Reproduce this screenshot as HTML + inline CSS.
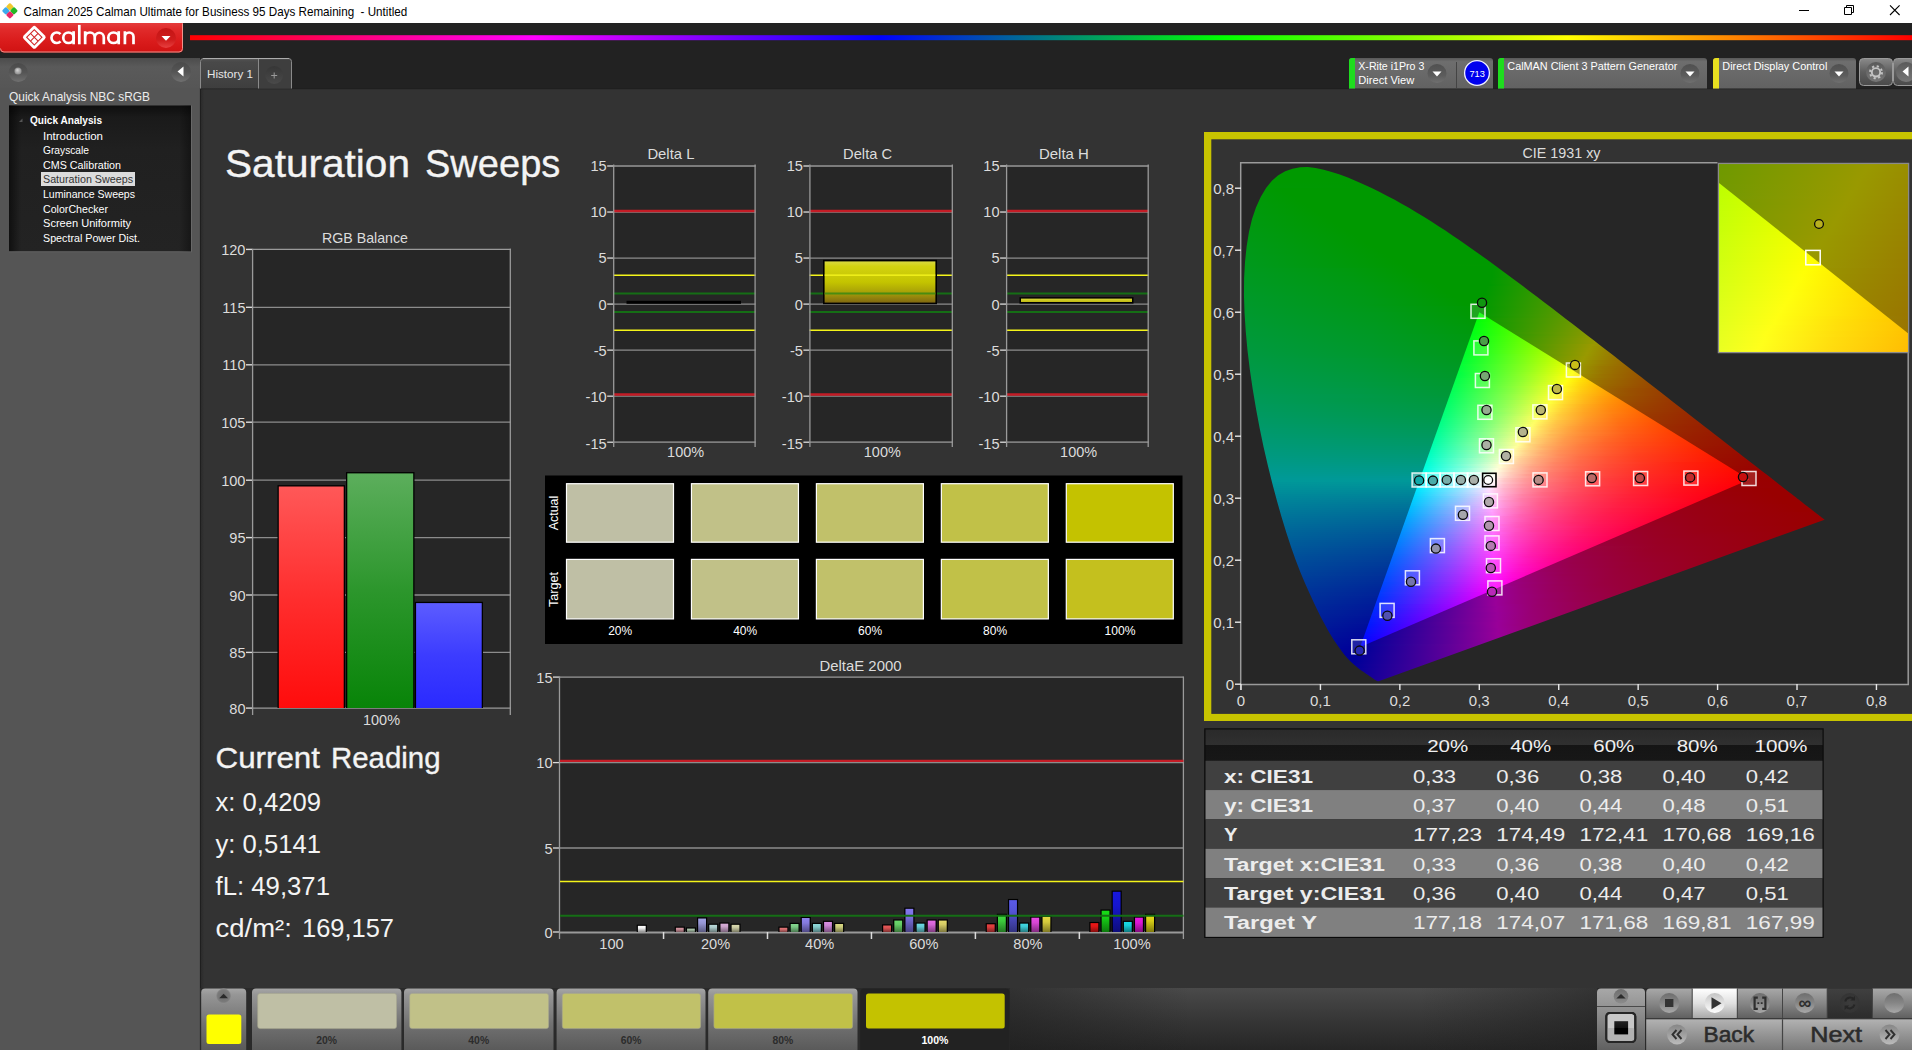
<!DOCTYPE html>
<html><head><meta charset="utf-8"><title>Calman</title>
<style>
html,body{margin:0;padding:0;background:#333;overflow:hidden}
svg{display:block;font-family:"Liberation Sans",sans-serif}
text{white-space:pre}
</style></head><body>
<svg width="1912" height="1050" viewBox="0 0 1912 1050">
<defs>
<linearGradient id="l1" x1="0" y1="0" x2="0" y2="1"><stop offset="0" stop-color="#e43c3c"/><stop offset="0.2" stop-color="#e12b2b"/><stop offset="0.6" stop-color="#da1c1c"/><stop offset="1" stop-color="#d01212"/></linearGradient>
<linearGradient id="l2" x1="0" y1="0" x2="0" y2="1"><stop offset="0" stop-color="#c41414"/><stop offset="0.6" stop-color="#d01c1c"/><stop offset="1" stop-color="#e84040"/></linearGradient>
<linearGradient id="l3" x1="0" y1="0" x2="1" y2="0"><stop offset="0" stop-color="#ff0000"/><stop offset="0.2" stop-color="#ff00ff"/><stop offset="0.4" stop-color="#0000ff"/><stop offset="0.6" stop-color="#00ff00"/><stop offset="0.8" stop-color="#ffff00"/><stop offset="1" stop-color="#ff0000"/></linearGradient>
<linearGradient id="l4" x1="0" y1="0" x2="0" y2="1"><stop offset="0" stop-color="#4a4a4a"/><stop offset="0.03" stop-color="#585858"/><stop offset="1" stop-color="#555555"/></linearGradient>
<linearGradient id="l5" x1="0" y1="0" x2="0" y2="1"><stop offset="0" stop-color="#4c4c4c"/><stop offset="0.3" stop-color="#5a5a5a"/><stop offset="1" stop-color="#565656"/></linearGradient>
<linearGradient id="l6" x1="0" y1="0" x2="1" y2="0"><stop offset="0" stop-color="#2b2b2b"/><stop offset="1" stop-color="#333333"/></linearGradient>
<linearGradient id="l7" x1="0" y1="0" x2="0" y2="1"><stop offset="0" stop-color="#4a4a4a"/><stop offset="0.5" stop-color="#555"/><stop offset="1" stop-color="#707070"/></linearGradient>
<radialGradient id="r8" cx="0.5" cy="0.5" r="0.5" fx="0.4" fy="0.35"><stop offset="0" stop-color="#d8d8d8"/><stop offset="1" stop-color="#8a8a8a"/></radialGradient>
<linearGradient id="l9" x1="0" y1="0" x2="0" y2="1"><stop offset="0" stop-color="#4a4a4a"/><stop offset="0.5" stop-color="#555"/><stop offset="1" stop-color="#707070"/></linearGradient>
<linearGradient id="l10" x1="0" y1="0" x2="0" y2="1"><stop offset="0" stop-color="#0e0e0e"/><stop offset="0.08" stop-color="#1a1a1a"/><stop offset="0.3" stop-color="#202020"/><stop offset="1" stop-color="#232323"/></linearGradient>
<linearGradient id="l11" x1="0" y1="0" x2="1" y2="0"><stop offset="0" stop-color="#0c0c0c"/><stop offset="1" stop-color="#0c0c0c"/></linearGradient>
<linearGradient id="l12" x1="0" y1="0" x2="1" y2="0"><stop offset="0" stop-color="rgba(0,0,0,0.55)"/><stop offset="1" stop-color="rgba(0,0,0,0)"/></linearGradient>
<linearGradient id="l13" x1="0" y1="0" x2="1" y2="0"><stop offset="0" stop-color="rgba(0,0,0,0)"/><stop offset="1" stop-color="rgba(0,0,0,0.35)"/></linearGradient>
<linearGradient id="l14" x1="0" y1="0" x2="0" y2="1"><stop offset="0" stop-color="#525252"/><stop offset="0.12" stop-color="#494949"/><stop offset="1" stop-color="#3e3e3e"/></linearGradient>
<linearGradient id="l15" x1="0" y1="0" x2="0" y2="1"><stop offset="0" stop-color="#363636"/><stop offset="1" stop-color="#4a4a4a"/></linearGradient>
<linearGradient id="l16" x1="0" y1="0" x2="0" y2="1"><stop offset="0" stop-color="#585858"/><stop offset="0.12" stop-color="#6e6e6e"/><stop offset="1" stop-color="#626262"/></linearGradient>
<linearGradient id="l17" x1="0" y1="0" x2="0" y2="1"><stop offset="0" stop-color="#505050"/><stop offset="0.6" stop-color="#5c5c5c"/><stop offset="1" stop-color="#707070"/></linearGradient>
<linearGradient id="l18" x1="0" y1="0" x2="0" y2="1"><stop offset="0" stop-color="#585858"/><stop offset="0.12" stop-color="#6e6e6e"/><stop offset="1" stop-color="#626262"/></linearGradient>
<linearGradient id="l19" x1="0" y1="0" x2="0" y2="1"><stop offset="0" stop-color="#505050"/><stop offset="0.6" stop-color="#5c5c5c"/><stop offset="1" stop-color="#707070"/></linearGradient>
<linearGradient id="l20" x1="0" y1="0" x2="0" y2="1"><stop offset="0" stop-color="#585858"/><stop offset="0.12" stop-color="#6e6e6e"/><stop offset="1" stop-color="#626262"/></linearGradient>
<linearGradient id="l21" x1="0" y1="0" x2="0" y2="1"><stop offset="0" stop-color="#505050"/><stop offset="0.6" stop-color="#5c5c5c"/><stop offset="1" stop-color="#707070"/></linearGradient>
<linearGradient id="l22" x1="0" y1="0" x2="0" y2="1"><stop offset="0" stop-color="#8a8a8a"/><stop offset="0.5" stop-color="#5e5e5e"/><stop offset="1" stop-color="#4a4a4a"/></linearGradient>
<linearGradient id="l23" x1="0" y1="0" x2="0" y2="1"><stop offset="0" stop-color="#5a5a5a"/><stop offset="1" stop-color="#777"/></linearGradient>
<linearGradient id="l24" x1="0" y1="0" x2="0" y2="1"><stop offset="0" stop-color="#5a5a5a"/><stop offset="1" stop-color="#777"/></linearGradient>
<linearGradient id="l25" x1="0" y1="0" x2="0" y2="1"><stop offset="0" stop-color="#ff5858"/><stop offset="0.5" stop-color="#ff2e2e"/><stop offset="1" stop-color="#ff0c0c"/></linearGradient>
<linearGradient id="l26" x1="0" y1="0" x2="0" y2="1"><stop offset="0" stop-color="#5cae5c"/><stop offset="0.5" stop-color="#2c962c"/><stop offset="1" stop-color="#088408"/></linearGradient>
<linearGradient id="l27" x1="0" y1="0" x2="0" y2="1"><stop offset="0" stop-color="#5c5cff"/><stop offset="0.5" stop-color="#3c3cff"/><stop offset="1" stop-color="#2a2aff"/></linearGradient>
<linearGradient id="l28" x1="0" y1="0" x2="0" y2="1"><stop offset="0" stop-color="#d8d840"/><stop offset="0.12" stop-color="#d2d210"/><stop offset="0.5" stop-color="#c4c400"/><stop offset="0.75" stop-color="#a8a008"/><stop offset="1" stop-color="#806810"/></linearGradient>
<linearGradient id="l29" x1="0" y1="0" x2="0" y2="1"><stop offset="0" stop-color="#d8d83a"/><stop offset="1" stop-color="#c0b810"/></linearGradient>
<linearGradient id="l30" x1="0" y1="0" x2="0" y2="1"><stop offset="0" stop-color="#ffffff"/><stop offset="0.35" stop-color="#f0f0f0"/><stop offset="1" stop-color="#909090"/></linearGradient>
<linearGradient id="l31" x1="0" y1="0" x2="0" y2="1"><stop offset="0" stop-color="#d897a2"/><stop offset="0.35" stop-color="#c88c96"/><stop offset="1" stop-color="#78545a"/></linearGradient>
<linearGradient id="l32" x1="0" y1="0" x2="0" y2="1"><stop offset="0" stop-color="#b2cdb2"/><stop offset="0.35" stop-color="#a5bea5"/><stop offset="1" stop-color="#637263"/></linearGradient>
<linearGradient id="l33" x1="0" y1="0" x2="0" y2="1"><stop offset="0" stop-color="#a2a2e4"/><stop offset="0.35" stop-color="#9696d4"/><stop offset="1" stop-color="#5a5a7f"/></linearGradient>
<linearGradient id="l34" x1="0" y1="0" x2="0" y2="1"><stop offset="0" stop-color="#b9dada"/><stop offset="0.35" stop-color="#accaca"/><stop offset="1" stop-color="#677979"/></linearGradient>
<linearGradient id="l35" x1="0" y1="0" x2="0" y2="1"><stop offset="0" stop-color="#daaeda"/><stop offset="0.35" stop-color="#caa2ca"/><stop offset="1" stop-color="#796179"/></linearGradient>
<linearGradient id="l36" x1="0" y1="0" x2="0" y2="1"><stop offset="0" stop-color="#dadaae"/><stop offset="0.35" stop-color="#cacaa2"/><stop offset="1" stop-color="#797961"/></linearGradient>
<linearGradient id="l37" x1="0" y1="0" x2="0" y2="1"><stop offset="0" stop-color="#e47678"/><stop offset="0.35" stop-color="#d46e70"/><stop offset="1" stop-color="#7f4243"/></linearGradient>
<linearGradient id="l38" x1="0" y1="0" x2="0" y2="1"><stop offset="0" stop-color="#83d88e"/><stop offset="0.35" stop-color="#7ac884"/><stop offset="1" stop-color="#49784f"/></linearGradient>
<linearGradient id="l39" x1="0" y1="0" x2="0" y2="1"><stop offset="0" stop-color="#8e83ef"/><stop offset="0.35" stop-color="#847ade"/><stop offset="1" stop-color="#4f4985"/></linearGradient>
<linearGradient id="l40" x1="0" y1="0" x2="0" y2="1"><stop offset="0" stop-color="#8edada"/><stop offset="0.35" stop-color="#84caca"/><stop offset="1" stop-color="#4f7979"/></linearGradient>
<linearGradient id="l41" x1="0" y1="0" x2="0" y2="1"><stop offset="0" stop-color="#da8ee4"/><stop offset="0.35" stop-color="#ca84d4"/><stop offset="1" stop-color="#794f7f"/></linearGradient>
<linearGradient id="l42" x1="0" y1="0" x2="0" y2="1"><stop offset="0" stop-color="#dada83"/><stop offset="0.35" stop-color="#caca7a"/><stop offset="1" stop-color="#797949"/></linearGradient>
<linearGradient id="l43" x1="0" y1="0" x2="0" y2="1"><stop offset="0" stop-color="#e95858"/><stop offset="0.35" stop-color="#d85252"/><stop offset="1" stop-color="#813131"/></linearGradient>
<linearGradient id="l44" x1="0" y1="0" x2="0" y2="1"><stop offset="0" stop-color="#6cda6c"/><stop offset="0.35" stop-color="#64ca64"/><stop offset="1" stop-color="#3c793c"/></linearGradient>
<linearGradient id="l45" x1="0" y1="0" x2="0" y2="1"><stop offset="0" stop-color="#8378ef"/><stop offset="0.35" stop-color="#7a70de"/><stop offset="1" stop-color="#494385"/></linearGradient>
<linearGradient id="l46" x1="0" y1="0" x2="0" y2="1"><stop offset="0" stop-color="#6cdae4"/><stop offset="0.35" stop-color="#64cad4"/><stop offset="1" stop-color="#3c797f"/></linearGradient>
<linearGradient id="l47" x1="0" y1="0" x2="0" y2="1"><stop offset="0" stop-color="#e46ce4"/><stop offset="0.35" stop-color="#d464d4"/><stop offset="1" stop-color="#7f3c7f"/></linearGradient>
<linearGradient id="l48" x1="0" y1="0" x2="0" y2="1"><stop offset="0" stop-color="#e4da6c"/><stop offset="0.35" stop-color="#d4ca64"/><stop offset="1" stop-color="#7f793c"/></linearGradient>
<linearGradient id="l49" x1="0" y1="0" x2="0" y2="1"><stop offset="0" stop-color="#e94040"/><stop offset="0.35" stop-color="#d83c3c"/><stop offset="1" stop-color="#812424"/></linearGradient>
<linearGradient id="l50" x1="0" y1="0" x2="0" y2="1"><stop offset="0" stop-color="#40da40"/><stop offset="0.35" stop-color="#3cca3c"/><stop offset="1" stop-color="#247924"/></linearGradient>
<linearGradient id="l51" x1="0" y1="0" x2="0" y2="1"><stop offset="0" stop-color="#5a5ae7"/><stop offset="0.35" stop-color="#5454d6"/><stop offset="1" stop-color="#323280"/></linearGradient>
<linearGradient id="l52" x1="0" y1="0" x2="0" y2="1"><stop offset="0" stop-color="#40dae4"/><stop offset="0.35" stop-color="#3ccad4"/><stop offset="1" stop-color="#24797f"/></linearGradient>
<linearGradient id="l53" x1="0" y1="0" x2="0" y2="1"><stop offset="0" stop-color="#e94be4"/><stop offset="0.35" stop-color="#d846d4"/><stop offset="1" stop-color="#812a7f"/></linearGradient>
<linearGradient id="l54" x1="0" y1="0" x2="0" y2="1"><stop offset="0" stop-color="#e4da40"/><stop offset="0.35" stop-color="#d4ca3c"/><stop offset="1" stop-color="#7f7924"/></linearGradient>
<linearGradient id="l55" x1="0" y1="0" x2="0" y2="1"><stop offset="0" stop-color="#f11717"/><stop offset="0.35" stop-color="#e01616"/><stop offset="1" stop-color="#860d0d"/></linearGradient>
<linearGradient id="l56" x1="0" y1="0" x2="0" y2="1"><stop offset="0" stop-color="#17dc17"/><stop offset="0.35" stop-color="#16cc16"/><stop offset="1" stop-color="#0d7a0d"/></linearGradient>
<linearGradient id="l57" x1="0" y1="0" x2="0" y2="1"><stop offset="0" stop-color="#1717de"/><stop offset="0.35" stop-color="#1616ce"/><stop offset="1" stop-color="#0d0d7b"/></linearGradient>
<linearGradient id="l58" x1="0" y1="0" x2="0" y2="1"><stop offset="0" stop-color="#17dce7"/><stop offset="0.35" stop-color="#16ccd6"/><stop offset="1" stop-color="#0d7a80"/></linearGradient>
<linearGradient id="l59" x1="0" y1="0" x2="0" y2="1"><stop offset="0" stop-color="#eb17e4"/><stop offset="0.35" stop-color="#da16d4"/><stop offset="1" stop-color="#820d7f"/></linearGradient>
<linearGradient id="l60" x1="0" y1="0" x2="0" y2="1"><stop offset="0" stop-color="#e7dc17"/><stop offset="0.35" stop-color="#d6cc16"/><stop offset="1" stop-color="#807a0d"/></linearGradient>
<linearGradient id="l61" x1="0" y1="0" x2="0" y2="1"><stop offset="0" stop-color="#2a2a2a"/><stop offset="0.5" stop-color="#303030"/><stop offset="0.51" stop-color="#151515"/><stop offset="1" stop-color="#171717"/></linearGradient>
<clipPath id="cpl"><path d="M1379.29 681.1 L1379.28 681.1 L1379.26 681.1 L1379.24 681.1 L1379.21 681.1 L1379.17 681.11 L1379.13 681.13 L1379.09 681.15 L1379.05 681.16 L1379.01 681.16 L1378.97 681.16 L1378.94 681.16 L1378.89 681.16 L1378.84 681.17 L1378.78 681.19 L1378.71 681.21 L1378.65 681.22 L1378.59 681.23 L1378.54 681.23 L1378.48 681.23 L1378.41 681.22 L1378.34 681.22 L1378.26 681.22 L1378.18 681.22 L1378.1 681.22 L1378.01 681.23 L1377.91 681.24 L1377.81 681.24 L1377.7 681.22 L1377.58 681.2 L1377.45 681.16 L1377.31 681.11 L1377.14 681.04 L1376.95 680.95 L1376.74 680.85 L1376.51 680.74 L1376.27 680.6 L1376.02 680.46 L1375.76 680.3 L1375.47 680.12 L1375.16 679.92 L1374.8 679.69 L1374.42 679.44 L1374 679.17 L1373.57 678.87 L1373.12 678.55 L1372.64 678.2 L1372.13 677.83 L1371.58 677.44 L1370.99 677.03 L1370.37 676.61 L1369.7 676.15 L1368.96 675.64 L1368.16 675.1 L1367.29 674.52 L1366.36 673.89 L1365.39 673.23 L1364.36 672.53 L1363.29 671.8 L1362.15 671 L1360.94 670.13 L1359.66 669.17 L1358.3 668.16 L1356.88 667.04 L1355.38 665.79 L1353.83 664.46 L1352.22 663.05 L1350.51 661.43 L1348.63 659.46 L1346.58 657.18 L1344.4 654.64 L1342.06 651.73 L1339.57 648.36 L1336.94 644.6 L1334.16 640.46 L1331.2 635.78 L1328.06 630.38 L1324.71 624.33 L1321.19 617.67 L1317.46 610.25 L1313.52 601.93 L1309.28 592.73 L1304.79 582.72 L1300.18 571.77 L1295.57 559.77 L1290.95 546.64 L1286.28 532.46 L1281.62 517.32 L1277.06 501.3 L1272.51 484.19 L1267.97 466.03 L1263.62 447.26 L1259.67 428.33 L1256.05 409.06 L1252.72 389.31 L1249.81 369.59 L1247.51 350.39 L1245.78 331.64 L1244.55 313.13 L1243.95 295.22 L1244.1 278.22 L1245.01 262.03 L1246.61 246.53 L1248.95 232.09 L1252.04 219.08 L1255.97 207.45 L1260.71 197.07 L1266.07 188.11 L1271.9 180.76 L1278.26 175.21 L1285.22 171.31 L1292.54 168.76 L1300.02 167.24 L1307.68 166.96 L1315.61 167.97 L1323.67 169.8 L1331.71 171.96 L1339.76 174.49 L1347.88 177.6 L1355.95 181.04 L1363.88 184.54 L1371.62 188.09 L1379.24 191.8 L1386.76 195.65 L1394.22 199.61 L1401.6 203.67 L1408.9 207.85 L1416.14 212.14 L1423.37 216.53 L1430.6 221.04 L1437.79 225.65 L1444.97 230.36 L1452.12 235.13 L1459.26 239.99 L1466.37 244.92 L1473.46 249.92 L1480.56 254.97 L1487.65 260.08 L1494.74 265.24 L1501.82 270.44 L1508.92 275.68 L1516.02 280.96 L1523.14 286.29 L1530.25 291.64 L1537.35 297.01 L1544.44 302.4 L1551.51 307.81 L1558.58 313.23 L1565.63 318.65 L1572.68 324.06 L1579.73 329.48 L1586.76 334.89 L1593.75 340.29 L1600.7 345.66 L1607.61 351.03 L1614.49 356.37 L1621.31 361.68 L1628.08 366.94 L1634.81 372.18 L1641.48 377.37 L1648.08 382.51 L1654.61 387.59 L1661.07 392.62 L1667.45 397.59 L1673.73 402.47 L1679.93 407.28 L1686.04 412.01 L1692.03 416.65 L1697.88 421.2 L1703.6 425.65 L1709.2 430.02 L1714.63 434.27 L1719.88 438.37 L1724.92 442.29 L1729.78 446.07 L1734.47 449.71 L1739.03 453.25 L1743.46 456.7 L1747.77 460.05 L1751.91 463.26 L1755.87 466.33 L1759.62 469.24 L1763.2 471.99 L1766.6 474.61 L1769.84 477.12 L1772.92 479.51 L1775.83 481.79 L1778.59 483.94 L1781.2 485.99 L1783.67 487.91 L1785.99 489.73 L1788.18 491.43 L1790.26 493.05 L1792.23 494.58 L1794.08 496 L1795.82 497.35 L1797.49 498.63 L1799.06 499.86 L1800.53 501.01 L1801.94 502.11 L1803.28 503.16 L1804.58 504.17 L1805.82 505.14 L1807 506.06 L1808.13 506.94 L1809.2 507.78 L1810.22 508.58 L1811.19 509.33 L1812.1 510.04 L1812.97 510.71 L1813.79 511.33 L1814.56 511.91 L1815.28 512.46 L1815.94 512.97 L1816.55 513.45 L1817.12 513.9 L1817.66 514.32 L1818.17 514.72 L1818.64 515.08 L1819.08 515.43 L1819.49 515.75 L1819.87 516.04 L1820.22 516.32 L1820.55 516.57 L1820.84 516.8 L1821.09 517 L1821.32 517.17 L1821.52 517.33 L1821.71 517.48 L1821.91 517.63 L1822.09 517.78 L1822.26 517.91 L1822.43 518.04 L1822.58 518.16 L1822.72 518.26 L1822.85 518.37 L1822.98 518.47 L1823.12 518.58 L1823.27 518.69 L1823.41 518.8 L1823.54 518.91 L1823.67 519.01 L1823.79 519.11 L1823.91 519.2 L1824.02 519.28 L1824.11 519.35 L1824.19 519.42 L1824.27 519.48 L1824.33 519.53 L1824.39 519.57 L1824.43 519.6 L1824.46 519.63 L1824.49 519.65 L1824.52 519.67 L1824.54 519.69 L1824.56 519.7 L1824.57 519.71Z"/></clipPath>
<clipPath id="cpt"><path d="M1749.35 479.6 L1479.29 312.2 L1360.14 647Z"/></clipPath>
<linearGradient id="c62" gradientUnits="userSpaceOnUse" x1="1295" x2="1317" y1="0" y2="0"><stop offset="0" stop-color="#009900"/><stop offset="1" stop-color="#009900"/></linearGradient>
<linearGradient id="c63" gradientUnits="userSpaceOnUse" x1="1287" x2="1326" y1="0" y2="0"><stop offset="0" stop-color="#009900"/><stop offset="1" stop-color="#009900"/></linearGradient>
<linearGradient id="c64" gradientUnits="userSpaceOnUse" x1="1282" x2="1333" y1="0" y2="0"><stop offset="0" stop-color="#009900"/><stop offset="1" stop-color="#009900"/></linearGradient>
<linearGradient id="c65" gradientUnits="userSpaceOnUse" x1="1279" x2="1340" y1="0" y2="0"><stop offset="0" stop-color="#009900"/><stop offset="1" stop-color="#009900"/></linearGradient>
<linearGradient id="c66" gradientUnits="userSpaceOnUse" x1="1276" x2="1345" y1="0" y2="0"><stop offset="0" stop-color="#009900"/><stop offset="1" stop-color="#009900"/></linearGradient>
<linearGradient id="c67" gradientUnits="userSpaceOnUse" x1="1274" x2="1350" y1="0" y2="0"><stop offset="0" stop-color="#009900"/><stop offset="1" stop-color="#009900"/></linearGradient>
<linearGradient id="c68" gradientUnits="userSpaceOnUse" x1="1271" x2="1355" y1="0" y2="0"><stop offset="0" stop-color="#009900"/><stop offset="1" stop-color="#009900"/></linearGradient>
<linearGradient id="c69" gradientUnits="userSpaceOnUse" x1="1269" x2="1360" y1="0" y2="0"><stop offset="0" stop-color="#009900"/><stop offset="1" stop-color="#009900"/></linearGradient>
<linearGradient id="c70" gradientUnits="userSpaceOnUse" x1="1268" x2="1364" y1="0" y2="0"><stop offset="0" stop-color="#009901"/><stop offset="1" stop-color="#009900"/></linearGradient>
<linearGradient id="c71" gradientUnits="userSpaceOnUse" x1="1266" x2="1369" y1="0" y2="0"><stop offset="0" stop-color="#009902"/><stop offset="1" stop-color="#009900"/></linearGradient>
<linearGradient id="c72" gradientUnits="userSpaceOnUse" x1="1265" x2="1373" y1="0" y2="0"><stop offset="0" stop-color="#009903"/><stop offset="1" stop-color="#009900"/></linearGradient>
<linearGradient id="c73" gradientUnits="userSpaceOnUse" x1="1263" x2="1377" y1="0" y2="0"><stop offset="0" stop-color="#009904"/><stop offset="0.16" stop-color="#009900"/><stop offset="1" stop-color="#009900"/></linearGradient>
<linearGradient id="c74" gradientUnits="userSpaceOnUse" x1="1262" x2="1381" y1="0" y2="0"><stop offset="0" stop-color="#009904"/><stop offset="0.18" stop-color="#009900"/><stop offset="1" stop-color="#009900"/></linearGradient>
<linearGradient id="c75" gradientUnits="userSpaceOnUse" x1="1261" x2="1385" y1="0" y2="0"><stop offset="0" stop-color="#009905"/><stop offset="0.21" stop-color="#009900"/><stop offset="1" stop-color="#009900"/></linearGradient>
<linearGradient id="c76" gradientUnits="userSpaceOnUse" x1="1260" x2="1389" y1="0" y2="0"><stop offset="0" stop-color="#009906"/><stop offset="0.24" stop-color="#009900"/><stop offset="1" stop-color="#009900"/></linearGradient>
<linearGradient id="c77" gradientUnits="userSpaceOnUse" x1="1259" x2="1393" y1="0" y2="0"><stop offset="0" stop-color="#009907"/><stop offset="0.26" stop-color="#009900"/><stop offset="1" stop-color="#009900"/></linearGradient>
<linearGradient id="c78" gradientUnits="userSpaceOnUse" x1="1258" x2="1396" y1="0" y2="0"><stop offset="0" stop-color="#009907"/><stop offset="0.28" stop-color="#009900"/><stop offset="1" stop-color="#009900"/></linearGradient>
<linearGradient id="c79" gradientUnits="userSpaceOnUse" x1="1257" x2="1400" y1="0" y2="0"><stop offset="0" stop-color="#009908"/><stop offset="0.3" stop-color="#009900"/><stop offset="1" stop-color="#009900"/></linearGradient>
<linearGradient id="c80" gradientUnits="userSpaceOnUse" x1="1256" x2="1404" y1="0" y2="0"><stop offset="0" stop-color="#009909"/><stop offset="0.32" stop-color="#009900"/><stop offset="1" stop-color="#009900"/></linearGradient>
<linearGradient id="c81" gradientUnits="userSpaceOnUse" x1="1255" x2="1407" y1="0" y2="0"><stop offset="0" stop-color="#00990a"/><stop offset="0.34" stop-color="#009900"/><stop offset="1" stop-color="#009900"/></linearGradient>
<linearGradient id="c82" gradientUnits="userSpaceOnUse" x1="1254" x2="1411" y1="0" y2="0"><stop offset="0" stop-color="#00990a"/><stop offset="0.36" stop-color="#009900"/><stop offset="1" stop-color="#009900"/></linearGradient>
<linearGradient id="c83" gradientUnits="userSpaceOnUse" x1="1254" x2="1414" y1="0" y2="0"><stop offset="0" stop-color="#00990b"/><stop offset="0.37" stop-color="#009900"/><stop offset="1" stop-color="#009900"/></linearGradient>
<linearGradient id="c84" gradientUnits="userSpaceOnUse" x1="1253" x2="1417" y1="0" y2="0"><stop offset="0" stop-color="#00990c"/><stop offset="0.38" stop-color="#009900"/><stop offset="1" stop-color="#009900"/></linearGradient>
<linearGradient id="c85" gradientUnits="userSpaceOnUse" x1="1252" x2="1421" y1="0" y2="0"><stop offset="0" stop-color="#00990c"/><stop offset="0.4" stop-color="#009900"/><stop offset="1" stop-color="#009900"/></linearGradient>
<linearGradient id="c86" gradientUnits="userSpaceOnUse" x1="1252" x2="1424" y1="0" y2="0"><stop offset="0" stop-color="#00990d"/><stop offset="0.41" stop-color="#009900"/><stop offset="1" stop-color="#009900"/></linearGradient>
<linearGradient id="c87" gradientUnits="userSpaceOnUse" x1="1251" x2="1427" y1="0" y2="0"><stop offset="0" stop-color="#00990e"/><stop offset="0.43" stop-color="#009900"/><stop offset="1" stop-color="#009900"/></linearGradient>
<linearGradient id="c88" gradientUnits="userSpaceOnUse" x1="1250" x2="1430" y1="0" y2="0"><stop offset="0" stop-color="#00990e"/><stop offset="0.44" stop-color="#009900"/><stop offset="1" stop-color="#009900"/></linearGradient>
<linearGradient id="c89" gradientUnits="userSpaceOnUse" x1="1250" x2="1434" y1="0" y2="0"><stop offset="0" stop-color="#00990f"/><stop offset="0.45" stop-color="#009900"/><stop offset="1" stop-color="#009900"/></linearGradient>
<linearGradient id="c90" gradientUnits="userSpaceOnUse" x1="1249" x2="1437" y1="0" y2="0"><stop offset="0" stop-color="#009910"/><stop offset="0.46" stop-color="#009900"/><stop offset="1" stop-color="#009900"/></linearGradient>
<linearGradient id="c91" gradientUnits="userSpaceOnUse" x1="1249" x2="1440" y1="0" y2="0"><stop offset="0" stop-color="#009910"/><stop offset="0.47" stop-color="#009900"/><stop offset="1" stop-color="#009900"/></linearGradient>
<linearGradient id="c92" gradientUnits="userSpaceOnUse" x1="1248" x2="1443" y1="0" y2="0"><stop offset="0" stop-color="#009911"/><stop offset="0.48" stop-color="#009900"/><stop offset="1" stop-color="#009900"/></linearGradient>
<linearGradient id="c93" gradientUnits="userSpaceOnUse" x1="1248" x2="1446" y1="0" y2="0"><stop offset="0" stop-color="#009912"/><stop offset="0.49" stop-color="#009900"/><stop offset="1" stop-color="#009900"/></linearGradient>
<linearGradient id="c94" gradientUnits="userSpaceOnUse" x1="1247" x2="1449" y1="0" y2="0"><stop offset="0" stop-color="#009912"/><stop offset="0.5" stop-color="#009900"/><stop offset="1" stop-color="#009900"/></linearGradient>
<linearGradient id="c95" gradientUnits="userSpaceOnUse" x1="1247" x2="1452" y1="0" y2="0"><stop offset="0" stop-color="#009913"/><stop offset="0.51" stop-color="#009900"/><stop offset="1" stop-color="#009900"/></linearGradient>
<linearGradient id="c96" gradientUnits="userSpaceOnUse" x1="1247" x2="1455" y1="0" y2="0"><stop offset="0" stop-color="#009914"/><stop offset="0.52" stop-color="#009900"/><stop offset="1" stop-color="#009900"/></linearGradient>
<linearGradient id="c97" gradientUnits="userSpaceOnUse" x1="1246" x2="1458" y1="0" y2="0"><stop offset="0" stop-color="#009914"/><stop offset="0.53" stop-color="#009900"/><stop offset="1" stop-color="#009900"/></linearGradient>
<linearGradient id="c98" gradientUnits="userSpaceOnUse" x1="1246" x2="1461" y1="0" y2="0"><stop offset="0" stop-color="#009915"/><stop offset="0.53" stop-color="#009900"/><stop offset="1" stop-color="#009900"/></linearGradient>
<linearGradient id="c99" gradientUnits="userSpaceOnUse" x1="1246" x2="1464" y1="0" y2="0"><stop offset="0" stop-color="#009915"/><stop offset="0.55" stop-color="#009900"/><stop offset="1" stop-color="#009900"/></linearGradient>
<linearGradient id="c100" gradientUnits="userSpaceOnUse" x1="1246" x2="1467" y1="0" y2="0"><stop offset="0" stop-color="#009916"/><stop offset="0.55" stop-color="#009900"/><stop offset="1" stop-color="#009900"/></linearGradient>
<linearGradient id="c101" gradientUnits="userSpaceOnUse" x1="1245" x2="1469" y1="0" y2="0"><stop offset="0" stop-color="#009917"/><stop offset="0.56" stop-color="#009900"/><stop offset="1" stop-color="#009900"/></linearGradient>
<linearGradient id="c102" gradientUnits="userSpaceOnUse" x1="1245" x2="1472" y1="0" y2="0"><stop offset="0" stop-color="#009917"/><stop offset="0.57" stop-color="#009900"/><stop offset="1" stop-color="#009900"/></linearGradient>
<linearGradient id="c103" gradientUnits="userSpaceOnUse" x1="1245" x2="1475" y1="0" y2="0"><stop offset="0" stop-color="#009918"/><stop offset="0.58" stop-color="#009900"/><stop offset="1" stop-color="#009900"/></linearGradient>
<linearGradient id="c104" gradientUnits="userSpaceOnUse" x1="1245" x2="1478" y1="0" y2="0"><stop offset="0" stop-color="#009919"/><stop offset="0.58" stop-color="#009900"/><stop offset="1" stop-color="#009900"/></linearGradient>
<linearGradient id="c105" gradientUnits="userSpaceOnUse" x1="1244" x2="1481" y1="0" y2="0"><stop offset="0" stop-color="#009919"/><stop offset="0.59" stop-color="#009900"/><stop offset="1" stop-color="#009900"/></linearGradient>
<linearGradient id="c106" gradientUnits="userSpaceOnUse" x1="1244" x2="1483" y1="0" y2="0"><stop offset="0" stop-color="#00991a"/><stop offset="0.6" stop-color="#009900"/><stop offset="1" stop-color="#009900"/></linearGradient>
<linearGradient id="c107" gradientUnits="userSpaceOnUse" x1="1244" x2="1486" y1="0" y2="0"><stop offset="0" stop-color="#00991b"/><stop offset="0.6" stop-color="#009900"/><stop offset="1" stop-color="#009900"/></linearGradient>
<linearGradient id="c108" gradientUnits="userSpaceOnUse" x1="1244" x2="1489" y1="0" y2="0"><stop offset="0" stop-color="#00991b"/><stop offset="0.61" stop-color="#009900"/><stop offset="1" stop-color="#009900"/></linearGradient>
<linearGradient id="c109" gradientUnits="userSpaceOnUse" x1="1244" x2="1492" y1="0" y2="0"><stop offset="0" stop-color="#00991c"/><stop offset="0.62" stop-color="#009900"/><stop offset="1" stop-color="#009900"/></linearGradient>
<linearGradient id="c110" gradientUnits="userSpaceOnUse" x1="1243" x2="1495" y1="0" y2="0"><stop offset="0" stop-color="#00991d"/><stop offset="0.62" stop-color="#009900"/><stop offset="1" stop-color="#009900"/></linearGradient>
<linearGradient id="c111" gradientUnits="userSpaceOnUse" x1="1243" x2="1497" y1="0" y2="0"><stop offset="0" stop-color="#00991d"/><stop offset="0.63" stop-color="#009900"/><stop offset="1" stop-color="#019900"/></linearGradient>
<linearGradient id="c112" gradientUnits="userSpaceOnUse" x1="1243" x2="1500" y1="0" y2="0"><stop offset="0" stop-color="#00991e"/><stop offset="0.64" stop-color="#009900"/><stop offset="0.98" stop-color="#009900"/><stop offset="1" stop-color="#059900"/></linearGradient>
<linearGradient id="c113" gradientUnits="userSpaceOnUse" x1="1243" x2="1503" y1="0" y2="0"><stop offset="0" stop-color="#00991f"/><stop offset="0.38" stop-color="#00990f"/><stop offset="0.64" stop-color="#009900"/><stop offset="0.97" stop-color="#009900"/><stop offset="1" stop-color="#099900"/></linearGradient>
<linearGradient id="c114" gradientUnits="userSpaceOnUse" x1="1243" x2="1505" y1="0" y2="0"><stop offset="0" stop-color="#00991f"/><stop offset="0.39" stop-color="#00990f"/><stop offset="0.65" stop-color="#009900"/><stop offset="0.95" stop-color="#009900"/><stop offset="1" stop-color="#0c9900"/></linearGradient>
<linearGradient id="c115" gradientUnits="userSpaceOnUse" x1="1243" x2="1508" y1="0" y2="0"><stop offset="0" stop-color="#009920"/><stop offset="0.39" stop-color="#009910"/><stop offset="0.65" stop-color="#009900"/><stop offset="0.94" stop-color="#009900"/><stop offset="1" stop-color="#0f9900"/></linearGradient>
<linearGradient id="c116" gradientUnits="userSpaceOnUse" x1="1243" x2="1511" y1="0" y2="0"><stop offset="0" stop-color="#009921"/><stop offset="0.39" stop-color="#009910"/><stop offset="0.66" stop-color="#009900"/><stop offset="0.93" stop-color="#009900"/><stop offset="1" stop-color="#139900"/></linearGradient>
<linearGradient id="c117" gradientUnits="userSpaceOnUse" x1="1243" x2="1514" y1="0" y2="0"><stop offset="0" stop-color="#009921"/><stop offset="0.39" stop-color="#009911"/><stop offset="0.66" stop-color="#009900"/><stop offset="0.92" stop-color="#009900"/><stop offset="1" stop-color="#169900"/></linearGradient>
<linearGradient id="c118" gradientUnits="userSpaceOnUse" x1="1243" x2="1516" y1="0" y2="0"><stop offset="0" stop-color="#009922"/><stop offset="0.4" stop-color="#009911"/><stop offset="0.67" stop-color="#009900"/><stop offset="0.91" stop-color="#009900"/><stop offset="1" stop-color="#199900"/></linearGradient>
<linearGradient id="c119" gradientUnits="userSpaceOnUse" x1="1243" x2="1519" y1="0" y2="0"><stop offset="0" stop-color="#009923"/><stop offset="0.4" stop-color="#009911"/><stop offset="0.67" stop-color="#009900"/><stop offset="0.89" stop-color="#009900"/><stop offset="1" stop-color="#1d9900"/></linearGradient>
<linearGradient id="c120" gradientUnits="userSpaceOnUse" x1="1243" x2="1522" y1="0" y2="0"><stop offset="0" stop-color="#009923"/><stop offset="0.4" stop-color="#009912"/><stop offset="0.68" stop-color="#009900"/><stop offset="0.88" stop-color="#009900"/><stop offset="1" stop-color="#209900"/></linearGradient>
<linearGradient id="c121" gradientUnits="userSpaceOnUse" x1="1243" x2="1524" y1="0" y2="0"><stop offset="0" stop-color="#009924"/><stop offset="0.41" stop-color="#009912"/><stop offset="0.69" stop-color="#009900"/><stop offset="0.88" stop-color="#009900"/><stop offset="1" stop-color="#239900"/></linearGradient>
<linearGradient id="c122" gradientUnits="userSpaceOnUse" x1="1243" x2="1527" y1="0" y2="0"><stop offset="0" stop-color="#009925"/><stop offset="0.41" stop-color="#009913"/><stop offset="0.69" stop-color="#009900"/><stop offset="0.86" stop-color="#009900"/><stop offset="1" stop-color="#279900"/></linearGradient>
<linearGradient id="c123" gradientUnits="userSpaceOnUse" x1="1242" x2="1530" y1="0" y2="0"><stop offset="0" stop-color="#009926"/><stop offset="0.41" stop-color="#009913"/><stop offset="0.69" stop-color="#009900"/><stop offset="0.85" stop-color="#009900"/><stop offset="1" stop-color="#2a9900"/></linearGradient>
<linearGradient id="c124" gradientUnits="userSpaceOnUse" x1="1242" x2="1532" y1="0" y2="0"><stop offset="0" stop-color="#009926"/><stop offset="0.41" stop-color="#009914"/><stop offset="0.7" stop-color="#009900"/><stop offset="0.84" stop-color="#009900"/><stop offset="1" stop-color="#2d9900"/></linearGradient>
<linearGradient id="c125" gradientUnits="userSpaceOnUse" x1="1242" x2="1535" y1="0" y2="0"><stop offset="0" stop-color="#009927"/><stop offset="0.42" stop-color="#009914"/><stop offset="0.7" stop-color="#009900"/><stop offset="0.83" stop-color="#009900"/><stop offset="1" stop-color="#319900"/></linearGradient>
<linearGradient id="c126" gradientUnits="userSpaceOnUse" x1="1242" x2="1538" y1="0" y2="0"><stop offset="0" stop-color="#009928"/><stop offset="0.42" stop-color="#009914"/><stop offset="0.71" stop-color="#009900"/><stop offset="0.82" stop-color="#009900"/><stop offset="1" stop-color="#359900"/></linearGradient>
<linearGradient id="c127" gradientUnits="userSpaceOnUse" x1="1242" x2="1540" y1="0" y2="0"><stop offset="0" stop-color="#009929"/><stop offset="0.42" stop-color="#009915"/><stop offset="0.71" stop-color="#009900"/><stop offset="0.81" stop-color="#009900"/><stop offset="1" stop-color="#389900"/></linearGradient>
<linearGradient id="c128" gradientUnits="userSpaceOnUse" x1="1243" x2="1543" y1="0" y2="0"><stop offset="0" stop-color="#009929"/><stop offset="0.43" stop-color="#009915"/><stop offset="0.72" stop-color="#009900"/><stop offset="0.8" stop-color="#009900"/><stop offset="1" stop-color="#3c9900"/></linearGradient>
<linearGradient id="c129" gradientUnits="userSpaceOnUse" x1="1243" x2="1545" y1="0" y2="0"><stop offset="0" stop-color="#00992a"/><stop offset="0.43" stop-color="#009916"/><stop offset="0.72" stop-color="#009900"/><stop offset="0.79" stop-color="#009900"/><stop offset="1" stop-color="#3f9900"/></linearGradient>
<linearGradient id="c130" gradientUnits="userSpaceOnUse" x1="1243" x2="1548" y1="0" y2="0"><stop offset="0" stop-color="#00992b"/><stop offset="0.43" stop-color="#009916"/><stop offset="0.73" stop-color="#009900"/><stop offset="0.78" stop-color="#009900"/><stop offset="1" stop-color="#439900"/></linearGradient>
<linearGradient id="c131" gradientUnits="userSpaceOnUse" x1="1243" x2="1551" y1="0" y2="0"><stop offset="0" stop-color="#00992b"/><stop offset="0.38" stop-color="#009919"/><stop offset="0.73" stop-color="#009900"/><stop offset="0.77" stop-color="#009900"/><stop offset="1" stop-color="#479900"/></linearGradient>
<linearGradient id="c132" gradientUnits="userSpaceOnUse" x1="1243" x2="1553" y1="0" y2="0"><stop offset="0" stop-color="#00992c"/><stop offset="0.4" stop-color="#009919"/><stop offset="0.77" stop-color="#009900"/><stop offset="1" stop-color="#4a9900"/></linearGradient>
<linearGradient id="c133" gradientUnits="userSpaceOnUse" x1="1243" x2="1556" y1="0" y2="0"><stop offset="0" stop-color="#00992d"/><stop offset="0.42" stop-color="#009919"/><stop offset="0.76" stop-color="#009900"/><stop offset="1" stop-color="#4f9900"/></linearGradient>
<linearGradient id="c134" gradientUnits="userSpaceOnUse" x1="1243" x2="1558" y1="0" y2="0"><stop offset="0" stop-color="#00992e"/><stop offset="0.43" stop-color="#009918"/><stop offset="0.75" stop-color="#009900"/><stop offset="1" stop-color="#529900"/></linearGradient>
<linearGradient id="c135" gradientUnits="userSpaceOnUse" x1="1243" x2="1561" y1="0" y2="0"><stop offset="0" stop-color="#00992e"/><stop offset="0.44" stop-color="#009919"/><stop offset="0.74" stop-color="#009901"/><stop offset="1" stop-color="#569900"/></linearGradient>
<linearGradient id="c136" gradientUnits="userSpaceOnUse" x1="1243" x2="1564" y1="0" y2="0"><stop offset="0" stop-color="#00992f"/><stop offset="0.43" stop-color="#00991a"/><stop offset="0.73" stop-color="#009902"/><stop offset="1" stop-color="#5b9900"/></linearGradient>
<linearGradient id="c137" gradientUnits="userSpaceOnUse" x1="1243" x2="1566" y1="0" y2="0"><stop offset="0" stop-color="#009930"/><stop offset="0.42" stop-color="#00991b"/><stop offset="0.72" stop-color="#009904"/><stop offset="0.76" stop-color="#0b9900"/><stop offset="1" stop-color="#5e9900"/></linearGradient>
<linearGradient id="c138" gradientUnits="userSpaceOnUse" x1="1243" x2="1569" y1="0" y2="0"><stop offset="0" stop-color="#009931"/><stop offset="0.41" stop-color="#00991c"/><stop offset="0.72" stop-color="#009905"/><stop offset="0.76" stop-color="#119900"/><stop offset="1" stop-color="#639900"/></linearGradient>
<linearGradient id="c139" gradientUnits="userSpaceOnUse" x1="1244" x2="1571" y1="0" y2="0"><stop offset="0" stop-color="#009932"/><stop offset="0.4" stop-color="#00991d"/><stop offset="0.71" stop-color="#009906"/><stop offset="0.76" stop-color="#159900"/><stop offset="1" stop-color="#679900"/></linearGradient>
<linearGradient id="c140" gradientUnits="userSpaceOnUse" x1="1244" x2="1574" y1="0" y2="0"><stop offset="0" stop-color="#009932"/><stop offset="0.4" stop-color="#00991e"/><stop offset="0.7" stop-color="#009907"/><stop offset="0.77" stop-color="#199900"/><stop offset="1" stop-color="#6c9900"/></linearGradient>
<linearGradient id="c141" gradientUnits="userSpaceOnUse" x1="1244" x2="1577" y1="0" y2="0"><stop offset="0" stop-color="#009933"/><stop offset="0.39" stop-color="#00991f"/><stop offset="0.69" stop-color="#009909"/><stop offset="0.77" stop-color="#1d9900"/><stop offset="1" stop-color="#719900"/></linearGradient>
<linearGradient id="c142" gradientUnits="userSpaceOnUse" x1="1244" x2="1579" y1="0" y2="0"><stop offset="0" stop-color="#009934"/><stop offset="0.39" stop-color="#009920"/><stop offset="0.69" stop-color="#00990a"/><stop offset="0.78" stop-color="#229900"/><stop offset="1" stop-color="#759900"/></linearGradient>
<linearGradient id="c143" gradientUnits="userSpaceOnUse" x1="1244" x2="1582" y1="0" y2="0"><stop offset="0" stop-color="#009935"/><stop offset="0.38" stop-color="#009921"/><stop offset="0.68" stop-color="#00990b"/><stop offset="0.78" stop-color="#269900"/><stop offset="1" stop-color="#7a9900"/></linearGradient>
<linearGradient id="c144" gradientUnits="userSpaceOnUse" x1="1244" x2="1585" y1="0" y2="0"><stop offset="0" stop-color="#009936"/><stop offset="0.38" stop-color="#009923"/><stop offset="0.67" stop-color="#00990c"/><stop offset="0.78" stop-color="#2a9900"/><stop offset="1" stop-color="#809900"/></linearGradient>
<linearGradient id="c145" gradientUnits="userSpaceOnUse" x1="1244" x2="1587" y1="0" y2="0"><stop offset="0" stop-color="#009937"/><stop offset="0.37" stop-color="#009924"/><stop offset="0.66" stop-color="#00990d"/><stop offset="0.78" stop-color="#2f9900"/><stop offset="1" stop-color="#849900"/></linearGradient>
<linearGradient id="c146" gradientUnits="userSpaceOnUse" x1="1244" x2="1590" y1="0" y2="0"><stop offset="0" stop-color="#009937"/><stop offset="0.37" stop-color="#009925"/><stop offset="0.66" stop-color="#00990f"/><stop offset="0.79" stop-color="#339900"/><stop offset="1" stop-color="#899900"/></linearGradient>
<linearGradient id="c147" gradientUnits="userSpaceOnUse" x1="1245" x2="1592" y1="0" y2="0"><stop offset="0" stop-color="#009938"/><stop offset="0.36" stop-color="#009926"/><stop offset="0.65" stop-color="#009910"/><stop offset="0.79" stop-color="#389900"/><stop offset="1" stop-color="#8e9900"/></linearGradient>
<linearGradient id="c148" gradientUnits="userSpaceOnUse" x1="1245" x2="1595" y1="0" y2="0"><stop offset="0" stop-color="#009939"/><stop offset="0.35" stop-color="#009927"/><stop offset="0.64" stop-color="#009911"/><stop offset="0.79" stop-color="#3d9900"/><stop offset="1" stop-color="#949900"/></linearGradient>
<linearGradient id="c149" gradientUnits="userSpaceOnUse" x1="1245" x2="1597" y1="0" y2="0"><stop offset="0" stop-color="#00993a"/><stop offset="0.35" stop-color="#009928"/><stop offset="0.64" stop-color="#009912"/><stop offset="0.8" stop-color="#419900"/><stop offset="1" stop-color="#999900"/></linearGradient>
<linearGradient id="c150" gradientUnits="userSpaceOnUse" x1="1245" x2="1600" y1="0" y2="0"><stop offset="0" stop-color="#00993b"/><stop offset="0.35" stop-color="#009929"/><stop offset="0.63" stop-color="#009914"/><stop offset="0.8" stop-color="#469900"/><stop offset="0.99" stop-color="#989900"/><stop offset="1" stop-color="#999300"/></linearGradient>
<linearGradient id="c151" gradientUnits="userSpaceOnUse" x1="1245" x2="1603" y1="0" y2="0"><stop offset="0" stop-color="#00993c"/><stop offset="0.34" stop-color="#00992a"/><stop offset="0.62" stop-color="#009915"/><stop offset="0.8" stop-color="#4b9900"/><stop offset="0.97" stop-color="#999900"/><stop offset="1" stop-color="#998e00"/></linearGradient>
<linearGradient id="c152" gradientUnits="userSpaceOnUse" x1="1246" x2="1605" y1="0" y2="0"><stop offset="0" stop-color="#00993c"/><stop offset="0.34" stop-color="#00992b"/><stop offset="0.62" stop-color="#009916"/><stop offset="0.81" stop-color="#519900"/><stop offset="0.96" stop-color="#989900"/><stop offset="1" stop-color="#998900"/></linearGradient>
<linearGradient id="c153" gradientUnits="userSpaceOnUse" x1="1246" x2="1608" y1="0" y2="0"><stop offset="0" stop-color="#00993d"/><stop offset="0.33" stop-color="#00992c"/><stop offset="0.61" stop-color="#009917"/><stop offset="0.81" stop-color="#569900"/><stop offset="0.95" stop-color="#999900"/><stop offset="1" stop-color="#998400"/></linearGradient>
<linearGradient id="c154" gradientUnits="userSpaceOnUse" x1="1246" x2="1610" y1="0" y2="0"><stop offset="0" stop-color="#00993e"/><stop offset="0.33" stop-color="#00992d"/><stop offset="0.6" stop-color="#009919"/><stop offset="0.81" stop-color="#5b9900"/><stop offset="0.94" stop-color="#989900"/><stop offset="1" stop-color="#998000"/></linearGradient>
<linearGradient id="c155" gradientUnits="userSpaceOnUse" x1="1246" x2="1613" y1="0" y2="0"><stop offset="0" stop-color="#00993f"/><stop offset="0.33" stop-color="#00992e"/><stop offset="0.59" stop-color="#00991a"/><stop offset="0.81" stop-color="#609900"/><stop offset="0.93" stop-color="#999900"/><stop offset="1" stop-color="#997b00"/></linearGradient>
<linearGradient id="c156" gradientUnits="userSpaceOnUse" x1="1246" x2="1616" y1="0" y2="0"><stop offset="0" stop-color="#009940"/><stop offset="0.32" stop-color="#00992f"/><stop offset="0.59" stop-color="#00991b"/><stop offset="0.82" stop-color="#679900"/><stop offset="0.92" stop-color="#989900"/><stop offset="1" stop-color="#997700"/></linearGradient>
<linearGradient id="c157" gradientUnits="userSpaceOnUse" x1="1247" x2="1618" y1="0" y2="0"><stop offset="0" stop-color="#009941"/><stop offset="0.32" stop-color="#009930"/><stop offset="0.58" stop-color="#00991d"/><stop offset="0.82" stop-color="#6c9900"/><stop offset="0.91" stop-color="#999900"/><stop offset="1" stop-color="#997300"/></linearGradient>
<linearGradient id="c158" gradientUnits="userSpaceOnUse" x1="1247" x2="1621" y1="0" y2="0"><stop offset="0" stop-color="#009942"/><stop offset="0.32" stop-color="#009932"/><stop offset="0.57" stop-color="#00991e"/><stop offset="0.82" stop-color="#729900"/><stop offset="0.9" stop-color="#999900"/><stop offset="1" stop-color="#996f00"/></linearGradient>
<linearGradient id="c159" gradientUnits="userSpaceOnUse" x1="1247" x2="1623" y1="0" y2="0"><stop offset="0" stop-color="#009943"/><stop offset="0.31" stop-color="#009933"/><stop offset="0.57" stop-color="#00991f"/><stop offset="0.72" stop-color="#46990f"/><stop offset="0.83" stop-color="#789900"/><stop offset="0.89" stop-color="#999900"/><stop offset="0.94" stop-color="#998100"/><stop offset="1" stop-color="#996c00"/></linearGradient>
<linearGradient id="c160" gradientUnits="userSpaceOnUse" x1="1247" x2="1626" y1="0" y2="0"><stop offset="0" stop-color="#009944"/><stop offset="0.31" stop-color="#009934"/><stop offset="0.56" stop-color="#009921"/><stop offset="0.72" stop-color="#499910"/><stop offset="0.83" stop-color="#7e9900"/><stop offset="0.88" stop-color="#999900"/><stop offset="0.94" stop-color="#997e00"/><stop offset="1" stop-color="#996800"/></linearGradient>
<linearGradient id="c161" gradientUnits="userSpaceOnUse" x1="1248" x2="1628" y1="0" y2="0"><stop offset="0" stop-color="#009945"/><stop offset="0.31" stop-color="#009935"/><stop offset="0.56" stop-color="#009922"/><stop offset="0.72" stop-color="#4b9911"/><stop offset="0.83" stop-color="#859900"/><stop offset="0.87" stop-color="#999900"/><stop offset="0.93" stop-color="#997d00"/><stop offset="1" stop-color="#996500"/></linearGradient>
<linearGradient id="c162" gradientUnits="userSpaceOnUse" x1="1248" x2="1631" y1="0" y2="0"><stop offset="0" stop-color="#009946"/><stop offset="0.3" stop-color="#009936"/><stop offset="0.55" stop-color="#009924"/><stop offset="0.74" stop-color="#5c990f"/><stop offset="0.84" stop-color="#8c9900"/><stop offset="0.86" stop-color="#999900"/><stop offset="0.92" stop-color="#997a00"/><stop offset="1" stop-color="#996100"/></linearGradient>
<linearGradient id="c163" gradientUnits="userSpaceOnUse" x1="1248" x2="1634" y1="0" y2="0"><stop offset="0" stop-color="#009947"/><stop offset="0.3" stop-color="#009937"/><stop offset="0.55" stop-color="#009925"/><stop offset="0.74" stop-color="#5f9910"/><stop offset="0.85" stop-color="#989900"/><stop offset="0.92" stop-color="#997700"/><stop offset="1" stop-color="#995d00"/></linearGradient>
<linearGradient id="c164" gradientUnits="userSpaceOnUse" x1="1248" x2="1636" y1="0" y2="0"><stop offset="0" stop-color="#009948"/><stop offset="0.3" stop-color="#009938"/><stop offset="0.54" stop-color="#009926"/><stop offset="0.72" stop-color="#579913"/><stop offset="0.84" stop-color="#999900"/><stop offset="0.91" stop-color="#997700"/><stop offset="1" stop-color="#995b00"/></linearGradient>
<linearGradient id="c165" gradientUnits="userSpaceOnUse" x1="1249" x2="1639" y1="0" y2="0"><stop offset="0" stop-color="#009949"/><stop offset="0.29" stop-color="#00993a"/><stop offset="0.53" stop-color="#009928"/><stop offset="0.72" stop-color="#5c9914"/><stop offset="0.83" stop-color="#989903"/><stop offset="0.91" stop-color="#997400"/><stop offset="1" stop-color="#995700"/></linearGradient>
<linearGradient id="c166" gradientUnits="userSpaceOnUse" x1="1249" x2="1641" y1="0" y2="0"><stop offset="0" stop-color="#00994a"/><stop offset="0.29" stop-color="#00993b"/><stop offset="0.53" stop-color="#009929"/><stop offset="0.72" stop-color="#5f9915"/><stop offset="0.82" stop-color="#999905"/><stop offset="0.85" stop-color="#998b00"/><stop offset="0.9" stop-color="#997300"/><stop offset="1" stop-color="#995500"/></linearGradient>
<linearGradient id="c167" gradientUnits="userSpaceOnUse" x1="1249" x2="1644" y1="0" y2="0"><stop offset="0" stop-color="#00994b"/><stop offset="0.29" stop-color="#00993c"/><stop offset="0.52" stop-color="#00992a"/><stop offset="0.71" stop-color="#5e9917"/><stop offset="0.81" stop-color="#989908"/><stop offset="0.85" stop-color="#998500"/><stop offset="0.9" stop-color="#997100"/><stop offset="1" stop-color="#995200"/></linearGradient>
<linearGradient id="c168" gradientUnits="userSpaceOnUse" x1="1250" x2="1646" y1="0" y2="0"><stop offset="0" stop-color="#00994c"/><stop offset="0.28" stop-color="#00993d"/><stop offset="0.52" stop-color="#00992c"/><stop offset="0.7" stop-color="#5d9919"/><stop offset="0.8" stop-color="#99990a"/><stop offset="0.85" stop-color="#997f00"/><stop offset="0.89" stop-color="#997000"/><stop offset="1" stop-color="#994f00"/></linearGradient>
<linearGradient id="c169" gradientUnits="userSpaceOnUse" x1="1250" x2="1649" y1="0" y2="0"><stop offset="0" stop-color="#00994d"/><stop offset="0.28" stop-color="#00993e"/><stop offset="0.51" stop-color="#00992e"/><stop offset="0.69" stop-color="#5c991b"/><stop offset="0.79" stop-color="#99990c"/><stop offset="0.85" stop-color="#997a00"/><stop offset="0.88" stop-color="#996e00"/><stop offset="1" stop-color="#994c00"/></linearGradient>
<linearGradient id="c170" gradientUnits="userSpaceOnUse" x1="1250" x2="1651" y1="0" y2="0"><stop offset="0" stop-color="#00994e"/><stop offset="0.28" stop-color="#009940"/><stop offset="0.51" stop-color="#00992f"/><stop offset="0.68" stop-color="#5d991d"/><stop offset="0.79" stop-color="#99990e"/><stop offset="0.86" stop-color="#997500"/><stop offset="0.88" stop-color="#996c00"/><stop offset="1" stop-color="#994a00"/></linearGradient>
<linearGradient id="c171" gradientUnits="userSpaceOnUse" x1="1250" x2="1654" y1="0" y2="0"><stop offset="0" stop-color="#00994f"/><stop offset="0.27" stop-color="#009941"/><stop offset="0.5" stop-color="#009930"/><stop offset="0.68" stop-color="#5e991e"/><stop offset="0.77" stop-color="#999910"/><stop offset="0.82" stop-color="#998107"/><stop offset="0.87" stop-color="#996b00"/><stop offset="1" stop-color="#994700"/></linearGradient>
<linearGradient id="c172" gradientUnits="userSpaceOnUse" x1="1251" x2="1657" y1="0" y2="0"><stop offset="0" stop-color="#009950"/><stop offset="0.27" stop-color="#009942"/><stop offset="0.5" stop-color="#009932"/><stop offset="0.66" stop-color="#5b9921"/><stop offset="0.77" stop-color="#999812"/><stop offset="0.81" stop-color="#997f09"/><stop offset="0.86" stop-color="#996900"/><stop offset="0.93" stop-color="#995600"/><stop offset="1" stop-color="#994500"/></linearGradient>
<linearGradient id="c173" gradientUnits="userSpaceOnUse" x1="1251" x2="1659" y1="0" y2="0"><stop offset="0" stop-color="#009951"/><stop offset="0.27" stop-color="#009944"/><stop offset="0.49" stop-color="#009933"/><stop offset="0.66" stop-color="#609922"/><stop offset="0.76" stop-color="#999915"/><stop offset="0.81" stop-color="#997e0a"/><stop offset="0.86" stop-color="#996701"/><stop offset="0.92" stop-color="#995400"/><stop offset="1" stop-color="#994200"/></linearGradient>
<linearGradient id="c174" gradientUnits="userSpaceOnUse" x1="1251" x2="1662" y1="0" y2="0"><stop offset="0" stop-color="#009952"/><stop offset="0.27" stop-color="#009945"/><stop offset="0.49" stop-color="#009935"/><stop offset="0.65" stop-color="#5c9924"/><stop offset="0.75" stop-color="#999817"/><stop offset="0.8" stop-color="#997d0c"/><stop offset="0.85" stop-color="#996602"/><stop offset="0.92" stop-color="#995100"/><stop offset="1" stop-color="#994000"/></linearGradient>
<linearGradient id="c175" gradientUnits="userSpaceOnUse" x1="1252" x2="1664" y1="0" y2="0"><stop offset="0" stop-color="#009953"/><stop offset="0.26" stop-color="#009946"/><stop offset="0.48" stop-color="#009937"/><stop offset="0.65" stop-color="#5e9926"/><stop offset="0.74" stop-color="#999919"/><stop offset="0.79" stop-color="#997c0e"/><stop offset="0.85" stop-color="#996403"/><stop offset="0.92" stop-color="#995000"/><stop offset="1" stop-color="#993e00"/></linearGradient>
<linearGradient id="c176" gradientUnits="userSpaceOnUse" x1="1252" x2="1667" y1="0" y2="0"><stop offset="0" stop-color="#009955"/><stop offset="0.26" stop-color="#009948"/><stop offset="0.47" stop-color="#009938"/><stop offset="0.63" stop-color="#5b9928"/><stop offset="0.73" stop-color="#98991c"/><stop offset="0.78" stop-color="#997b0f"/><stop offset="0.84" stop-color="#996304"/><stop offset="0.87" stop-color="#995a00"/><stop offset="1" stop-color="#993c00"/></linearGradient>
<linearGradient id="c177" gradientUnits="userSpaceOnUse" x1="1252" x2="1669" y1="0" y2="0"><stop offset="0" stop-color="#009956"/><stop offset="0.26" stop-color="#009949"/><stop offset="0.47" stop-color="#00993a"/><stop offset="0.63" stop-color="#5e992a"/><stop offset="0.72" stop-color="#99991e"/><stop offset="0.77" stop-color="#997c11"/><stop offset="0.84" stop-color="#996206"/><stop offset="0.87" stop-color="#995600"/><stop offset="1" stop-color="#993a00"/></linearGradient>
<linearGradient id="c178" gradientUnits="userSpaceOnUse" x1="1253" x2="1672" y1="0" y2="0"><stop offset="0" stop-color="#009957"/><stop offset="0.47" stop-color="#00993c"/><stop offset="0.62" stop-color="#5d992c"/><stop offset="0.71" stop-color="#989920"/><stop offset="0.77" stop-color="#997a12"/><stop offset="0.83" stop-color="#995f07"/><stop offset="0.88" stop-color="#995200"/><stop offset="1" stop-color="#993700"/></linearGradient>
<linearGradient id="c179" gradientUnits="userSpaceOnUse" x1="1253" x2="1675" y1="0" y2="0"><stop offset="0" stop-color="#009958"/><stop offset="0.46" stop-color="#00993d"/><stop offset="0.61" stop-color="#5b992e"/><stop offset="0.71" stop-color="#999922"/><stop offset="0.76" stop-color="#997914"/><stop offset="0.82" stop-color="#995f08"/><stop offset="0.88" stop-color="#994f00"/><stop offset="1" stop-color="#993500"/></linearGradient>
<linearGradient id="c180" gradientUnits="userSpaceOnUse" x1="1253" x2="1677" y1="0" y2="0"><stop offset="0" stop-color="#009959"/><stop offset="0.46" stop-color="#00993f"/><stop offset="0.61" stop-color="#5f992f"/><stop offset="0.7" stop-color="#999925"/><stop offset="0.75" stop-color="#997816"/><stop offset="0.82" stop-color="#995d09"/><stop offset="0.88" stop-color="#994c00"/><stop offset="1" stop-color="#993300"/></linearGradient>
<linearGradient id="c181" gradientUnits="userSpaceOnUse" x1="1254" x2="1680" y1="0" y2="0"><stop offset="0" stop-color="#00995b"/><stop offset="0.45" stop-color="#009941"/><stop offset="0.6" stop-color="#5e9932"/><stop offset="0.69" stop-color="#989927"/><stop offset="0.75" stop-color="#997617"/><stop offset="0.81" stop-color="#995b0a"/><stop offset="0.88" stop-color="#994900"/><stop offset="1" stop-color="#993100"/></linearGradient>
<linearGradient id="c182" gradientUnits="userSpaceOnUse" x1="1254" x2="1682" y1="0" y2="0"><stop offset="0" stop-color="#00995c"/><stop offset="0.45" stop-color="#009942"/><stop offset="0.6" stop-color="#5d9934"/><stop offset="0.68" stop-color="#999929"/><stop offset="0.74" stop-color="#997719"/><stop offset="0.81" stop-color="#995b0c"/><stop offset="0.88" stop-color="#994600"/><stop offset="1" stop-color="#993000"/></linearGradient>
<linearGradient id="c183" gradientUnits="userSpaceOnUse" x1="1254" x2="1685" y1="0" y2="0"><stop offset="0" stop-color="#00995d"/><stop offset="0.44" stop-color="#009944"/><stop offset="0.59" stop-color="#5f9936"/><stop offset="0.67" stop-color="#98992c"/><stop offset="0.73" stop-color="#99751a"/><stop offset="0.81" stop-color="#99580c"/><stop offset="0.89" stop-color="#994200"/><stop offset="1" stop-color="#992e00"/></linearGradient>
<linearGradient id="c184" gradientUnits="userSpaceOnUse" x1="1255" x2="1688" y1="0" y2="0"><stop offset="0" stop-color="#00995e"/><stop offset="0.44" stop-color="#009946"/><stop offset="0.58" stop-color="#5f9938"/><stop offset="0.67" stop-color="#99992e"/><stop offset="0.72" stop-color="#99751d"/><stop offset="0.8" stop-color="#99580e"/><stop offset="0.89" stop-color="#994000"/><stop offset="1" stop-color="#992c00"/></linearGradient>
<linearGradient id="c185" gradientUnits="userSpaceOnUse" x1="1255" x2="1690" y1="0" y2="0"><stop offset="0" stop-color="#009960"/><stop offset="0.43" stop-color="#009948"/><stop offset="0.57" stop-color="#5d993a"/><stop offset="0.66" stop-color="#989930"/><stop offset="0.72" stop-color="#99731e"/><stop offset="0.79" stop-color="#99560f"/><stop offset="0.89" stop-color="#993d00"/><stop offset="1" stop-color="#992a00"/></linearGradient>
<linearGradient id="c186" gradientUnits="userSpaceOnUse" x1="1255" x2="1693" y1="0" y2="0"><stop offset="0" stop-color="#009961"/><stop offset="0.43" stop-color="#009949"/><stop offset="0.57" stop-color="#5c993d"/><stop offset="0.65" stop-color="#999933"/><stop offset="0.71" stop-color="#997420"/><stop offset="0.79" stop-color="#995510"/><stop offset="0.89" stop-color="#993a00"/><stop offset="1" stop-color="#992800"/></linearGradient>
<linearGradient id="c187" gradientUnits="userSpaceOnUse" x1="1256" x2="1695" y1="0" y2="0"><stop offset="0" stop-color="#009962"/><stop offset="0.42" stop-color="#00994b"/><stop offset="0.56" stop-color="#5f993e"/><stop offset="0.64" stop-color="#989935"/><stop offset="0.71" stop-color="#997221"/><stop offset="0.78" stop-color="#995411"/><stop offset="0.89" stop-color="#993800"/><stop offset="1" stop-color="#992700"/></linearGradient>
<linearGradient id="c188" gradientUnits="userSpaceOnUse" x1="1256" x2="1698" y1="0" y2="0"><stop offset="0" stop-color="#009964"/><stop offset="0.42" stop-color="#00994d"/><stop offset="0.56" stop-color="#5e9941"/><stop offset="0.63" stop-color="#979938"/><stop offset="0.7" stop-color="#997122"/><stop offset="0.78" stop-color="#995212"/><stop offset="0.9" stop-color="#993500"/><stop offset="1" stop-color="#992500"/></linearGradient>
<linearGradient id="c189" gradientUnits="userSpaceOnUse" x1="1257" x2="1700" y1="0" y2="0"><stop offset="0" stop-color="#009965"/><stop offset="0.41" stop-color="#00994f"/><stop offset="0.55" stop-color="#5d9943"/><stop offset="0.63" stop-color="#98993a"/><stop offset="0.69" stop-color="#997125"/><stop offset="0.77" stop-color="#995113"/><stop offset="0.9" stop-color="#993300"/><stop offset="1" stop-color="#992300"/></linearGradient>
<linearGradient id="c190" gradientUnits="userSpaceOnUse" x1="1257" x2="1703" y1="0" y2="0"><stop offset="0" stop-color="#009966"/><stop offset="0.41" stop-color="#009951"/><stop offset="0.54" stop-color="#5f9945"/><stop offset="0.62" stop-color="#98993d"/><stop offset="0.69" stop-color="#996f25"/><stop offset="0.76" stop-color="#995014"/><stop offset="0.9" stop-color="#993100"/><stop offset="1" stop-color="#992200"/></linearGradient>
<linearGradient id="c191" gradientUnits="userSpaceOnUse" x1="1257" x2="1706" y1="0" y2="0"><stop offset="0" stop-color="#009968"/><stop offset="0.41" stop-color="#009953"/><stop offset="0.54" stop-color="#5f9947"/><stop offset="0.61" stop-color="#99993f"/><stop offset="0.68" stop-color="#996f28"/><stop offset="0.76" stop-color="#994f15"/><stop offset="0.9" stop-color="#992e00"/><stop offset="1" stop-color="#992000"/></linearGradient>
<linearGradient id="c192" gradientUnits="userSpaceOnUse" x1="1258" x2="1708" y1="0" y2="0"><stop offset="0" stop-color="#009969"/><stop offset="0.4" stop-color="#009955"/><stop offset="0.53" stop-color="#5c994a"/><stop offset="0.6" stop-color="#989942"/><stop offset="0.67" stop-color="#996e29"/><stop offset="0.75" stop-color="#994e16"/><stop offset="0.82" stop-color="#993c0b"/><stop offset="0.9" stop-color="#992c00"/><stop offset="1" stop-color="#991e00"/></linearGradient>
<linearGradient id="c193" gradientUnits="userSpaceOnUse" x1="1258" x2="1711" y1="0" y2="0"><stop offset="0" stop-color="#00996b"/><stop offset="0.4" stop-color="#009957"/><stop offset="0.52" stop-color="#5b994d"/><stop offset="0.6" stop-color="#999945"/><stop offset="0.63" stop-color="#998237"/><stop offset="0.66" stop-color="#996d2b"/><stop offset="0.75" stop-color="#994c17"/><stop offset="0.82" stop-color="#993a0b"/><stop offset="0.91" stop-color="#992a00"/><stop offset="1" stop-color="#991d00"/></linearGradient>
<linearGradient id="c194" gradientUnits="userSpaceOnUse" x1="1259" x2="1713" y1="0" y2="0"><stop offset="0" stop-color="#00996c"/><stop offset="0.39" stop-color="#009959"/><stop offset="0.52" stop-color="#5f994f"/><stop offset="0.59" stop-color="#989947"/><stop offset="0.63" stop-color="#997f38"/><stop offset="0.66" stop-color="#996c2c"/><stop offset="0.74" stop-color="#994b18"/><stop offset="0.82" stop-color="#99380c"/><stop offset="0.91" stop-color="#992800"/><stop offset="1" stop-color="#991c00"/></linearGradient>
<linearGradient id="c195" gradientUnits="userSpaceOnUse" x1="1259" x2="1716" y1="0" y2="0"><stop offset="0" stop-color="#00996d"/><stop offset="0.39" stop-color="#00995b"/><stop offset="0.51" stop-color="#5d9951"/><stop offset="0.58" stop-color="#99994a"/><stop offset="0.61" stop-color="#99813b"/><stop offset="0.65" stop-color="#996d2f"/><stop offset="0.74" stop-color="#994a19"/><stop offset="0.81" stop-color="#99370c"/><stop offset="0.91" stop-color="#992600"/><stop offset="1" stop-color="#991a00"/></linearGradient>
<linearGradient id="c196" gradientUnits="userSpaceOnUse" x1="1259" x2="1718" y1="0" y2="0"><stop offset="0" stop-color="#00996f"/><stop offset="0.38" stop-color="#00995d"/><stop offset="0.51" stop-color="#5c9954"/><stop offset="0.58" stop-color="#98994d"/><stop offset="0.61" stop-color="#99803d"/><stop offset="0.64" stop-color="#996c30"/><stop offset="0.73" stop-color="#99491a"/><stop offset="0.81" stop-color="#99350d"/><stop offset="0.91" stop-color="#992400"/><stop offset="1" stop-color="#991900"/></linearGradient>
<linearGradient id="c197" gradientUnits="userSpaceOnUse" x1="1260" x2="1721" y1="0" y2="0"><stop offset="0" stop-color="#009970"/><stop offset="0.38" stop-color="#00995f"/><stop offset="0.5" stop-color="#5e9956"/><stop offset="0.57" stop-color="#99994f"/><stop offset="0.6" stop-color="#998140"/><stop offset="0.64" stop-color="#996b32"/><stop offset="0.73" stop-color="#99481b"/><stop offset="0.81" stop-color="#99330d"/><stop offset="0.91" stop-color="#992200"/><stop offset="1" stop-color="#991700"/></linearGradient>
<linearGradient id="c198" gradientUnits="userSpaceOnUse" x1="1260" x2="1723" y1="0" y2="0"><stop offset="0" stop-color="#009972"/><stop offset="0.38" stop-color="#009962"/><stop offset="0.5" stop-color="#5f9959"/><stop offset="0.56" stop-color="#989952"/><stop offset="0.6" stop-color="#997e41"/><stop offset="0.63" stop-color="#996a33"/><stop offset="0.72" stop-color="#99471c"/><stop offset="0.81" stop-color="#99320e"/><stop offset="0.92" stop-color="#992000"/><stop offset="1" stop-color="#991600"/></linearGradient>
<linearGradient id="c199" gradientUnits="userSpaceOnUse" x1="1261" x2="1726" y1="0" y2="0"><stop offset="0" stop-color="#009974"/><stop offset="0.37" stop-color="#009964"/><stop offset="0.49" stop-color="#5c995c"/><stop offset="0.55" stop-color="#979955"/><stop offset="0.59" stop-color="#997d43"/><stop offset="0.63" stop-color="#996935"/><stop offset="0.72" stop-color="#99451d"/><stop offset="0.8" stop-color="#99300e"/><stop offset="0.92" stop-color="#991e00"/><stop offset="1" stop-color="#991400"/></linearGradient>
<linearGradient id="c200" gradientUnits="userSpaceOnUse" x1="1261" x2="1729" y1="0" y2="0"><stop offset="0" stop-color="#009975"/><stop offset="0.37" stop-color="#009966"/><stop offset="0.48" stop-color="#5a995e"/><stop offset="0.55" stop-color="#999958"/><stop offset="0.58" stop-color="#997f47"/><stop offset="0.62" stop-color="#996937"/><stop offset="0.66" stop-color="#99552a"/><stop offset="0.71" stop-color="#99451e"/><stop offset="0.8" stop-color="#992f0f"/><stop offset="0.92" stop-color="#991c00"/><stop offset="1" stop-color="#991300"/></linearGradient>
<linearGradient id="c201" gradientUnits="userSpaceOnUse" x1="1261" x2="1731" y1="0" y2="0"><stop offset="0" stop-color="#009977"/><stop offset="0.36" stop-color="#009968"/><stop offset="0.48" stop-color="#5e9961"/><stop offset="0.54" stop-color="#98995b"/><stop offset="0.58" stop-color="#997d47"/><stop offset="0.61" stop-color="#996738"/><stop offset="0.66" stop-color="#99542b"/><stop offset="0.71" stop-color="#99431f"/><stop offset="0.8" stop-color="#992d0f"/><stop offset="0.92" stop-color="#991b00"/><stop offset="1" stop-color="#991200"/></linearGradient>
<linearGradient id="c202" gradientUnits="userSpaceOnUse" x1="1262" x2="1734" y1="0" y2="0"><stop offset="0" stop-color="#009978"/><stop offset="0.36" stop-color="#00996b"/><stop offset="0.47" stop-color="#5d9964"/><stop offset="0.54" stop-color="#99995e"/><stop offset="0.57" stop-color="#997f4b"/><stop offset="0.61" stop-color="#99673b"/><stop offset="0.65" stop-color="#99542d"/><stop offset="0.7" stop-color="#994220"/><stop offset="0.8" stop-color="#992c0f"/><stop offset="0.92" stop-color="#991900"/><stop offset="1" stop-color="#991000"/></linearGradient>
<linearGradient id="c203" gradientUnits="userSpaceOnUse" x1="1262" x2="1736" y1="0" y2="0"><stop offset="0" stop-color="#00997a"/><stop offset="0.35" stop-color="#00996d"/><stop offset="0.46" stop-color="#5b9966"/><stop offset="0.53" stop-color="#989961"/><stop offset="0.57" stop-color="#997c4c"/><stop offset="0.6" stop-color="#99663c"/><stop offset="0.64" stop-color="#99532e"/><stop offset="0.69" stop-color="#994221"/><stop offset="0.8" stop-color="#992a10"/><stop offset="0.92" stop-color="#991700"/><stop offset="1" stop-color="#990f00"/></linearGradient>
<linearGradient id="c204" gradientUnits="userSpaceOnUse" x1="1263" x2="1739" y1="0" y2="0"><stop offset="0" stop-color="#00997c"/><stop offset="0.35" stop-color="#009970"/><stop offset="0.46" stop-color="#609969"/><stop offset="0.52" stop-color="#999964"/><stop offset="0.55" stop-color="#997e50"/><stop offset="0.59" stop-color="#99663f"/><stop offset="0.64" stop-color="#995230"/><stop offset="0.69" stop-color="#994123"/><stop offset="0.79" stop-color="#992910"/><stop offset="0.92" stop-color="#991600"/><stop offset="1" stop-color="#990e00"/></linearGradient>
<linearGradient id="c205" gradientUnits="userSpaceOnUse" x1="1263" x2="1741" y1="0" y2="0"><stop offset="0" stop-color="#00997e"/><stop offset="0.35" stop-color="#009972"/><stop offset="0.45" stop-color="#5a996c"/><stop offset="0.52" stop-color="#999867"/><stop offset="0.55" stop-color="#997d52"/><stop offset="0.59" stop-color="#996540"/><stop offset="0.63" stop-color="#995131"/><stop offset="0.68" stop-color="#993f23"/><stop offset="0.79" stop-color="#992811"/><stop offset="0.93" stop-color="#991400"/><stop offset="1" stop-color="#990d00"/></linearGradient>
<linearGradient id="c206" gradientUnits="userSpaceOnUse" x1="1264" x2="1744" y1="0" y2="0"><stop offset="0" stop-color="#00997f"/><stop offset="0.34" stop-color="#009975"/><stop offset="0.45" stop-color="#5d996f"/><stop offset="0.51" stop-color="#99996b"/><stop offset="0.54" stop-color="#997d55"/><stop offset="0.58" stop-color="#996543"/><stop offset="0.62" stop-color="#995032"/><stop offset="0.68" stop-color="#993e25"/><stop offset="0.76" stop-color="#992b15"/><stop offset="0.86" stop-color="#991a07"/><stop offset="0.93" stop-color="#991200"/><stop offset="1" stop-color="#990b00"/></linearGradient>
<linearGradient id="c207" gradientUnits="userSpaceOnUse" x1="1264" x2="1747" y1="0" y2="0"><stop offset="0" stop-color="#009981"/><stop offset="0.34" stop-color="#009977"/><stop offset="0.44" stop-color="#579972"/><stop offset="0.51" stop-color="#99986d"/><stop offset="0.54" stop-color="#997b56"/><stop offset="0.58" stop-color="#996344"/><stop offset="0.62" stop-color="#994e33"/><stop offset="0.67" stop-color="#993d25"/><stop offset="0.76" stop-color="#992a16"/><stop offset="0.86" stop-color="#991908"/><stop offset="0.93" stop-color="#991100"/><stop offset="1" stop-color="#990a00"/></linearGradient>
<linearGradient id="c208" gradientUnits="userSpaceOnUse" x1="1265" x2="1749" y1="0" y2="0"><stop offset="0" stop-color="#009983"/><stop offset="0.33" stop-color="#00997a"/><stop offset="0.44" stop-color="#5e9975"/><stop offset="0.5" stop-color="#999971"/><stop offset="0.53" stop-color="#997b59"/><stop offset="0.57" stop-color="#996346"/><stop offset="0.61" stop-color="#994e35"/><stop offset="0.67" stop-color="#993c26"/><stop offset="0.75" stop-color="#992917"/><stop offset="0.85" stop-color="#991909"/><stop offset="0.93" stop-color="#990f00"/><stop offset="1" stop-color="#990900"/></linearGradient>
<linearGradient id="c209" gradientUnits="userSpaceOnUse" x1="1265" x2="1752" y1="0" y2="0"><stop offset="0" stop-color="#009985"/><stop offset="0.33" stop-color="#00997c"/><stop offset="0.43" stop-color="#589978"/><stop offset="0.49" stop-color="#999774"/><stop offset="0.53" stop-color="#997a5b"/><stop offset="0.56" stop-color="#996248"/><stop offset="0.61" stop-color="#994d37"/><stop offset="0.66" stop-color="#993b27"/><stop offset="0.74" stop-color="#992818"/><stop offset="0.84" stop-color="#99180a"/><stop offset="0.93" stop-color="#990e00"/><stop offset="1" stop-color="#990700"/></linearGradient>
<linearGradient id="c210" gradientUnits="userSpaceOnUse" x1="1266" x2="1754" y1="0" y2="0"><stop offset="0" stop-color="#009987"/><stop offset="0.33" stop-color="#00997f"/><stop offset="0.42" stop-color="#59997b"/><stop offset="0.49" stop-color="#999878"/><stop offset="0.52" stop-color="#997a5f"/><stop offset="0.56" stop-color="#99624a"/><stop offset="0.6" stop-color="#994d39"/><stop offset="0.66" stop-color="#993a29"/><stop offset="0.74" stop-color="#992819"/><stop offset="0.83" stop-color="#99180b"/><stop offset="0.94" stop-color="#990c00"/><stop offset="1" stop-color="#990600"/></linearGradient>
<linearGradient id="c211" gradientUnits="userSpaceOnUse" x1="1266" x2="1757" y1="0" y2="0"><stop offset="0" stop-color="#009989"/><stop offset="0.32" stop-color="#009982"/><stop offset="0.48" stop-color="#99977a"/><stop offset="0.51" stop-color="#997961"/><stop offset="0.55" stop-color="#99604b"/><stop offset="0.6" stop-color="#994b39"/><stop offset="0.65" stop-color="#99392a"/><stop offset="0.73" stop-color="#99271a"/><stop offset="0.83" stop-color="#99170c"/><stop offset="0.94" stop-color="#990b00"/><stop offset="1" stop-color="#990500"/></linearGradient>
<linearGradient id="c212" gradientUnits="userSpaceOnUse" x1="1266" x2="1760" y1="0" y2="0"><stop offset="0" stop-color="#00998b"/><stop offset="0.32" stop-color="#009985"/><stop offset="0.41" stop-color="#5c9982"/><stop offset="0.47" stop-color="#99987f"/><stop offset="0.51" stop-color="#997a64"/><stop offset="0.54" stop-color="#99604e"/><stop offset="0.59" stop-color="#994a3b"/><stop offset="0.65" stop-color="#99382b"/><stop offset="0.72" stop-color="#99261b"/><stop offset="0.82" stop-color="#99160d"/><stop offset="0.94" stop-color="#990900"/><stop offset="1" stop-color="#990400"/></linearGradient>
<linearGradient id="c213" gradientUnits="userSpaceOnUse" x1="1267" x2="1762" y1="0" y2="0"><stop offset="0" stop-color="#00998d"/><stop offset="0.32" stop-color="#009988"/><stop offset="0.41" stop-color="#5c9985"/><stop offset="0.47" stop-color="#999983"/><stop offset="0.5" stop-color="#997a68"/><stop offset="0.54" stop-color="#996051"/><stop offset="0.58" stop-color="#994a3d"/><stop offset="0.64" stop-color="#99372c"/><stop offset="0.72" stop-color="#99251c"/><stop offset="0.82" stop-color="#99160e"/><stop offset="0.94" stop-color="#990800"/><stop offset="1" stop-color="#990200"/></linearGradient>
<linearGradient id="c214" gradientUnits="userSpaceOnUse" x1="1267" x2="1765" y1="0" y2="0"><stop offset="0" stop-color="#00998f"/><stop offset="0.31" stop-color="#00998a"/><stop offset="0.4" stop-color="#569989"/><stop offset="0.46" stop-color="#999886"/><stop offset="0.49" stop-color="#99796a"/><stop offset="0.53" stop-color="#995f52"/><stop offset="0.58" stop-color="#99493e"/><stop offset="0.63" stop-color="#99362d"/><stop offset="0.71" stop-color="#99241d"/><stop offset="0.81" stop-color="#99150e"/><stop offset="0.94" stop-color="#990700"/><stop offset="1" stop-color="#990100"/></linearGradient>
<linearGradient id="c215" gradientUnits="userSpaceOnUse" x1="1268" x2="1767" y1="0" y2="0"><stop offset="0" stop-color="#009991"/><stop offset="0.31" stop-color="#00998d"/><stop offset="0.4" stop-color="#5f998c"/><stop offset="0.45" stop-color="#99998b"/><stop offset="0.49" stop-color="#99796d"/><stop offset="0.53" stop-color="#995f55"/><stop offset="0.57" stop-color="#994840"/><stop offset="0.63" stop-color="#99362e"/><stop offset="0.71" stop-color="#99241e"/><stop offset="0.8" stop-color="#99140f"/><stop offset="0.94" stop-color="#990500"/><stop offset="1" stop-color="#990000"/></linearGradient>
<linearGradient id="c216" gradientUnits="userSpaceOnUse" x1="1268" x2="1770" y1="0" y2="0"><stop offset="0" stop-color="#009993"/><stop offset="0.3" stop-color="#009990"/><stop offset="0.39" stop-color="#59998f"/><stop offset="0.45" stop-color="#99988d"/><stop offset="0.48" stop-color="#99786f"/><stop offset="0.52" stop-color="#995d56"/><stop offset="0.57" stop-color="#994740"/><stop offset="0.63" stop-color="#99342f"/><stop offset="0.7" stop-color="#99221e"/><stop offset="0.8" stop-color="#991310"/><stop offset="0.94" stop-color="#990400"/><stop offset="1" stop-color="#990000"/></linearGradient>
<linearGradient id="c217" gradientUnits="userSpaceOnUse" x1="1269" x2="1772" y1="0" y2="0"><stop offset="0" stop-color="#009995"/><stop offset="0.3" stop-color="#009994"/><stop offset="0.39" stop-color="#5a9993"/><stop offset="0.44" stop-color="#999992"/><stop offset="0.48" stop-color="#997973"/><stop offset="0.51" stop-color="#995d59"/><stop offset="0.56" stop-color="#994643"/><stop offset="0.62" stop-color="#993330"/><stop offset="0.7" stop-color="#99221f"/><stop offset="0.8" stop-color="#991310"/><stop offset="0.95" stop-color="#990200"/><stop offset="1" stop-color="#990000"/></linearGradient>
<linearGradient id="c218" gradientUnits="userSpaceOnUse" x1="1269" x2="1775" y1="0" y2="0"><stop offset="0" stop-color="#009997"/><stop offset="0.3" stop-color="#009997"/><stop offset="0.38" stop-color="#5a9997"/><stop offset="0.44" stop-color="#999795"/><stop offset="0.47" stop-color="#997674"/><stop offset="0.51" stop-color="#995b59"/><stop offset="0.56" stop-color="#994543"/><stop offset="0.62" stop-color="#993130"/><stop offset="0.7" stop-color="#99201f"/><stop offset="0.79" stop-color="#991111"/><stop offset="0.95" stop-color="#990100"/><stop offset="1" stop-color="#990000"/></linearGradient>
<linearGradient id="c219" gradientUnits="userSpaceOnUse" x1="1270" x2="1778" y1="0" y2="0"><stop offset="0" stop-color="#009999"/><stop offset="0.29" stop-color="#009899"/><stop offset="0.38" stop-color="#5a9899"/><stop offset="0.43" stop-color="#999698"/><stop offset="0.47" stop-color="#997476"/><stop offset="0.51" stop-color="#995a5b"/><stop offset="0.56" stop-color="#994344"/><stop offset="0.61" stop-color="#993031"/><stop offset="0.69" stop-color="#991e1f"/><stop offset="0.8" stop-color="#990f10"/><stop offset="0.94" stop-color="#990001"/><stop offset="1" stop-color="#990000"/></linearGradient>
<linearGradient id="c220" gradientUnits="userSpaceOnUse" x1="1270" x2="1780" y1="0" y2="0"><stop offset="0" stop-color="#009699"/><stop offset="0.29" stop-color="#009599"/><stop offset="0.37" stop-color="#589499"/><stop offset="0.43" stop-color="#999298"/><stop offset="0.46" stop-color="#997276"/><stop offset="0.5" stop-color="#99575c"/><stop offset="0.55" stop-color="#994145"/><stop offset="0.61" stop-color="#992e31"/><stop offset="0.7" stop-color="#991c1f"/><stop offset="0.81" stop-color="#990d0f"/><stop offset="0.93" stop-color="#990003"/><stop offset="1" stop-color="#990000"/></linearGradient>
<linearGradient id="c221" gradientUnits="userSpaceOnUse" x1="1271" x2="1783" y1="0" y2="0"><stop offset="0" stop-color="#009499"/><stop offset="0.29" stop-color="#019299"/><stop offset="0.38" stop-color="#5d9099"/><stop offset="0.43" stop-color="#998f98"/><stop offset="0.46" stop-color="#996f77"/><stop offset="0.5" stop-color="#99555c"/><stop offset="0.55" stop-color="#993f45"/><stop offset="0.61" stop-color="#992d32"/><stop offset="0.7" stop-color="#991a1e"/><stop offset="0.81" stop-color="#990a0e"/><stop offset="0.91" stop-color="#990004"/><stop offset="1" stop-color="#990000"/></linearGradient>
<linearGradient id="c222" gradientUnits="userSpaceOnUse" x1="1271" x2="1785" y1="0" y2="0"><stop offset="0" stop-color="#009299"/><stop offset="0.28" stop-color="#008f99"/><stop offset="0.37" stop-color="#5d8d99"/><stop offset="0.43" stop-color="#998b99"/><stop offset="0.46" stop-color="#996c77"/><stop offset="0.5" stop-color="#99525c"/><stop offset="0.55" stop-color="#993d45"/><stop offset="0.61" stop-color="#992b32"/><stop offset="0.71" stop-color="#99171d"/><stop offset="0.83" stop-color="#99070c"/><stop offset="0.9" stop-color="#990006"/><stop offset="1" stop-color="#990000"/></linearGradient>
<linearGradient id="c223" gradientUnits="userSpaceOnUse" x1="1272" x2="1788" y1="0" y2="0"><stop offset="0" stop-color="#009099"/><stop offset="0.28" stop-color="#008c99"/><stop offset="0.37" stop-color="#5e8999"/><stop offset="0.42" stop-color="#998799"/><stop offset="0.46" stop-color="#996978"/><stop offset="0.5" stop-color="#99505c"/><stop offset="0.55" stop-color="#993b45"/><stop offset="0.61" stop-color="#992932"/><stop offset="0.72" stop-color="#99131a"/><stop offset="0.88" stop-color="#990007"/><stop offset="0.96" stop-color="#990000"/><stop offset="1" stop-color="#990000"/></linearGradient>
<linearGradient id="c224" gradientUnits="userSpaceOnUse" x1="1273" x2="1790" y1="0" y2="0"><stop offset="0" stop-color="#008e99"/><stop offset="0.27" stop-color="#008999"/><stop offset="0.37" stop-color="#5c8699"/><stop offset="0.42" stop-color="#998499"/><stop offset="0.45" stop-color="#996577"/><stop offset="0.5" stop-color="#994d5c"/><stop offset="0.55" stop-color="#993845"/><stop offset="0.61" stop-color="#992732"/><stop offset="0.72" stop-color="#99121b"/><stop offset="0.87" stop-color="#990008"/><stop offset="0.96" stop-color="#990000"/><stop offset="1" stop-color="#990000"/></linearGradient>
<linearGradient id="c225" gradientUnits="userSpaceOnUse" x1="1273" x2="1793" y1="0" y2="0"><stop offset="0" stop-color="#008c99"/><stop offset="0.27" stop-color="#008699"/><stop offset="0.42" stop-color="#997e97"/><stop offset="0.45" stop-color="#996176"/><stop offset="0.49" stop-color="#994a5b"/><stop offset="0.54" stop-color="#993645"/><stop offset="0.61" stop-color="#992532"/><stop offset="0.71" stop-color="#99111c"/><stop offset="0.86" stop-color="#99000a"/><stop offset="0.96" stop-color="#990000"/><stop offset="1" stop-color="#990000"/></linearGradient>
<linearGradient id="c226" gradientUnits="userSpaceOnUse" x1="1274" x2="1796" y1="0" y2="0"><stop offset="0" stop-color="#008999"/><stop offset="0.27" stop-color="#008399"/><stop offset="0.36" stop-color="#597f99"/><stop offset="0.42" stop-color="#997b97"/><stop offset="0.45" stop-color="#995f76"/><stop offset="0.49" stop-color="#99485c"/><stop offset="0.54" stop-color="#993445"/><stop offset="0.6" stop-color="#992432"/><stop offset="0.7" stop-color="#99111d"/><stop offset="0.84" stop-color="#99000b"/><stop offset="0.96" stop-color="#990000"/><stop offset="1" stop-color="#990000"/></linearGradient>
<linearGradient id="c227" gradientUnits="userSpaceOnUse" x1="1274" x2="1798" y1="0" y2="0"><stop offset="0" stop-color="#008799"/><stop offset="0.27" stop-color="#008099"/><stop offset="0.35" stop-color="#597c99"/><stop offset="0.41" stop-color="#997898"/><stop offset="0.45" stop-color="#995c77"/><stop offset="0.49" stop-color="#99465c"/><stop offset="0.54" stop-color="#993245"/><stop offset="0.6" stop-color="#992232"/><stop offset="0.7" stop-color="#99101e"/><stop offset="0.83" stop-color="#99000d"/><stop offset="0.96" stop-color="#990000"/><stop offset="1" stop-color="#990000"/></linearGradient>
<linearGradient id="c228" gradientUnits="userSpaceOnUse" x1="1275" x2="1801" y1="0" y2="0"><stop offset="0" stop-color="#008599"/><stop offset="0.26" stop-color="#017d99"/><stop offset="0.35" stop-color="#5c7999"/><stop offset="0.41" stop-color="#997598"/><stop offset="0.44" stop-color="#995a77"/><stop offset="0.49" stop-color="#99435c"/><stop offset="0.54" stop-color="#993045"/><stop offset="0.6" stop-color="#992032"/><stop offset="0.69" stop-color="#990f1f"/><stop offset="0.82" stop-color="#99000e"/><stop offset="0.96" stop-color="#990000"/><stop offset="1" stop-color="#990000"/></linearGradient>
<linearGradient id="c229" gradientUnits="userSpaceOnUse" x1="1275" x2="1803" y1="0" y2="0"><stop offset="0" stop-color="#008399"/><stop offset="0.26" stop-color="#007b99"/><stop offset="0.35" stop-color="#5c7699"/><stop offset="0.41" stop-color="#997198"/><stop offset="0.44" stop-color="#995778"/><stop offset="0.48" stop-color="#99415d"/><stop offset="0.54" stop-color="#992e46"/><stop offset="0.6" stop-color="#991e32"/><stop offset="0.69" stop-color="#990f20"/><stop offset="0.8" stop-color="#990010"/><stop offset="0.96" stop-color="#990000"/><stop offset="1" stop-color="#990000"/></linearGradient>
<linearGradient id="c230" gradientUnits="userSpaceOnUse" x1="1276" x2="1806" y1="0" y2="0"><stop offset="0" stop-color="#008199"/><stop offset="0.25" stop-color="#007899"/><stop offset="0.35" stop-color="#5c7399"/><stop offset="0.41" stop-color="#996e99"/><stop offset="0.44" stop-color="#995578"/><stop offset="0.48" stop-color="#993f5d"/><stop offset="0.53" stop-color="#992d46"/><stop offset="0.59" stop-color="#991d33"/><stop offset="0.68" stop-color="#990e21"/><stop offset="0.79" stop-color="#990011"/><stop offset="0.96" stop-color="#990000"/><stop offset="1" stop-color="#990000"/></linearGradient>
<linearGradient id="c231" gradientUnits="userSpaceOnUse" x1="1276" x2="1808" y1="0" y2="0"><stop offset="0" stop-color="#007f99"/><stop offset="0.25" stop-color="#007599"/><stop offset="0.35" stop-color="#5b7099"/><stop offset="0.4" stop-color="#996b99"/><stop offset="0.44" stop-color="#995279"/><stop offset="0.48" stop-color="#993c5d"/><stop offset="0.53" stop-color="#992b46"/><stop offset="0.59" stop-color="#991c33"/><stop offset="0.68" stop-color="#990d22"/><stop offset="0.78" stop-color="#990013"/><stop offset="0.97" stop-color="#990000"/><stop offset="1" stop-color="#990000"/></linearGradient>
<linearGradient id="c232" gradientUnits="userSpaceOnUse" x1="1277" x2="1811" y1="0" y2="0"><stop offset="0" stop-color="#007d99"/><stop offset="0.25" stop-color="#007399"/><stop offset="0.35" stop-color="#5f6d99"/><stop offset="0.4" stop-color="#996899"/><stop offset="0.44" stop-color="#994f78"/><stop offset="0.48" stop-color="#993a5d"/><stop offset="0.53" stop-color="#992946"/><stop offset="0.59" stop-color="#991a33"/><stop offset="0.67" stop-color="#990d23"/><stop offset="0.77" stop-color="#990014"/><stop offset="0.97" stop-color="#990000"/><stop offset="1" stop-color="#990000"/></linearGradient>
<linearGradient id="c233" gradientUnits="userSpaceOnUse" x1="1277" x2="1814" y1="0" y2="0"><stop offset="0" stop-color="#007b99"/><stop offset="0.25" stop-color="#007099"/><stop offset="0.34" stop-color="#5d6a99"/><stop offset="0.4" stop-color="#996599"/><stop offset="0.43" stop-color="#994c78"/><stop offset="0.48" stop-color="#99385d"/><stop offset="0.53" stop-color="#992746"/><stop offset="0.59" stop-color="#991833"/><stop offset="0.75" stop-color="#990016"/><stop offset="0.97" stop-color="#990000"/><stop offset="1" stop-color="#990000"/></linearGradient>
<linearGradient id="c234" gradientUnits="userSpaceOnUse" x1="1278" x2="1816" y1="0" y2="0"><stop offset="0" stop-color="#007999"/><stop offset="0.24" stop-color="#006e99"/><stop offset="0.33" stop-color="#586799"/><stop offset="0.4" stop-color="#996197"/><stop offset="0.43" stop-color="#994977"/><stop offset="0.48" stop-color="#99355c"/><stop offset="0.53" stop-color="#992546"/><stop offset="0.59" stop-color="#991633"/><stop offset="0.74" stop-color="#990018"/><stop offset="0.97" stop-color="#990000"/><stop offset="1" stop-color="#990000"/></linearGradient>
<linearGradient id="c235" gradientUnits="userSpaceOnUse" x1="1279" x2="1819" y1="0" y2="0"><stop offset="0" stop-color="#007799"/><stop offset="0.24" stop-color="#006b99"/><stop offset="0.34" stop-color="#5c6499"/><stop offset="0.39" stop-color="#995e98"/><stop offset="0.43" stop-color="#994778"/><stop offset="0.47" stop-color="#99335d"/><stop offset="0.52" stop-color="#992346"/><stop offset="0.59" stop-color="#991533"/><stop offset="0.73" stop-color="#990019"/><stop offset="0.88" stop-color="#990008"/><stop offset="1" stop-color="#990000"/></linearGradient>
<linearGradient id="c236" gradientUnits="userSpaceOnUse" x1="1279" x2="1821" y1="0" y2="0"><stop offset="0" stop-color="#007599"/><stop offset="0.24" stop-color="#006999"/><stop offset="0.33" stop-color="#5d6199"/><stop offset="0.39" stop-color="#995b98"/><stop offset="0.43" stop-color="#994478"/><stop offset="0.47" stop-color="#99325d"/><stop offset="0.52" stop-color="#992247"/><stop offset="0.59" stop-color="#991434"/><stop offset="0.72" stop-color="#99001b"/><stop offset="0.86" stop-color="#99000a"/><stop offset="1" stop-color="#990000"/></linearGradient>
<linearGradient id="c237" gradientUnits="userSpaceOnUse" x1="1280" x2="1824" y1="0" y2="0"><stop offset="0" stop-color="#007399"/><stop offset="0.23" stop-color="#006799"/><stop offset="0.33" stop-color="#5b5f99"/><stop offset="0.39" stop-color="#995898"/><stop offset="0.42" stop-color="#994278"/><stop offset="0.47" stop-color="#992f5d"/><stop offset="0.52" stop-color="#992047"/><stop offset="0.58" stop-color="#991234"/><stop offset="0.7" stop-color="#99001d"/><stop offset="0.85" stop-color="#99000b"/><stop offset="1" stop-color="#990000"/></linearGradient>
<linearGradient id="c238" gradientUnits="userSpaceOnUse" x1="1280" x2="1826" y1="0" y2="0"><stop offset="0" stop-color="#007199"/><stop offset="0.23" stop-color="#006599"/><stop offset="0.33" stop-color="#5a5c99"/><stop offset="0.39" stop-color="#995598"/><stop offset="0.42" stop-color="#994079"/><stop offset="0.47" stop-color="#992d5d"/><stop offset="0.52" stop-color="#991e47"/><stop offset="0.58" stop-color="#991134"/><stop offset="0.69" stop-color="#99001f"/><stop offset="0.84" stop-color="#99000c"/><stop offset="1" stop-color="#990000"/></linearGradient>
<linearGradient id="c239" gradientUnits="userSpaceOnUse" x1="1281" x2="1825" y1="0" y2="0"><stop offset="0" stop-color="#007099"/><stop offset="0.23" stop-color="#006299"/><stop offset="0.33" stop-color="#5f5999"/><stop offset="0.39" stop-color="#995299"/><stop offset="0.42" stop-color="#993e79"/><stop offset="0.47" stop-color="#992c5e"/><stop offset="0.52" stop-color="#991c47"/><stop offset="0.58" stop-color="#991035"/><stop offset="0.68" stop-color="#990020"/><stop offset="0.83" stop-color="#99000e"/><stop offset="1" stop-color="#990000"/></linearGradient>
<linearGradient id="c240" gradientUnits="userSpaceOnUse" x1="1282" x2="1820" y1="0" y2="0"><stop offset="0" stop-color="#006e99"/><stop offset="0.23" stop-color="#006099"/><stop offset="0.33" stop-color="#5e5799"/><stop offset="0.39" stop-color="#995099"/><stop offset="0.43" stop-color="#993c7a"/><stop offset="0.47" stop-color="#992b5f"/><stop offset="0.52" stop-color="#991c49"/><stop offset="0.58" stop-color="#990f36"/><stop offset="0.68" stop-color="#990022"/><stop offset="0.81" stop-color="#990011"/><stop offset="1" stop-color="#990000"/></linearGradient>
<linearGradient id="c241" gradientUnits="userSpaceOnUse" x1="1282" x2="1814" y1="0" y2="0"><stop offset="0" stop-color="#006c99"/><stop offset="0.23" stop-color="#005e99"/><stop offset="0.33" stop-color="#5d5499"/><stop offset="0.39" stop-color="#994d99"/><stop offset="0.43" stop-color="#993979"/><stop offset="0.48" stop-color="#99285f"/><stop offset="0.53" stop-color="#991a49"/><stop offset="0.59" stop-color="#990e37"/><stop offset="0.68" stop-color="#990024"/><stop offset="0.81" stop-color="#990012"/><stop offset="1" stop-color="#990001"/></linearGradient>
<linearGradient id="c242" gradientUnits="userSpaceOnUse" x1="1283" x2="1809" y1="0" y2="0"><stop offset="0" stop-color="#006a99"/><stop offset="0.23" stop-color="#005c99"/><stop offset="0.33" stop-color="#5b5299"/><stop offset="0.4" stop-color="#994997"/><stop offset="0.44" stop-color="#993779"/><stop offset="0.48" stop-color="#99265f"/><stop offset="0.53" stop-color="#991949"/><stop offset="0.6" stop-color="#990c37"/><stop offset="0.68" stop-color="#990026"/><stop offset="0.81" stop-color="#990014"/><stop offset="1" stop-color="#990003"/></linearGradient>
<linearGradient id="c243" gradientUnits="userSpaceOnUse" x1="1283" x2="1803" y1="0" y2="0"><stop offset="0" stop-color="#006899"/><stop offset="0.23" stop-color="#005a99"/><stop offset="0.34" stop-color="#5b4f99"/><stop offset="0.4" stop-color="#994798"/><stop offset="0.44" stop-color="#99347a"/><stop offset="0.48" stop-color="#992560"/><stop offset="0.54" stop-color="#99174b"/><stop offset="0.6" stop-color="#990c39"/><stop offset="0.68" stop-color="#990028"/><stop offset="0.81" stop-color="#990015"/><stop offset="1" stop-color="#990004"/></linearGradient>
<linearGradient id="c244" gradientUnits="userSpaceOnUse" x1="1284" x2="1798" y1="0" y2="0"><stop offset="0" stop-color="#006699"/><stop offset="0.23" stop-color="#005899"/><stop offset="0.34" stop-color="#5a4d99"/><stop offset="0.41" stop-color="#994498"/><stop offset="0.44" stop-color="#99327a"/><stop offset="0.49" stop-color="#992461"/><stop offset="0.54" stop-color="#99164c"/><stop offset="0.6" stop-color="#990b3a"/><stop offset="0.67" stop-color="#99002a"/><stop offset="0.81" stop-color="#990016"/><stop offset="1" stop-color="#990005"/></linearGradient>
<linearGradient id="c245" gradientUnits="userSpaceOnUse" x1="1285" x2="1792" y1="0" y2="0"><stop offset="0" stop-color="#006499"/><stop offset="0.23" stop-color="#015599"/><stop offset="0.34" stop-color="#5c4b99"/><stop offset="0.41" stop-color="#994298"/><stop offset="0.45" stop-color="#99307a"/><stop offset="0.49" stop-color="#992262"/><stop offset="0.54" stop-color="#99154d"/><stop offset="0.61" stop-color="#990a3b"/><stop offset="0.67" stop-color="#99002c"/><stop offset="0.81" stop-color="#990018"/><stop offset="1" stop-color="#990007"/></linearGradient>
<linearGradient id="c246" gradientUnits="userSpaceOnUse" x1="1285" x2="1787" y1="0" y2="0"><stop offset="0" stop-color="#006399"/><stop offset="0.23" stop-color="#005399"/><stop offset="0.35" stop-color="#5e4899"/><stop offset="0.41" stop-color="#993f98"/><stop offset="0.45" stop-color="#992e7b"/><stop offset="0.5" stop-color="#992062"/><stop offset="0.55" stop-color="#99144d"/><stop offset="0.61" stop-color="#99093c"/><stop offset="0.67" stop-color="#99002f"/><stop offset="0.77" stop-color="#99001e"/><stop offset="1" stop-color="#990008"/></linearGradient>
<linearGradient id="c247" gradientUnits="userSpaceOnUse" x1="1286" x2="1781" y1="0" y2="0"><stop offset="0" stop-color="#006199"/><stop offset="0.23" stop-color="#005299"/><stop offset="0.35" stop-color="#5d4699"/><stop offset="0.42" stop-color="#993d99"/><stop offset="0.45" stop-color="#992d7c"/><stop offset="0.5" stop-color="#991f64"/><stop offset="0.55" stop-color="#99134f"/><stop offset="0.61" stop-color="#99083d"/><stop offset="0.67" stop-color="#990031"/><stop offset="0.77" stop-color="#990020"/><stop offset="1" stop-color="#990009"/></linearGradient>
<linearGradient id="c248" gradientUnits="userSpaceOnUse" x1="1287" x2="1776" y1="0" y2="0"><stop offset="0" stop-color="#005f99"/><stop offset="0.23" stop-color="#005099"/><stop offset="0.35" stop-color="#5d4399"/><stop offset="0.42" stop-color="#993a99"/><stop offset="0.46" stop-color="#992b7d"/><stop offset="0.5" stop-color="#991d64"/><stop offset="0.56" stop-color="#99114f"/><stop offset="0.62" stop-color="#99073e"/><stop offset="0.66" stop-color="#990033"/><stop offset="0.78" stop-color="#990021"/><stop offset="1" stop-color="#99000a"/></linearGradient>
<linearGradient id="c249" gradientUnits="userSpaceOnUse" x1="1287" x2="1770" y1="0" y2="0"><stop offset="0" stop-color="#005d99"/><stop offset="0.23" stop-color="#004e99"/><stop offset="0.36" stop-color="#5f4199"/><stop offset="0.43" stop-color="#993899"/><stop offset="0.46" stop-color="#99297d"/><stop offset="0.51" stop-color="#991c65"/><stop offset="0.56" stop-color="#991050"/><stop offset="0.62" stop-color="#99063e"/><stop offset="0.66" stop-color="#990036"/><stop offset="0.78" stop-color="#990022"/><stop offset="1" stop-color="#99000c"/></linearGradient>
<linearGradient id="c250" gradientUnits="userSpaceOnUse" x1="1288" x2="1765" y1="0" y2="0"><stop offset="0" stop-color="#005b99"/><stop offset="0.23" stop-color="#004c99"/><stop offset="0.36" stop-color="#5f3f99"/><stop offset="0.43" stop-color="#993599"/><stop offset="0.47" stop-color="#99267c"/><stop offset="0.51" stop-color="#991a65"/><stop offset="0.57" stop-color="#990f51"/><stop offset="0.63" stop-color="#99053f"/><stop offset="0.66" stop-color="#990038"/><stop offset="0.78" stop-color="#990023"/><stop offset="1" stop-color="#99000d"/></linearGradient>
<linearGradient id="c251" gradientUnits="userSpaceOnUse" x1="1289" x2="1759" y1="0" y2="0"><stop offset="0" stop-color="#005a99"/><stop offset="0.23" stop-color="#004a99"/><stop offset="0.35" stop-color="#593d99"/><stop offset="0.44" stop-color="#993298"/><stop offset="0.47" stop-color="#99247d"/><stop offset="0.52" stop-color="#991865"/><stop offset="0.57" stop-color="#990e52"/><stop offset="0.63" stop-color="#990440"/><stop offset="0.66" stop-color="#99003b"/><stop offset="0.79" stop-color="#990024"/><stop offset="1" stop-color="#99000e"/></linearGradient>
<linearGradient id="c252" gradientUnits="userSpaceOnUse" x1="1289" x2="1754" y1="0" y2="0"><stop offset="0" stop-color="#005899"/><stop offset="0.23" stop-color="#014899"/><stop offset="0.36" stop-color="#5d3b99"/><stop offset="0.44" stop-color="#993098"/><stop offset="0.48" stop-color="#99227d"/><stop offset="0.52" stop-color="#991767"/><stop offset="0.57" stop-color="#990d53"/><stop offset="0.64" stop-color="#990341"/><stop offset="0.79" stop-color="#990026"/><stop offset="1" stop-color="#990010"/></linearGradient>
<linearGradient id="c253" gradientUnits="userSpaceOnUse" x1="1290" x2="1748" y1="0" y2="0"><stop offset="0" stop-color="#005699"/><stop offset="0.23" stop-color="#004699"/><stop offset="0.36" stop-color="#5d3899"/><stop offset="0.45" stop-color="#992d98"/><stop offset="0.48" stop-color="#99207d"/><stop offset="0.53" stop-color="#991567"/><stop offset="0.58" stop-color="#990b54"/><stop offset="0.64" stop-color="#990243"/><stop offset="0.79" stop-color="#990027"/><stop offset="1" stop-color="#990011"/></linearGradient>
<linearGradient id="c254" gradientUnits="userSpaceOnUse" x1="1291" x2="1743" y1="0" y2="0"><stop offset="0" stop-color="#005599"/><stop offset="0.23" stop-color="#004499"/><stop offset="0.37" stop-color="#5d3699"/><stop offset="0.45" stop-color="#992b98"/><stop offset="0.49" stop-color="#991f7f"/><stop offset="0.53" stop-color="#991469"/><stop offset="0.58" stop-color="#990a55"/><stop offset="0.64" stop-color="#990144"/><stop offset="0.79" stop-color="#990028"/><stop offset="1" stop-color="#990012"/></linearGradient>
<linearGradient id="c255" gradientUnits="userSpaceOnUse" x1="1291" x2="1737" y1="0" y2="0"><stop offset="0" stop-color="#005399"/><stop offset="0.23" stop-color="#004399"/><stop offset="0.37" stop-color="#5c3499"/><stop offset="0.46" stop-color="#992999"/><stop offset="0.49" stop-color="#991d7f"/><stop offset="0.54" stop-color="#991369"/><stop offset="0.59" stop-color="#990956"/><stop offset="0.65" stop-color="#990045"/><stop offset="0.8" stop-color="#990029"/><stop offset="1" stop-color="#990014"/></linearGradient>
<linearGradient id="c256" gradientUnits="userSpaceOnUse" x1="1292" x2="1731" y1="0" y2="0"><stop offset="0" stop-color="#005199"/><stop offset="0.23" stop-color="#004199"/><stop offset="0.38" stop-color="#5f3299"/><stop offset="0.46" stop-color="#992799"/><stop offset="0.5" stop-color="#991b80"/><stop offset="0.54" stop-color="#99116a"/><stop offset="0.59" stop-color="#990857"/><stop offset="0.65" stop-color="#990047"/><stop offset="0.8" stop-color="#99002b"/><stop offset="1" stop-color="#990015"/></linearGradient>
<linearGradient id="c257" gradientUnits="userSpaceOnUse" x1="1293" x2="1726" y1="0" y2="0"><stop offset="0" stop-color="#004f99"/><stop offset="0.23" stop-color="#003f99"/><stop offset="0.38" stop-color="#603099"/><stop offset="0.46" stop-color="#992499"/><stop offset="0.5" stop-color="#991980"/><stop offset="0.55" stop-color="#99106b"/><stop offset="0.64" stop-color="#99004d"/><stop offset="0.66" stop-color="#990048"/><stop offset="0.81" stop-color="#99002c"/><stop offset="1" stop-color="#990017"/></linearGradient>
<linearGradient id="c258" gradientUnits="userSpaceOnUse" x1="1293" x2="1720" y1="0" y2="0"><stop offset="0" stop-color="#004e99"/><stop offset="0.23" stop-color="#003e99"/><stop offset="0.38" stop-color="#5d2e99"/><stop offset="0.47" stop-color="#992299"/><stop offset="0.51" stop-color="#991780"/><stop offset="0.55" stop-color="#990e6c"/><stop offset="0.64" stop-color="#990050"/><stop offset="0.66" stop-color="#990049"/><stop offset="0.81" stop-color="#99002e"/><stop offset="1" stop-color="#990018"/></linearGradient>
<linearGradient id="c259" gradientUnits="userSpaceOnUse" x1="1294" x2="1715" y1="0" y2="0"><stop offset="0" stop-color="#004c99"/><stop offset="0.23" stop-color="#013c99"/><stop offset="0.38" stop-color="#5c2c99"/><stop offset="0.48" stop-color="#991f98"/><stop offset="0.52" stop-color="#991581"/><stop offset="0.56" stop-color="#990c6c"/><stop offset="0.63" stop-color="#990054"/><stop offset="0.67" stop-color="#99004a"/><stop offset="0.81" stop-color="#99002f"/><stop offset="1" stop-color="#99001a"/></linearGradient>
<linearGradient id="c260" gradientUnits="userSpaceOnUse" x1="1295" x2="1709" y1="0" y2="0"><stop offset="0" stop-color="#004a99"/><stop offset="0.23" stop-color="#003a99"/><stop offset="0.39" stop-color="#5c2a99"/><stop offset="0.48" stop-color="#991d98"/><stop offset="0.52" stop-color="#991381"/><stop offset="0.57" stop-color="#990b6d"/><stop offset="0.63" stop-color="#990057"/><stop offset="0.67" stop-color="#99004b"/><stop offset="0.82" stop-color="#990031"/><stop offset="1" stop-color="#99001c"/></linearGradient>
<linearGradient id="c261" gradientUnits="userSpaceOnUse" x1="1296" x2="1704" y1="0" y2="0"><stop offset="0" stop-color="#004999"/><stop offset="0.23" stop-color="#003999"/><stop offset="0.39" stop-color="#5c2899"/><stop offset="0.49" stop-color="#991b98"/><stop offset="0.53" stop-color="#991281"/><stop offset="0.57" stop-color="#99096d"/><stop offset="0.62" stop-color="#99005b"/><stop offset="0.68" stop-color="#99004c"/><stop offset="0.82" stop-color="#990032"/><stop offset="1" stop-color="#99001d"/></linearGradient>
<linearGradient id="c262" gradientUnits="userSpaceOnUse" x1="1296" x2="1698" y1="0" y2="0"><stop offset="0" stop-color="#004799"/><stop offset="0.23" stop-color="#003799"/><stop offset="0.39" stop-color="#5b2699"/><stop offset="0.5" stop-color="#991998"/><stop offset="0.53" stop-color="#991083"/><stop offset="0.58" stop-color="#99086f"/><stop offset="0.62" stop-color="#99005f"/><stop offset="0.68" stop-color="#99004e"/><stop offset="0.82" stop-color="#990034"/><stop offset="1" stop-color="#99001f"/></linearGradient>
<linearGradient id="c263" gradientUnits="userSpaceOnUse" x1="1297" x2="1693" y1="0" y2="0"><stop offset="0" stop-color="#004699"/><stop offset="0.23" stop-color="#003599"/><stop offset="0.4" stop-color="#5e2499"/><stop offset="0.5" stop-color="#991799"/><stop offset="0.54" stop-color="#990e83"/><stop offset="0.58" stop-color="#99066f"/><stop offset="0.62" stop-color="#990063"/><stop offset="0.69" stop-color="#99004f"/><stop offset="0.83" stop-color="#990035"/><stop offset="1" stop-color="#990020"/></linearGradient>
<linearGradient id="c264" gradientUnits="userSpaceOnUse" x1="1298" x2="1687" y1="0" y2="0"><stop offset="0" stop-color="#004499"/><stop offset="0.23" stop-color="#003499"/><stop offset="0.41" stop-color="#5e2299"/><stop offset="0.51" stop-color="#991499"/><stop offset="0.56" stop-color="#990a7f"/><stop offset="0.61" stop-color="#990067"/><stop offset="0.69" stop-color="#990051"/><stop offset="0.83" stop-color="#990037"/><stop offset="1" stop-color="#990022"/></linearGradient>
<linearGradient id="c265" gradientUnits="userSpaceOnUse" x1="1299" x2="1682" y1="0" y2="0"><stop offset="0" stop-color="#004299"/><stop offset="0.23" stop-color="#003299"/><stop offset="0.41" stop-color="#5d2099"/><stop offset="0.51" stop-color="#991299"/><stop offset="0.56" stop-color="#990981"/><stop offset="0.61" stop-color="#99006c"/><stop offset="0.7" stop-color="#990052"/><stop offset="0.83" stop-color="#990039"/><stop offset="1" stop-color="#990024"/></linearGradient>
<linearGradient id="c266" gradientUnits="userSpaceOnUse" x1="1300" x2="1676" y1="0" y2="0"><stop offset="0" stop-color="#004199"/><stop offset="0.23" stop-color="#013199"/><stop offset="0.41" stop-color="#5f1e99"/><stop offset="0.52" stop-color="#991099"/><stop offset="0.61" stop-color="#990070"/><stop offset="0.7" stop-color="#990053"/><stop offset="0.84" stop-color="#99003a"/><stop offset="1" stop-color="#990026"/></linearGradient>
<linearGradient id="c267" gradientUnits="userSpaceOnUse" x1="1300" x2="1671" y1="0" y2="0"><stop offset="0" stop-color="#003f99"/><stop offset="0.23" stop-color="#002f99"/><stop offset="0.42" stop-color="#5f1c99"/><stop offset="0.53" stop-color="#990e99"/><stop offset="0.6" stop-color="#990076"/><stop offset="0.71" stop-color="#990055"/><stop offset="0.84" stop-color="#99003c"/><stop offset="1" stop-color="#990028"/></linearGradient>
<linearGradient id="c268" gradientUnits="userSpaceOnUse" x1="1301" x2="1665" y1="0" y2="0"><stop offset="0" stop-color="#003d99"/><stop offset="0.23" stop-color="#002e99"/><stop offset="0.42" stop-color="#5b1b99"/><stop offset="0.54" stop-color="#990b98"/><stop offset="0.6" stop-color="#99007a"/><stop offset="0.72" stop-color="#990056"/><stop offset="0.84" stop-color="#99003e"/><stop offset="1" stop-color="#99002a"/></linearGradient>
<linearGradient id="c269" gradientUnits="userSpaceOnUse" x1="1302" x2="1660" y1="0" y2="0"><stop offset="0" stop-color="#003c99"/><stop offset="0.23" stop-color="#012c99"/><stop offset="0.42" stop-color="#5d1999"/><stop offset="0.54" stop-color="#990998"/><stop offset="0.59" stop-color="#990080"/><stop offset="0.62" stop-color="#990074"/><stop offset="0.72" stop-color="#990057"/><stop offset="0.85" stop-color="#99003f"/><stop offset="1" stop-color="#99002c"/></linearGradient>
<linearGradient id="c270" gradientUnits="userSpaceOnUse" x1="1303" x2="1654" y1="0" y2="0"><stop offset="0" stop-color="#003a99"/><stop offset="0.23" stop-color="#002b99"/><stop offset="0.43" stop-color="#5d1799"/><stop offset="0.55" stop-color="#990798"/><stop offset="0.59" stop-color="#990086"/><stop offset="0.63" stop-color="#990076"/><stop offset="0.73" stop-color="#990059"/><stop offset="0.85" stop-color="#990041"/><stop offset="1" stop-color="#99002e"/></linearGradient>
<linearGradient id="c271" gradientUnits="userSpaceOnUse" x1="1304" x2="1649" y1="0" y2="0"><stop offset="0" stop-color="#003999"/><stop offset="0.23" stop-color="#002999"/><stop offset="0.43" stop-color="#5d1599"/><stop offset="0.56" stop-color="#990599"/><stop offset="0.58" stop-color="#99008c"/><stop offset="0.63" stop-color="#990077"/><stop offset="0.73" stop-color="#99005a"/><stop offset="0.85" stop-color="#990043"/><stop offset="1" stop-color="#990030"/></linearGradient>
<linearGradient id="c272" gradientUnits="userSpaceOnUse" x1="1305" x2="1643" y1="0" y2="0"><stop offset="0" stop-color="#003799"/><stop offset="0.22" stop-color="#002899"/><stop offset="0.42" stop-color="#541699"/><stop offset="0.57" stop-color="#990299"/><stop offset="0.64" stop-color="#990077"/><stop offset="0.74" stop-color="#99005c"/><stop offset="0.86" stop-color="#990045"/><stop offset="1" stop-color="#990032"/></linearGradient>
<linearGradient id="c273" gradientUnits="userSpaceOnUse" x1="1306" x2="1638" y1="0" y2="0"><stop offset="0" stop-color="#003599"/><stop offset="0.23" stop-color="#002699"/><stop offset="0.42" stop-color="#551499"/><stop offset="0.57" stop-color="#990099"/><stop offset="0.65" stop-color="#990079"/><stop offset="0.74" stop-color="#99005e"/><stop offset="0.86" stop-color="#990048"/><stop offset="1" stop-color="#990034"/></linearGradient>
<linearGradient id="c274" gradientUnits="userSpaceOnUse" x1="1307" x2="1632" y1="0" y2="0"><stop offset="0" stop-color="#003499"/><stop offset="0.22" stop-color="#002599"/><stop offset="0.46" stop-color="#600f99"/><stop offset="0.58" stop-color="#990099"/><stop offset="0.66" stop-color="#99007a"/><stop offset="0.75" stop-color="#99005f"/><stop offset="0.86" stop-color="#990049"/><stop offset="1" stop-color="#990037"/></linearGradient>
<linearGradient id="c275" gradientUnits="userSpaceOnUse" x1="1307" x2="1627" y1="0" y2="0"><stop offset="0" stop-color="#003299"/><stop offset="0.23" stop-color="#002399"/><stop offset="0.46" stop-color="#5e0e99"/><stop offset="0.56" stop-color="#8a0099"/><stop offset="0.59" stop-color="#990099"/><stop offset="0.67" stop-color="#99007a"/><stop offset="0.76" stop-color="#990061"/><stop offset="0.87" stop-color="#99004b"/><stop offset="1" stop-color="#990039"/></linearGradient>
<linearGradient id="c276" gradientUnits="userSpaceOnUse" x1="1308" x2="1621" y1="0" y2="0"><stop offset="0" stop-color="#003199"/><stop offset="0.23" stop-color="#012299"/><stop offset="0.42" stop-color="#4d1199"/><stop offset="0.55" stop-color="#830099"/><stop offset="0.6" stop-color="#990099"/><stop offset="0.68" stop-color="#99007c"/><stop offset="0.77" stop-color="#990063"/><stop offset="0.87" stop-color="#99004e"/><stop offset="1" stop-color="#99003c"/></linearGradient>
<linearGradient id="c277" gradientUnits="userSpaceOnUse" x1="1309" x2="1616" y1="0" y2="0"><stop offset="0" stop-color="#002f99"/><stop offset="0.22" stop-color="#002199"/><stop offset="0.41" stop-color="#481099"/><stop offset="0.55" stop-color="#7d0099"/><stop offset="0.61" stop-color="#990098"/><stop offset="0.69" stop-color="#99007c"/><stop offset="0.78" stop-color="#990064"/><stop offset="0.88" stop-color="#99004f"/><stop offset="1" stop-color="#99003e"/></linearGradient>
<linearGradient id="c278" gradientUnits="userSpaceOnUse" x1="1310" x2="1610" y1="0" y2="0"><stop offset="0" stop-color="#002e99"/><stop offset="0.22" stop-color="#001f99"/><stop offset="0.41" stop-color="#450f99"/><stop offset="0.54" stop-color="#770099"/><stop offset="0.62" stop-color="#990098"/><stop offset="0.7" stop-color="#99007d"/><stop offset="0.78" stop-color="#990066"/><stop offset="0.88" stop-color="#990052"/><stop offset="1" stop-color="#990041"/></linearGradient>
<linearGradient id="c279" gradientUnits="userSpaceOnUse" x1="1311" x2="1605" y1="0" y2="0"><stop offset="0" stop-color="#002c99"/><stop offset="0.22" stop-color="#001e99"/><stop offset="0.53" stop-color="#700099"/><stop offset="0.63" stop-color="#990099"/><stop offset="0.7" stop-color="#99007f"/><stop offset="0.79" stop-color="#990068"/><stop offset="0.89" stop-color="#990054"/><stop offset="1" stop-color="#990043"/></linearGradient>
<linearGradient id="c280" gradientUnits="userSpaceOnUse" x1="1312" x2="1599" y1="0" y2="0"><stop offset="0" stop-color="#002b99"/><stop offset="0.22" stop-color="#001d99"/><stop offset="0.53" stop-color="#6b0099"/><stop offset="0.64" stop-color="#990099"/><stop offset="0.71" stop-color="#990080"/><stop offset="0.8" stop-color="#99006a"/><stop offset="1" stop-color="#990046"/></linearGradient>
<linearGradient id="c281" gradientUnits="userSpaceOnUse" x1="1313" x2="1594" y1="0" y2="0"><stop offset="0" stop-color="#002999"/><stop offset="0.22" stop-color="#001b99"/><stop offset="0.52" stop-color="#650099"/><stop offset="0.65" stop-color="#990099"/><stop offset="0.73" stop-color="#990080"/><stop offset="0.8" stop-color="#99006c"/><stop offset="1" stop-color="#990049"/></linearGradient>
<linearGradient id="c282" gradientUnits="userSpaceOnUse" x1="1314" x2="1588" y1="0" y2="0"><stop offset="0" stop-color="#002799"/><stop offset="0.22" stop-color="#001a99"/><stop offset="0.51" stop-color="#5f0099"/><stop offset="0.67" stop-color="#990099"/><stop offset="0.74" stop-color="#990082"/><stop offset="0.81" stop-color="#99006e"/><stop offset="1" stop-color="#99004c"/></linearGradient>
<linearGradient id="c283" gradientUnits="userSpaceOnUse" x1="1315" x2="1582" y1="0" y2="0"><stop offset="0" stop-color="#002699"/><stop offset="0.22" stop-color="#011999"/><stop offset="0.5" stop-color="#5a0099"/><stop offset="0.68" stop-color="#990099"/><stop offset="0.82" stop-color="#990070"/><stop offset="1" stop-color="#990050"/></linearGradient>
<linearGradient id="c284" gradientUnits="userSpaceOnUse" x1="1316" x2="1577" y1="0" y2="0"><stop offset="0" stop-color="#002499"/><stop offset="0.22" stop-color="#001799"/><stop offset="0.49" stop-color="#540099"/><stop offset="0.69" stop-color="#990099"/><stop offset="0.83" stop-color="#990072"/><stop offset="1" stop-color="#990053"/></linearGradient>
<linearGradient id="c285" gradientUnits="userSpaceOnUse" x1="1317" x2="1571" y1="0" y2="0"><stop offset="0" stop-color="#002399"/><stop offset="0.22" stop-color="#001699"/><stop offset="0.48" stop-color="#4f0099"/><stop offset="0.71" stop-color="#980099"/><stop offset="0.84" stop-color="#990074"/><stop offset="1" stop-color="#990057"/></linearGradient>
<linearGradient id="c286" gradientUnits="userSpaceOnUse" x1="1318" x2="1566" y1="0" y2="0"><stop offset="0" stop-color="#002199"/><stop offset="0.22" stop-color="#011599"/><stop offset="0.47" stop-color="#4a0099"/><stop offset="0.72" stop-color="#980099"/><stop offset="0.85" stop-color="#990076"/><stop offset="1" stop-color="#99005a"/></linearGradient>
<linearGradient id="c287" gradientUnits="userSpaceOnUse" x1="1319" x2="1560" y1="0" y2="0"><stop offset="0" stop-color="#002099"/><stop offset="0.22" stop-color="#001399"/><stop offset="0.46" stop-color="#450099"/><stop offset="0.74" stop-color="#980099"/><stop offset="0.86" stop-color="#990078"/><stop offset="1" stop-color="#99005e"/></linearGradient>
<linearGradient id="c288" gradientUnits="userSpaceOnUse" x1="1320" x2="1555" y1="0" y2="0"><stop offset="0" stop-color="#001e99"/><stop offset="0.21" stop-color="#001299"/><stop offset="0.45" stop-color="#410099"/><stop offset="0.75" stop-color="#980099"/><stop offset="0.87" stop-color="#99007a"/><stop offset="1" stop-color="#990062"/></linearGradient>
<linearGradient id="c289" gradientUnits="userSpaceOnUse" x1="1321" x2="1549" y1="0" y2="0"><stop offset="0" stop-color="#001d99"/><stop offset="0.21" stop-color="#001199"/><stop offset="0.44" stop-color="#3b0099"/><stop offset="0.78" stop-color="#990099"/><stop offset="0.88" stop-color="#99007e"/><stop offset="1" stop-color="#990067"/></linearGradient>
<linearGradient id="c290" gradientUnits="userSpaceOnUse" x1="1322" x2="1544" y1="0" y2="0"><stop offset="0" stop-color="#001b99"/><stop offset="0.21" stop-color="#011099"/><stop offset="0.42" stop-color="#360099"/><stop offset="0.79" stop-color="#990099"/><stop offset="0.89" stop-color="#990081"/><stop offset="1" stop-color="#99006b"/></linearGradient>
<linearGradient id="c291" gradientUnits="userSpaceOnUse" x1="1323" x2="1538" y1="0" y2="0"><stop offset="0" stop-color="#001a99"/><stop offset="0.21" stop-color="#000e99"/><stop offset="0.41" stop-color="#320099"/><stop offset="0.63" stop-color="#680099"/><stop offset="0.81" stop-color="#990099"/><stop offset="0.9" stop-color="#990083"/><stop offset="1" stop-color="#990070"/></linearGradient>
<linearGradient id="c292" gradientUnits="userSpaceOnUse" x1="1324" x2="1533" y1="0" y2="0"><stop offset="0" stop-color="#001899"/><stop offset="0.21" stop-color="#000d99"/><stop offset="0.4" stop-color="#2d0099"/><stop offset="0.64" stop-color="#660099"/><stop offset="0.83" stop-color="#990099"/><stop offset="1" stop-color="#990074"/></linearGradient>
<linearGradient id="c293" gradientUnits="userSpaceOnUse" x1="1325" x2="1527" y1="0" y2="0"><stop offset="0" stop-color="#001699"/><stop offset="0.2" stop-color="#000c99"/><stop offset="0.38" stop-color="#280099"/><stop offset="0.64" stop-color="#630099"/><stop offset="0.86" stop-color="#990099"/><stop offset="1" stop-color="#99007a"/></linearGradient>
<linearGradient id="c294" gradientUnits="userSpaceOnUse" x1="1326" x2="1522" y1="0" y2="0"><stop offset="0" stop-color="#001599"/><stop offset="0.2" stop-color="#000b99"/><stop offset="0.37" stop-color="#250099"/><stop offset="0.65" stop-color="#610099"/><stop offset="0.88" stop-color="#980099"/><stop offset="1" stop-color="#99007f"/></linearGradient>
<linearGradient id="c295" gradientUnits="userSpaceOnUse" x1="1327" x2="1516" y1="0" y2="0"><stop offset="0" stop-color="#001399"/><stop offset="0.2" stop-color="#000999"/><stop offset="0.35" stop-color="#200099"/><stop offset="0.66" stop-color="#600099"/><stop offset="0.9" stop-color="#980099"/><stop offset="1" stop-color="#990085"/></linearGradient>
<linearGradient id="c296" gradientUnits="userSpaceOnUse" x1="1329" x2="1511" y1="0" y2="0"><stop offset="0" stop-color="#001299"/><stop offset="0.19" stop-color="#000899"/><stop offset="0.32" stop-color="#1b0099"/><stop offset="0.66" stop-color="#5e0099"/><stop offset="0.93" stop-color="#980099"/><stop offset="1" stop-color="#99008a"/></linearGradient>
<linearGradient id="c297" gradientUnits="userSpaceOnUse" x1="1330" x2="1505" y1="0" y2="0"><stop offset="0" stop-color="#001099"/><stop offset="0.19" stop-color="#010799"/><stop offset="0.31" stop-color="#170099"/><stop offset="0.68" stop-color="#5d0099"/><stop offset="0.96" stop-color="#980099"/><stop offset="1" stop-color="#990091"/></linearGradient>
<linearGradient id="c298" gradientUnits="userSpaceOnUse" x1="1331" x2="1500" y1="0" y2="0"><stop offset="0" stop-color="#000e99"/><stop offset="0.19" stop-color="#000699"/><stop offset="0.28" stop-color="#130099"/><stop offset="0.67" stop-color="#580099"/><stop offset="1" stop-color="#990098"/></linearGradient>
<linearGradient id="c299" gradientUnits="userSpaceOnUse" x1="1332" x2="1494" y1="0" y2="0"><stop offset="0" stop-color="#000d99"/><stop offset="0.19" stop-color="#000499"/><stop offset="0.27" stop-color="#0f0099"/><stop offset="0.7" stop-color="#590099"/><stop offset="1" stop-color="#930099"/></linearGradient>
<linearGradient id="c300" gradientUnits="userSpaceOnUse" x1="1334" x2="1489" y1="0" y2="0"><stop offset="0" stop-color="#000b99"/><stop offset="0.18" stop-color="#010399"/><stop offset="0.23" stop-color="#0a0099"/><stop offset="0.7" stop-color="#560099"/><stop offset="1" stop-color="#8c0099"/></linearGradient>
<linearGradient id="c301" gradientUnits="userSpaceOnUse" x1="1335" x2="1483" y1="0" y2="0"><stop offset="0" stop-color="#000999"/><stop offset="0.18" stop-color="#000299"/><stop offset="1" stop-color="#850099"/></linearGradient>
<linearGradient id="c302" gradientUnits="userSpaceOnUse" x1="1336" x2="1478" y1="0" y2="0"><stop offset="0" stop-color="#000899"/><stop offset="0.17" stop-color="#000099"/><stop offset="1" stop-color="#7f0099"/></linearGradient>
<linearGradient id="c303" gradientUnits="userSpaceOnUse" x1="1338" x2="1472" y1="0" y2="0"><stop offset="0" stop-color="#000699"/><stop offset="0.16" stop-color="#000099"/><stop offset="1" stop-color="#780099"/></linearGradient>
<linearGradient id="c304" gradientUnits="userSpaceOnUse" x1="1339" x2="1467" y1="0" y2="0"><stop offset="0" stop-color="#000499"/><stop offset="0.16" stop-color="#000099"/><stop offset="1" stop-color="#730099"/></linearGradient>
<linearGradient id="c305" gradientUnits="userSpaceOnUse" x1="1341" x2="1461" y1="0" y2="0"><stop offset="0" stop-color="#000299"/><stop offset="0.14" stop-color="#000099"/><stop offset="1" stop-color="#6c0099"/></linearGradient>
<linearGradient id="c306" gradientUnits="userSpaceOnUse" x1="1342" x2="1456" y1="0" y2="0"><stop offset="0" stop-color="#000099"/><stop offset="0.13" stop-color="#000099"/><stop offset="1" stop-color="#670099"/></linearGradient>
<linearGradient id="c307" gradientUnits="userSpaceOnUse" x1="1344" x2="1450" y1="0" y2="0"><stop offset="0" stop-color="#000099"/><stop offset="0.12" stop-color="#010099"/><stop offset="1" stop-color="#600099"/></linearGradient>
<linearGradient id="c308" gradientUnits="userSpaceOnUse" x1="1346" x2="1445" y1="0" y2="0"><stop offset="0" stop-color="#000099"/><stop offset="0.1" stop-color="#000099"/><stop offset="1" stop-color="#5b0099"/></linearGradient>
<linearGradient id="c309" gradientUnits="userSpaceOnUse" x1="1348" x2="1439" y1="0" y2="0"><stop offset="0" stop-color="#000099"/><stop offset="0.08" stop-color="#000099"/><stop offset="1" stop-color="#550099"/></linearGradient>
<linearGradient id="c310" gradientUnits="userSpaceOnUse" x1="1350" x2="1433" y1="0" y2="0"><stop offset="0" stop-color="#000099"/><stop offset="0.06" stop-color="#010099"/><stop offset="1" stop-color="#4f0099"/></linearGradient>
<linearGradient id="c311" gradientUnits="userSpaceOnUse" x1="1352" x2="1428" y1="0" y2="0"><stop offset="0" stop-color="#000099"/><stop offset="1" stop-color="#4b0099"/></linearGradient>
<linearGradient id="c312" gradientUnits="userSpaceOnUse" x1="1354" x2="1422" y1="0" y2="0"><stop offset="0" stop-color="#010099"/><stop offset="1" stop-color="#450099"/></linearGradient>
<linearGradient id="c313" gradientUnits="userSpaceOnUse" x1="1357" x2="1417" y1="0" y2="0"><stop offset="0" stop-color="#060099"/><stop offset="1" stop-color="#400099"/></linearGradient>
<linearGradient id="c314" gradientUnits="userSpaceOnUse" x1="1359" x2="1411" y1="0" y2="0"><stop offset="0" stop-color="#090099"/><stop offset="1" stop-color="#3b0099"/></linearGradient>
<linearGradient id="c315" gradientUnits="userSpaceOnUse" x1="1362" x2="1406" y1="0" y2="0"><stop offset="0" stop-color="#0c0099"/><stop offset="1" stop-color="#360099"/></linearGradient>
<linearGradient id="c316" gradientUnits="userSpaceOnUse" x1="1365" x2="1400" y1="0" y2="0"><stop offset="0" stop-color="#100099"/><stop offset="1" stop-color="#310099"/></linearGradient>
<linearGradient id="c317" gradientUnits="userSpaceOnUse" x1="1368" x2="1395" y1="0" y2="0"><stop offset="0" stop-color="#130099"/><stop offset="1" stop-color="#2d0099"/></linearGradient>
<linearGradient id="c318" gradientUnits="userSpaceOnUse" x1="1371" x2="1389" y1="0" y2="0"><stop offset="0" stop-color="#170099"/><stop offset="1" stop-color="#280099"/></linearGradient>
<linearGradient id="c319" gradientUnits="userSpaceOnUse" x1="1374" x2="1384" y1="0" y2="0"><stop offset="0" stop-color="#1a0099"/><stop offset="1" stop-color="#230099"/></linearGradient>
<linearGradient id="c320" gradientUnits="userSpaceOnUse" x1="1477" x2="1484" y1="0" y2="0"><stop offset="0" stop-color="#00ff02"/><stop offset="0.29" stop-color="#00ff01"/><stop offset="1" stop-color="#0bff00"/></linearGradient>
<linearGradient id="c321" gradientUnits="userSpaceOnUse" x1="1476" x2="1487" y1="0" y2="0"><stop offset="0" stop-color="#00ff05"/><stop offset="0.18" stop-color="#00ff04"/><stop offset="1" stop-color="#12ff00"/></linearGradient>
<linearGradient id="c322" gradientUnits="userSpaceOnUse" x1="1476" x2="1490" y1="0" y2="0"><stop offset="0" stop-color="#00ff07"/><stop offset="1" stop-color="#18ff00"/></linearGradient>
<linearGradient id="c323" gradientUnits="userSpaceOnUse" x1="1475" x2="1493" y1="0" y2="0"><stop offset="0" stop-color="#00ff09"/><stop offset="0.11" stop-color="#00ff08"/><stop offset="1" stop-color="#1fff00"/></linearGradient>
<linearGradient id="c324" gradientUnits="userSpaceOnUse" x1="1474" x2="1497" y1="0" y2="0"><stop offset="0" stop-color="#00ff0b"/><stop offset="0.09" stop-color="#00ff0a"/><stop offset="1" stop-color="#28ff00"/></linearGradient>
<linearGradient id="c325" gradientUnits="userSpaceOnUse" x1="1474" x2="1500" y1="0" y2="0"><stop offset="0" stop-color="#00ff0d"/><stop offset="1" stop-color="#2eff00"/></linearGradient>
<linearGradient id="c326" gradientUnits="userSpaceOnUse" x1="1473" x2="1503" y1="0" y2="0"><stop offset="0" stop-color="#00ff0f"/><stop offset="0.07" stop-color="#01ff0e"/><stop offset="1" stop-color="#35ff00"/></linearGradient>
<linearGradient id="c327" gradientUnits="userSpaceOnUse" x1="1472" x2="1506" y1="0" y2="0"><stop offset="0" stop-color="#00ff11"/><stop offset="0.06" stop-color="#00ff10"/><stop offset="1" stop-color="#3cff00"/></linearGradient>
<linearGradient id="c328" gradientUnits="userSpaceOnUse" x1="1471" x2="1510" y1="0" y2="0"><stop offset="0" stop-color="#00ff13"/><stop offset="0.05" stop-color="#00ff12"/><stop offset="1" stop-color="#45ff00"/></linearGradient>
<linearGradient id="c329" gradientUnits="userSpaceOnUse" x1="1471" x2="1513" y1="0" y2="0"><stop offset="0" stop-color="#00ff15"/><stop offset="1" stop-color="#4cff00"/></linearGradient>
<linearGradient id="c330" gradientUnits="userSpaceOnUse" x1="1470" x2="1516" y1="0" y2="0"><stop offset="0" stop-color="#00ff17"/><stop offset="0.04" stop-color="#00ff16"/><stop offset="1" stop-color="#53ff00"/></linearGradient>
<linearGradient id="c331" gradientUnits="userSpaceOnUse" x1="1469" x2="1519" y1="0" y2="0"><stop offset="0" stop-color="#00ff19"/><stop offset="0.04" stop-color="#00ff19"/><stop offset="1" stop-color="#5aff00"/></linearGradient>
<linearGradient id="c332" gradientUnits="userSpaceOnUse" x1="1469" x2="1522" y1="0" y2="0"><stop offset="0" stop-color="#00ff1b"/><stop offset="1" stop-color="#62ff00"/></linearGradient>
<linearGradient id="c333" gradientUnits="userSpaceOnUse" x1="1468" x2="1526" y1="0" y2="0"><stop offset="0" stop-color="#00ff1d"/><stop offset="0.03" stop-color="#01ff1c"/><stop offset="1" stop-color="#6bff00"/></linearGradient>
<linearGradient id="c334" gradientUnits="userSpaceOnUse" x1="1467" x2="1529" y1="0" y2="0"><stop offset="0" stop-color="#00ff20"/><stop offset="0.03" stop-color="#00ff1f"/><stop offset="1" stop-color="#73ff00"/></linearGradient>
<linearGradient id="c335" gradientUnits="userSpaceOnUse" x1="1466" x2="1532" y1="0" y2="0"><stop offset="0" stop-color="#00ff22"/><stop offset="0.03" stop-color="#00ff21"/><stop offset="1" stop-color="#7bff00"/></linearGradient>
<linearGradient id="c336" gradientUnits="userSpaceOnUse" x1="1466" x2="1535" y1="0" y2="0"><stop offset="0" stop-color="#00ff24"/><stop offset="0.03" stop-color="#01ff23"/><stop offset="1" stop-color="#83ff00"/></linearGradient>
<linearGradient id="c337" gradientUnits="userSpaceOnUse" x1="1465" x2="1539" y1="0" y2="0"><stop offset="0" stop-color="#00ff26"/><stop offset="0.03" stop-color="#00ff25"/><stop offset="1" stop-color="#8dff00"/></linearGradient>
<linearGradient id="c338" gradientUnits="userSpaceOnUse" x1="1464" x2="1542" y1="0" y2="0"><stop offset="0" stop-color="#00ff28"/><stop offset="0.03" stop-color="#00ff27"/><stop offset="1" stop-color="#95ff00"/></linearGradient>
<linearGradient id="c339" gradientUnits="userSpaceOnUse" x1="1464" x2="1545" y1="0" y2="0"><stop offset="0" stop-color="#00ff2a"/><stop offset="1" stop-color="#9eff00"/></linearGradient>
<linearGradient id="c340" gradientUnits="userSpaceOnUse" x1="1463" x2="1548" y1="0" y2="0"><stop offset="0" stop-color="#00ff2c"/><stop offset="0.02" stop-color="#01ff2b"/><stop offset="1" stop-color="#a7ff00"/></linearGradient>
<linearGradient id="c341" gradientUnits="userSpaceOnUse" x1="1462" x2="1551" y1="0" y2="0"><stop offset="0" stop-color="#00ff2e"/><stop offset="0.02" stop-color="#00ff2e"/><stop offset="0.54" stop-color="#5dff18"/><stop offset="1" stop-color="#b0ff00"/></linearGradient>
<linearGradient id="c342" gradientUnits="userSpaceOnUse" x1="1461" x2="1555" y1="0" y2="0"><stop offset="0" stop-color="#00ff31"/><stop offset="0.03" stop-color="#02ff2f"/><stop offset="0.52" stop-color="#5fff1a"/><stop offset="1" stop-color="#bbff00"/></linearGradient>
<linearGradient id="c343" gradientUnits="userSpaceOnUse" x1="1461" x2="1558" y1="0" y2="0"><stop offset="0" stop-color="#00ff33"/><stop offset="0.02" stop-color="#01ff32"/><stop offset="0.53" stop-color="#65ff1b"/><stop offset="1" stop-color="#c5ff00"/></linearGradient>
<linearGradient id="c344" gradientUnits="userSpaceOnUse" x1="1460" x2="1561" y1="0" y2="0"><stop offset="0" stop-color="#00ff35"/><stop offset="0.02" stop-color="#00ff34"/><stop offset="0.61" stop-color="#7bff18"/><stop offset="1" stop-color="#cfff00"/></linearGradient>
<linearGradient id="c345" gradientUnits="userSpaceOnUse" x1="1459" x2="1564" y1="0" y2="0"><stop offset="0" stop-color="#00ff37"/><stop offset="0.02" stop-color="#00ff36"/><stop offset="0.6" stop-color="#7dff1a"/><stop offset="1" stop-color="#d9ff00"/></linearGradient>
<linearGradient id="c346" gradientUnits="userSpaceOnUse" x1="1459" x2="1568" y1="0" y2="0"><stop offset="0" stop-color="#00ff39"/><stop offset="0.61" stop-color="#88ff1a"/><stop offset="1" stop-color="#e5ff00"/></linearGradient>
<linearGradient id="c347" gradientUnits="userSpaceOnUse" x1="1458" x2="1571" y1="0" y2="0"><stop offset="0" stop-color="#00ff3c"/><stop offset="0.02" stop-color="#01ff3b"/><stop offset="0.6" stop-color="#8bff1c"/><stop offset="1" stop-color="#f0ff00"/></linearGradient>
<linearGradient id="c348" gradientUnits="userSpaceOnUse" x1="1457" x2="1574" y1="0" y2="0"><stop offset="0" stop-color="#00ff3e"/><stop offset="0.02" stop-color="#00ff3d"/><stop offset="0.59" stop-color="#8dff1e"/><stop offset="1" stop-color="#fbff00"/></linearGradient>
<linearGradient id="c349" gradientUnits="userSpaceOnUse" x1="1457" x2="1577" y1="0" y2="0"><stop offset="0" stop-color="#00ff40"/><stop offset="0.6" stop-color="#96ff1f"/><stop offset="0.97" stop-color="#ffff00"/><stop offset="1" stop-color="#fff800"/></linearGradient>
<linearGradient id="c350" gradientUnits="userSpaceOnUse" x1="1456" x2="1580" y1="0" y2="0"><stop offset="0" stop-color="#00ff43"/><stop offset="0.02" stop-color="#01ff42"/><stop offset="0.56" stop-color="#92ff23"/><stop offset="0.94" stop-color="#feff05"/><stop offset="1" stop-color="#ffed00"/></linearGradient>
<linearGradient id="c351" gradientUnits="userSpaceOnUse" x1="1455" x2="1584" y1="0" y2="0"><stop offset="0" stop-color="#00ff45"/><stop offset="0.02" stop-color="#00ff44"/><stop offset="0.53" stop-color="#91ff26"/><stop offset="0.9" stop-color="#ffff09"/><stop offset="1" stop-color="#ffe100"/></linearGradient>
<linearGradient id="c352" gradientUnits="userSpaceOnUse" x1="1454" x2="1587" y1="0" y2="0"><stop offset="0" stop-color="#00ff48"/><stop offset="0.02" stop-color="#00ff47"/><stop offset="0.51" stop-color="#8fff2a"/><stop offset="0.86" stop-color="#feff0d"/><stop offset="1" stop-color="#ffd800"/></linearGradient>
<linearGradient id="c353" gradientUnits="userSpaceOnUse" x1="1454" x2="1590" y1="0" y2="0"><stop offset="0" stop-color="#00ff4a"/><stop offset="0.01" stop-color="#02ff49"/><stop offset="0.5" stop-color="#91ff2c"/><stop offset="0.84" stop-color="#ffff10"/><stop offset="1" stop-color="#ffcf00"/></linearGradient>
<linearGradient id="c354" gradientUnits="userSpaceOnUse" x1="1453" x2="1593" y1="0" y2="0"><stop offset="0" stop-color="#00ff4c"/><stop offset="0.01" stop-color="#01ff4c"/><stop offset="0.49" stop-color="#92ff2f"/><stop offset="0.81" stop-color="#feff14"/><stop offset="0.91" stop-color="#ffdf08"/><stop offset="1" stop-color="#ffc600"/></linearGradient>
<linearGradient id="c355" gradientUnits="userSpaceOnUse" x1="1452" x2="1597" y1="0" y2="0"><stop offset="0" stop-color="#00ff4f"/><stop offset="0.01" stop-color="#00ff4e"/><stop offset="0.45" stop-color="#8cff33"/><stop offset="0.78" stop-color="#fffe17"/><stop offset="0.88" stop-color="#ffdc0b"/><stop offset="1" stop-color="#ffbd00"/></linearGradient>
<linearGradient id="c356" gradientUnits="userSpaceOnUse" x1="1452" x2="1600" y1="0" y2="0"><stop offset="0" stop-color="#00ff51"/><stop offset="0.46" stop-color="#95ff34"/><stop offset="0.75" stop-color="#ffff1b"/><stop offset="0.87" stop-color="#ffd60c"/><stop offset="1" stop-color="#ffb500"/></linearGradient>
<linearGradient id="c357" gradientUnits="userSpaceOnUse" x1="1451" x2="1603" y1="0" y2="0"><stop offset="0" stop-color="#00ff54"/><stop offset="0.01" stop-color="#01ff53"/><stop offset="0.43" stop-color="#91ff38"/><stop offset="0.72" stop-color="#fdff1f"/><stop offset="0.86" stop-color="#ffd10d"/><stop offset="1" stop-color="#ffae00"/></linearGradient>
<linearGradient id="c358" gradientUnits="userSpaceOnUse" x1="1450" x2="1606" y1="0" y2="0"><stop offset="0" stop-color="#00ff56"/><stop offset="0.01" stop-color="#00ff56"/><stop offset="0.42" stop-color="#8fff3c"/><stop offset="0.71" stop-color="#ffff23"/><stop offset="0.84" stop-color="#ffd010"/><stop offset="1" stop-color="#ffa700"/></linearGradient>
<linearGradient id="c359" gradientUnits="userSpaceOnUse" x1="1449" x2="1610" y1="0" y2="0"><stop offset="0" stop-color="#00ff59"/><stop offset="0.01" stop-color="#00ff58"/><stop offset="0.4" stop-color="#8dff3f"/><stop offset="0.68" stop-color="#feff27"/><stop offset="0.83" stop-color="#ffc911"/><stop offset="1" stop-color="#ff9f00"/></linearGradient>
<linearGradient id="c360" gradientUnits="userSpaceOnUse" x1="1449" x2="1613" y1="0" y2="0"><stop offset="0" stop-color="#00ff5b"/><stop offset="0.01" stop-color="#02ff5b"/><stop offset="0.4" stop-color="#93ff41"/><stop offset="0.66" stop-color="#ffff2a"/><stop offset="0.73" stop-color="#ffe11e"/><stop offset="0.81" stop-color="#ffc714"/><stop offset="1" stop-color="#ff9800"/></linearGradient>
<linearGradient id="c361" gradientUnits="userSpaceOnUse" x1="1448" x2="1616" y1="0" y2="0"><stop offset="0" stop-color="#00ff5e"/><stop offset="0.01" stop-color="#01ff5e"/><stop offset="0.38" stop-color="#91ff45"/><stop offset="0.64" stop-color="#feff2e"/><stop offset="0.72" stop-color="#ffde20"/><stop offset="0.8" stop-color="#ffc215"/><stop offset="1" stop-color="#ff9200"/></linearGradient>
<linearGradient id="c362" gradientUnits="userSpaceOnUse" x1="1447" x2="1619" y1="0" y2="0"><stop offset="0" stop-color="#00ff61"/><stop offset="0.01" stop-color="#00ff60"/><stop offset="0.36" stop-color="#8cff49"/><stop offset="0.62" stop-color="#ffff31"/><stop offset="0.7" stop-color="#ffdc23"/><stop offset="0.79" stop-color="#ffbf17"/><stop offset="0.89" stop-color="#ffa40b"/><stop offset="1" stop-color="#ff8d00"/></linearGradient>
<linearGradient id="c363" gradientUnits="userSpaceOnUse" x1="1447" x2="1622" y1="0" y2="0"><stop offset="0" stop-color="#00ff64"/><stop offset="0.01" stop-color="#02ff63"/><stop offset="0.37" stop-color="#94ff4b"/><stop offset="0.6" stop-color="#feff35"/><stop offset="0.69" stop-color="#ffdb26"/><stop offset="0.78" stop-color="#ffbc18"/><stop offset="0.88" stop-color="#ffa00c"/><stop offset="1" stop-color="#ff8700"/></linearGradient>
<linearGradient id="c364" gradientUnits="userSpaceOnUse" x1="1446" x2="1626" y1="0" y2="0"><stop offset="0" stop-color="#00ff66"/><stop offset="0.01" stop-color="#01ff66"/><stop offset="0.34" stop-color="#90ff4f"/><stop offset="0.58" stop-color="#fffe39"/><stop offset="0.67" stop-color="#ffd929"/><stop offset="0.77" stop-color="#ffb719"/><stop offset="0.88" stop-color="#ff9a0c"/><stop offset="1" stop-color="#ff8000"/></linearGradient>
<linearGradient id="c365" gradientUnits="userSpaceOnUse" x1="1445" x2="1629" y1="0" y2="0"><stop offset="0" stop-color="#00ff69"/><stop offset="0.01" stop-color="#00ff69"/><stop offset="0.33" stop-color="#8eff52"/><stop offset="0.57" stop-color="#feff3d"/><stop offset="0.66" stop-color="#ffd62b"/><stop offset="0.76" stop-color="#ffb41b"/><stop offset="0.87" stop-color="#ff960d"/><stop offset="1" stop-color="#ff7b00"/></linearGradient>
<linearGradient id="c366" gradientUnits="userSpaceOnUse" x1="1444" x2="1632" y1="0" y2="0"><stop offset="0" stop-color="#00ff6c"/><stop offset="0.01" stop-color="#00ff6c"/><stop offset="0.31" stop-color="#89ff56"/><stop offset="0.55" stop-color="#fffe40"/><stop offset="0.64" stop-color="#ffd42d"/><stop offset="0.74" stop-color="#ffb11d"/><stop offset="0.86" stop-color="#ff920e"/><stop offset="1" stop-color="#ff7600"/></linearGradient>
<linearGradient id="c367" gradientUnits="userSpaceOnUse" x1="1444" x2="1635" y1="0" y2="0"><stop offset="0" stop-color="#00ff6f"/><stop offset="0.01" stop-color="#02ff6e"/><stop offset="0.32" stop-color="#91ff58"/><stop offset="0.53" stop-color="#ffff45"/><stop offset="0.63" stop-color="#ffd330"/><stop offset="0.73" stop-color="#ffae1f"/><stop offset="0.86" stop-color="#ff8d0e"/><stop offset="1" stop-color="#ff7200"/></linearGradient>
<linearGradient id="c368" gradientUnits="userSpaceOnUse" x1="1443" x2="1639" y1="0" y2="0"><stop offset="0" stop-color="#00ff72"/><stop offset="0.01" stop-color="#01ff71"/><stop offset="0.3" stop-color="#8dff5d"/><stop offset="0.52" stop-color="#fffe48"/><stop offset="0.61" stop-color="#ffd133"/><stop offset="0.72" stop-color="#ffaa20"/><stop offset="0.85" stop-color="#ff890f"/><stop offset="1" stop-color="#ff6c00"/></linearGradient>
<linearGradient id="c369" gradientUnits="userSpaceOnUse" x1="1442" x2="1642" y1="0" y2="0"><stop offset="0" stop-color="#00ff75"/><stop offset="0.01" stop-color="#00ff74"/><stop offset="0.29" stop-color="#8dff60"/><stop offset="0.51" stop-color="#ffff4c"/><stop offset="0.6" stop-color="#ffd036"/><stop offset="0.71" stop-color="#ffa822"/><stop offset="0.84" stop-color="#ff8510"/><stop offset="1" stop-color="#ff6800"/></linearGradient>
<linearGradient id="c370" gradientUnits="userSpaceOnUse" x1="1442" x2="1645" y1="0" y2="0"><stop offset="0" stop-color="#00ff78"/><stop offset="0.01" stop-color="#02ff77"/><stop offset="0.29" stop-color="#8eff63"/><stop offset="0.49" stop-color="#fffd50"/><stop offset="0.59" stop-color="#ffcc37"/><stop offset="0.7" stop-color="#ffa423"/><stop offset="0.84" stop-color="#ff8211"/><stop offset="1" stop-color="#ff6300"/></linearGradient>
<linearGradient id="c371" gradientUnits="userSpaceOnUse" x1="1441" x2="1648" y1="0" y2="0"><stop offset="0" stop-color="#00ff7b"/><stop offset="0.01" stop-color="#01ff7a"/><stop offset="0.28" stop-color="#8eff67"/><stop offset="0.48" stop-color="#ffff54"/><stop offset="0.57" stop-color="#ffcd3b"/><stop offset="0.69" stop-color="#ffa325"/><stop offset="0.83" stop-color="#ff7e12"/><stop offset="1" stop-color="#ff5f00"/></linearGradient>
<linearGradient id="c372" gradientUnits="userSpaceOnUse" x1="1440" x2="1651" y1="0" y2="0"><stop offset="0" stop-color="#00ff7e"/><stop offset="0.01" stop-color="#00ff7d"/><stop offset="0.27" stop-color="#8cff6b"/><stop offset="0.46" stop-color="#feff59"/><stop offset="0.57" stop-color="#ffc93d"/><stop offset="0.69" stop-color="#ff9e26"/><stop offset="0.83" stop-color="#ff7a12"/><stop offset="1" stop-color="#ff5b00"/></linearGradient>
<linearGradient id="c373" gradientUnits="userSpaceOnUse" x1="1439" x2="1655" y1="0" y2="0"><stop offset="0" stop-color="#00ff81"/><stop offset="0.01" stop-color="#00ff81"/><stop offset="0.26" stop-color="#8aff6f"/><stop offset="0.45" stop-color="#fffe5c"/><stop offset="0.5" stop-color="#ffe34e"/><stop offset="0.56" stop-color="#ffc83f"/><stop offset="0.68" stop-color="#ff9b28"/><stop offset="0.82" stop-color="#ff7612"/><stop offset="1" stop-color="#ff5600"/></linearGradient>
<linearGradient id="c374" gradientUnits="userSpaceOnUse" x1="1439" x2="1658" y1="0" y2="0"><stop offset="0" stop-color="#00ff84"/><stop offset="0.01" stop-color="#02ff84"/><stop offset="0.26" stop-color="#90ff72"/><stop offset="0.44" stop-color="#feff61"/><stop offset="0.54" stop-color="#ffc642"/><stop offset="0.67" stop-color="#ff9929"/><stop offset="0.82" stop-color="#ff7213"/><stop offset="1" stop-color="#ff5300"/></linearGradient>
<linearGradient id="c375" gradientUnits="userSpaceOnUse" x1="1438" x2="1661" y1="0" y2="0"><stop offset="0" stop-color="#00ff87"/><stop offset="0.01" stop-color="#01ff87"/><stop offset="0.25" stop-color="#8bff76"/><stop offset="0.43" stop-color="#fffe65"/><stop offset="0.48" stop-color="#ffe054"/><stop offset="0.53" stop-color="#ffc545"/><stop offset="0.66" stop-color="#ff962b"/><stop offset="0.81" stop-color="#ff6f14"/><stop offset="1" stop-color="#ff4f00"/></linearGradient>
<linearGradient id="c376" gradientUnits="userSpaceOnUse" x1="1437" x2="1664" y1="0" y2="0"><stop offset="0" stop-color="#00ff8b"/><stop offset="0.01" stop-color="#00ff8a"/><stop offset="0.24" stop-color="#8bff7a"/><stop offset="0.42" stop-color="#feff69"/><stop offset="0.47" stop-color="#ffde57"/><stop offset="0.52" stop-color="#ffc348"/><stop offset="0.65" stop-color="#ff942d"/><stop offset="0.81" stop-color="#ff6c15"/><stop offset="1" stop-color="#ff4b00"/></linearGradient>
<linearGradient id="c377" gradientUnits="userSpaceOnUse" x1="1437" x2="1668" y1="0" y2="0"><stop offset="0" stop-color="#00ff8e"/><stop offset="0.01" stop-color="#02ff8d"/><stop offset="0.24" stop-color="#8fff7d"/><stop offset="0.41" stop-color="#fffe6d"/><stop offset="0.45" stop-color="#ffdf5b"/><stop offset="0.51" stop-color="#ffc24a"/><stop offset="0.57" stop-color="#ffa83b"/><stop offset="0.64" stop-color="#ff902e"/><stop offset="0.8" stop-color="#ff6815"/><stop offset="1" stop-color="#ff4700"/></linearGradient>
<linearGradient id="c378" gradientUnits="userSpaceOnUse" x1="1436" x2="1671" y1="0" y2="0"><stop offset="0" stop-color="#00ff91"/><stop offset="0.01" stop-color="#01ff91"/><stop offset="0.23" stop-color="#8fff81"/><stop offset="0.4" stop-color="#ffff72"/><stop offset="0.45" stop-color="#ffdd5e"/><stop offset="0.5" stop-color="#ffc04d"/><stop offset="0.56" stop-color="#ffa73e"/><stop offset="0.63" stop-color="#ff8f30"/><stop offset="0.8" stop-color="#ff6516"/><stop offset="1" stop-color="#ff4400"/></linearGradient>
<linearGradient id="c379" gradientUnits="userSpaceOnUse" x1="1435" x2="1674" y1="0" y2="0"><stop offset="0" stop-color="#00ff95"/><stop offset="0.01" stop-color="#00ff94"/><stop offset="0.22" stop-color="#88ff86"/><stop offset="0.39" stop-color="#fffe76"/><stop offset="0.44" stop-color="#ffdc61"/><stop offset="0.49" stop-color="#ffbe50"/><stop offset="0.56" stop-color="#ffa33f"/><stop offset="0.62" stop-color="#ff8c31"/><stop offset="0.79" stop-color="#ff6217"/><stop offset="1" stop-color="#ff4100"/></linearGradient>
<linearGradient id="c380" gradientUnits="userSpaceOnUse" x1="1434" x2="1677" y1="0" y2="0"><stop offset="0" stop-color="#00ff98"/><stop offset="0.01" stop-color="#00ff98"/><stop offset="0.21" stop-color="#88ff8a"/><stop offset="0.38" stop-color="#ffff7b"/><stop offset="0.43" stop-color="#ffdd66"/><stop offset="0.49" stop-color="#ffbd53"/><stop offset="0.55" stop-color="#ffa242"/><stop offset="0.62" stop-color="#ff8a33"/><stop offset="0.79" stop-color="#ff6018"/><stop offset="1" stop-color="#ff3d00"/></linearGradient>
<linearGradient id="c381" gradientUnits="userSpaceOnUse" x1="1434" x2="1681" y1="0" y2="0"><stop offset="0" stop-color="#00ff9c"/><stop offset="0.01" stop-color="#02ff9b"/><stop offset="0.21" stop-color="#8bff8d"/><stop offset="0.37" stop-color="#fffd7f"/><stop offset="0.42" stop-color="#ffdb69"/><stop offset="0.47" stop-color="#ffbb55"/><stop offset="0.54" stop-color="#ff9f43"/><stop offset="0.61" stop-color="#ff8734"/><stop offset="0.78" stop-color="#ff5c18"/><stop offset="1" stop-color="#ff3a00"/></linearGradient>
<linearGradient id="c382" gradientUnits="userSpaceOnUse" x1="1433" x2="1684" y1="0" y2="0"><stop offset="0" stop-color="#00ff9f"/><stop offset="0.01" stop-color="#01ff9f"/><stop offset="0.21" stop-color="#8cff91"/><stop offset="0.36" stop-color="#ffff84"/><stop offset="0.41" stop-color="#ffd96c"/><stop offset="0.47" stop-color="#ffba58"/><stop offset="0.53" stop-color="#ff9d46"/><stop offset="0.6" stop-color="#ff8435"/><stop offset="0.69" stop-color="#ff6d26"/><stop offset="0.78" stop-color="#ff5919"/><stop offset="1" stop-color="#ff3700"/></linearGradient>
<linearGradient id="c383" gradientUnits="userSpaceOnUse" x1="1432" x2="1687" y1="0" y2="0"><stop offset="0" stop-color="#00ffa3"/><stop offset="0.01" stop-color="#00ffa3"/><stop offset="0.19" stop-color="#84ff97"/><stop offset="0.35" stop-color="#fffd88"/><stop offset="0.4" stop-color="#ffd76f"/><stop offset="0.46" stop-color="#ffb85b"/><stop offset="0.52" stop-color="#ff9c48"/><stop offset="0.6" stop-color="#ff8237"/><stop offset="0.68" stop-color="#ff6b27"/><stop offset="0.77" stop-color="#ff5719"/><stop offset="1" stop-color="#ff3400"/></linearGradient>
<linearGradient id="c384" gradientUnits="userSpaceOnUse" x1="1432" x2="1690" y1="0" y2="0"><stop offset="0" stop-color="#00ffa7"/><stop offset="0.01" stop-color="#02ffa6"/><stop offset="0.2" stop-color="#90ff9a"/><stop offset="0.34" stop-color="#fffe8e"/><stop offset="0.39" stop-color="#ffd874"/><stop offset="0.45" stop-color="#ffb85f"/><stop offset="0.51" stop-color="#ff9a4b"/><stop offset="0.59" stop-color="#ff8039"/><stop offset="0.67" stop-color="#ff6929"/><stop offset="0.77" stop-color="#ff541a"/><stop offset="1" stop-color="#ff3100"/></linearGradient>
<linearGradient id="c385" gradientUnits="userSpaceOnUse" x1="1431" x2="1693" y1="0" y2="0"><stop offset="0" stop-color="#00ffaa"/><stop offset="0.01" stop-color="#01ffaa"/><stop offset="0.19" stop-color="#8dff9e"/><stop offset="0.33" stop-color="#feff93"/><stop offset="0.39" stop-color="#ffd677"/><stop offset="0.44" stop-color="#ffb762"/><stop offset="0.5" stop-color="#ff994d"/><stop offset="0.58" stop-color="#ff7e3a"/><stop offset="0.66" stop-color="#ff662a"/><stop offset="0.76" stop-color="#ff511b"/><stop offset="1" stop-color="#ff2e00"/></linearGradient>
<linearGradient id="c386" gradientUnits="userSpaceOnUse" x1="1430" x2="1697" y1="0" y2="0"><stop offset="0" stop-color="#00ffae"/><stop offset="0.01" stop-color="#00ffae"/><stop offset="0.18" stop-color="#88ffa3"/><stop offset="0.33" stop-color="#fffe97"/><stop offset="0.37" stop-color="#ffd77c"/><stop offset="0.43" stop-color="#ffb564"/><stop offset="0.5" stop-color="#ff964e"/><stop offset="0.57" stop-color="#ff7b3c"/><stop offset="0.66" stop-color="#ff632b"/><stop offset="0.76" stop-color="#ff4f1b"/><stop offset="1" stop-color="#ff2b00"/></linearGradient>
<linearGradient id="c387" gradientUnits="userSpaceOnUse" x1="1429" x2="1700" y1="0" y2="0"><stop offset="0" stop-color="#00ffb2"/><stop offset="0.01" stop-color="#00ffb2"/><stop offset="0.18" stop-color="#86ffa8"/><stop offset="0.32" stop-color="#ffff9d"/><stop offset="0.37" stop-color="#ffd67f"/><stop offset="0.42" stop-color="#ffb367"/><stop offset="0.49" stop-color="#ff9451"/><stop offset="0.56" stop-color="#ff7a3e"/><stop offset="0.65" stop-color="#ff612c"/><stop offset="0.75" stop-color="#ff4c1c"/><stop offset="1" stop-color="#ff2800"/></linearGradient>
<linearGradient id="c388" gradientUnits="userSpaceOnUse" x1="1429" x2="1703" y1="0" y2="0"><stop offset="0" stop-color="#00ffb6"/><stop offset="0.01" stop-color="#02ffb6"/><stop offset="0.18" stop-color="#89ffac"/><stop offset="0.31" stop-color="#fffea1"/><stop offset="0.36" stop-color="#ffd685"/><stop offset="0.42" stop-color="#ffb26a"/><stop offset="0.48" stop-color="#ff9353"/><stop offset="0.56" stop-color="#ff773f"/><stop offset="0.65" stop-color="#ff5f2d"/><stop offset="0.75" stop-color="#ff491d"/><stop offset="1" stop-color="#ff2500"/></linearGradient>
<linearGradient id="c389" gradientUnits="userSpaceOnUse" x1="1428" x2="1706" y1="0" y2="0"><stop offset="0" stop-color="#00ffba"/><stop offset="0.01" stop-color="#01ffba"/><stop offset="0.17" stop-color="#8affb1"/><stop offset="0.3" stop-color="#ffffa7"/><stop offset="0.35" stop-color="#ffd588"/><stop offset="0.41" stop-color="#ffb06d"/><stop offset="0.47" stop-color="#ff9156"/><stop offset="0.55" stop-color="#ff7641"/><stop offset="0.64" stop-color="#ff5d2e"/><stop offset="0.74" stop-color="#ff481e"/><stop offset="1" stop-color="#ff2300"/></linearGradient>
<linearGradient id="c390" gradientUnits="userSpaceOnUse" x1="1427" x2="1710" y1="0" y2="0"><stop offset="0" stop-color="#00ffbe"/><stop offset="0.01" stop-color="#00ffbe"/><stop offset="0.16" stop-color="#81ffb6"/><stop offset="0.3" stop-color="#fffdab"/><stop offset="0.35" stop-color="#ffd38b"/><stop offset="0.4" stop-color="#ffae70"/><stop offset="0.47" stop-color="#ff8e57"/><stop offset="0.55" stop-color="#ff7241"/><stop offset="0.64" stop-color="#ff5a2f"/><stop offset="0.74" stop-color="#ff441e"/><stop offset="1" stop-color="#ff2000"/></linearGradient>
<linearGradient id="c391" gradientUnits="userSpaceOnUse" x1="1427" x2="1713" y1="0" y2="0"><stop offset="0" stop-color="#00ffc2"/><stop offset="0.01" stop-color="#02ffc2"/><stop offset="0.17" stop-color="#8effba"/><stop offset="0.29" stop-color="#ffffb2"/><stop offset="0.34" stop-color="#ffd390"/><stop offset="0.4" stop-color="#ffad72"/><stop offset="0.46" stop-color="#ff8c59"/><stop offset="0.54" stop-color="#ff7044"/><stop offset="0.63" stop-color="#ff5830"/><stop offset="0.73" stop-color="#ff421f"/><stop offset="1" stop-color="#ff1d00"/></linearGradient>
<linearGradient id="c392" gradientUnits="userSpaceOnUse" x1="1426" x2="1716" y1="0" y2="0"><stop offset="0" stop-color="#00ffc7"/><stop offset="0.01" stop-color="#01ffc6"/><stop offset="0.16" stop-color="#85ffbf"/><stop offset="0.28" stop-color="#fffdb6"/><stop offset="0.33" stop-color="#ffd294"/><stop offset="0.39" stop-color="#ffab75"/><stop offset="0.46" stop-color="#ff8b5c"/><stop offset="0.53" stop-color="#ff6e45"/><stop offset="0.62" stop-color="#ff5531"/><stop offset="0.73" stop-color="#ff3f1f"/><stop offset="1" stop-color="#ff1b00"/></linearGradient>
<linearGradient id="c393" gradientUnits="userSpaceOnUse" x1="1425" x2="1719" y1="0" y2="0"><stop offset="0" stop-color="#00ffcb"/><stop offset="0.01" stop-color="#00ffcb"/><stop offset="0.15" stop-color="#86ffc4"/><stop offset="0.28" stop-color="#fffebd"/><stop offset="0.32" stop-color="#ffd299"/><stop offset="0.38" stop-color="#ffab7a"/><stop offset="0.45" stop-color="#ff895e"/><stop offset="0.53" stop-color="#ff6c47"/><stop offset="0.62" stop-color="#ff5332"/><stop offset="0.73" stop-color="#ff3d20"/><stop offset="1" stop-color="#ff1800"/></linearGradient>
<linearGradient id="c394" gradientUnits="userSpaceOnUse" x1="1424" x2="1722" y1="0" y2="0"><stop offset="0" stop-color="#00ffd0"/><stop offset="0.01" stop-color="#03ffcf"/><stop offset="0.14" stop-color="#7dffca"/><stop offset="0.21" stop-color="#beffc6"/><stop offset="0.27" stop-color="#feffc3"/><stop offset="0.27" stop-color="#fffcc1"/><stop offset="0.32" stop-color="#ffce9a"/><stop offset="0.38" stop-color="#ffa77b"/><stop offset="0.45" stop-color="#ff865f"/><stop offset="0.52" stop-color="#ff6a48"/><stop offset="0.62" stop-color="#ff5033"/><stop offset="0.72" stop-color="#ff3b20"/><stop offset="1" stop-color="#ff1600"/></linearGradient>
<linearGradient id="c395" gradientUnits="userSpaceOnUse" x1="1424" x2="1726" y1="0" y2="0"><stop offset="0" stop-color="#00ffd4"/><stop offset="0.01" stop-color="#02ffd4"/><stop offset="0.15" stop-color="#8affce"/><stop offset="0.26" stop-color="#fffec8"/><stop offset="0.31" stop-color="#ffcfa0"/><stop offset="0.37" stop-color="#ffa87f"/><stop offset="0.43" stop-color="#ff8663"/><stop offset="0.51" stop-color="#ff694a"/><stop offset="0.61" stop-color="#ff4f35"/><stop offset="0.72" stop-color="#ff3922"/><stop offset="0.84" stop-color="#ff2510"/><stop offset="1" stop-color="#ff1300"/></linearGradient>
<linearGradient id="c396" gradientUnits="userSpaceOnUse" x1="1423" x2="1729" y1="0" y2="0"><stop offset="0" stop-color="#00ffd9"/><stop offset="0.01" stop-color="#00ffd8"/><stop offset="0.14" stop-color="#87ffd3"/><stop offset="0.25" stop-color="#feffce"/><stop offset="0.3" stop-color="#ffcfa6"/><stop offset="0.36" stop-color="#ffa884"/><stop offset="0.43" stop-color="#ff8466"/><stop offset="0.51" stop-color="#ff674c"/><stop offset="0.6" stop-color="#ff4d36"/><stop offset="0.71" stop-color="#ff3722"/><stop offset="0.84" stop-color="#ff2311"/><stop offset="1" stop-color="#ff1100"/></linearGradient>
<linearGradient id="c397" gradientUnits="userSpaceOnUse" x1="1422" x2="1732" y1="0" y2="0"><stop offset="0" stop-color="#00ffdd"/><stop offset="0.01" stop-color="#00ffdd"/><stop offset="0.14" stop-color="#81ffd9"/><stop offset="0.25" stop-color="#fffed3"/><stop offset="0.3" stop-color="#ffcda9"/><stop offset="0.35" stop-color="#ffa687"/><stop offset="0.42" stop-color="#ff8368"/><stop offset="0.5" stop-color="#ff654d"/><stop offset="0.6" stop-color="#ff4b37"/><stop offset="0.71" stop-color="#ff3423"/><stop offset="0.84" stop-color="#ff2111"/><stop offset="1" stop-color="#ff0f00"/></linearGradient>
<linearGradient id="c398" gradientUnits="userSpaceOnUse" x1="1422" x2="1735" y1="0" y2="0"><stop offset="0" stop-color="#00ffe2"/><stop offset="0.01" stop-color="#02ffe2"/><stop offset="0.14" stop-color="#8fffde"/><stop offset="0.24" stop-color="#ffffda"/><stop offset="0.29" stop-color="#ffceaf"/><stop offset="0.35" stop-color="#ffa48a"/><stop offset="0.42" stop-color="#ff816a"/><stop offset="0.5" stop-color="#ff634f"/><stop offset="0.59" stop-color="#ff4938"/><stop offset="0.7" stop-color="#ff3324"/><stop offset="0.84" stop-color="#ff1f11"/><stop offset="1" stop-color="#ff0c00"/></linearGradient>
<linearGradient id="c399" gradientUnits="userSpaceOnUse" x1="1421" x2="1739" y1="0" y2="0"><stop offset="0" stop-color="#00ffe7"/><stop offset="0.01" stop-color="#01ffe7"/><stop offset="0.13" stop-color="#86ffe4"/><stop offset="0.24" stop-color="#fffddf"/><stop offset="0.29" stop-color="#ffccb3"/><stop offset="0.34" stop-color="#ffa28d"/><stop offset="0.41" stop-color="#ff806d"/><stop offset="0.49" stop-color="#ff6151"/><stop offset="0.58" stop-color="#ff4739"/><stop offset="0.7" stop-color="#ff3024"/><stop offset="0.83" stop-color="#ff1c12"/><stop offset="1" stop-color="#ff0a00"/></linearGradient>
<linearGradient id="c400" gradientUnits="userSpaceOnUse" x1="1420" x2="1742" y1="0" y2="0"><stop offset="0" stop-color="#00ffec"/><stop offset="0.01" stop-color="#00ffec"/><stop offset="0.13" stop-color="#86ffe9"/><stop offset="0.23" stop-color="#ffffe7"/><stop offset="0.28" stop-color="#ffcdb9"/><stop offset="0.34" stop-color="#ffa391"/><stop offset="0.4" stop-color="#ff7e6f"/><stop offset="0.48" stop-color="#ff5f53"/><stop offset="0.58" stop-color="#ff453a"/><stop offset="0.69" stop-color="#ff2f25"/><stop offset="0.83" stop-color="#ff1b12"/><stop offset="1" stop-color="#ff0700"/></linearGradient>
<linearGradient id="c401" gradientUnits="userSpaceOnUse" x1="1419" x2="1745" y1="0" y2="0"><stop offset="0" stop-color="#00fff1"/><stop offset="0.01" stop-color="#03fff1"/><stop offset="0.12" stop-color="#79ffef"/><stop offset="0.23" stop-color="#fffdeb"/><stop offset="0.28" stop-color="#ffcbbc"/><stop offset="0.33" stop-color="#ff9f92"/><stop offset="0.4" stop-color="#ff7b70"/><stop offset="0.48" stop-color="#ff5d54"/><stop offset="0.58" stop-color="#ff433b"/><stop offset="0.69" stop-color="#ff2c26"/><stop offset="0.83" stop-color="#ff1913"/><stop offset="1" stop-color="#ff0500"/></linearGradient>
<linearGradient id="c402" gradientUnits="userSpaceOnUse" x1="1419" x2="1748" y1="0" y2="0"><stop offset="0" stop-color="#00fff6"/><stop offset="0.01" stop-color="#02fff6"/><stop offset="0.13" stop-color="#8bfff5"/><stop offset="0.22" stop-color="#fffff4"/><stop offset="0.27" stop-color="#ffccc3"/><stop offset="0.33" stop-color="#ff9f97"/><stop offset="0.39" stop-color="#ff7b74"/><stop offset="0.47" stop-color="#ff5b56"/><stop offset="0.57" stop-color="#ff413d"/><stop offset="0.68" stop-color="#ff2b27"/><stop offset="0.82" stop-color="#ff1714"/><stop offset="1" stop-color="#ff0300"/></linearGradient>
<linearGradient id="c403" gradientUnits="userSpaceOnUse" x1="1418" x2="1751" y1="0" y2="0"><stop offset="0" stop-color="#00fffb"/><stop offset="0.01" stop-color="#00fffb"/><stop offset="0.11" stop-color="#7efffb"/><stop offset="0.17" stop-color="#bffffb"/><stop offset="0.22" stop-color="#fefffb"/><stop offset="0.22" stop-color="#fffcf8"/><stop offset="0.26" stop-color="#ffcac6"/><stop offset="0.32" stop-color="#ff9d9a"/><stop offset="0.39" stop-color="#ff7977"/><stop offset="0.47" stop-color="#ff5a58"/><stop offset="0.56" stop-color="#ff3f3e"/><stop offset="0.68" stop-color="#ff2827"/><stop offset="0.82" stop-color="#ff1514"/><stop offset="1" stop-color="#ff0000"/></linearGradient>
<linearGradient id="c404" gradientUnits="userSpaceOnUse" x1="1417" x2="1750" y1="0" y2="0"><stop offset="0" stop-color="#00fdff"/><stop offset="0.01" stop-color="#00fdff"/><stop offset="0.11" stop-color="#7dfdff"/><stop offset="0.22" stop-color="#fffafd"/><stop offset="0.26" stop-color="#ffc8ca"/><stop offset="0.32" stop-color="#ff9b9d"/><stop offset="0.39" stop-color="#ff7779"/><stop offset="0.47" stop-color="#ff585a"/><stop offset="0.56" stop-color="#ff3e40"/><stop offset="0.68" stop-color="#ff2729"/><stop offset="0.83" stop-color="#ff1314"/><stop offset="1" stop-color="#ff0001"/></linearGradient>
<linearGradient id="c405" gradientUnits="userSpaceOnUse" x1="1417" x2="1745" y1="0" y2="0"><stop offset="0" stop-color="#00f8ff"/><stop offset="0.01" stop-color="#02f8ff"/><stop offset="0.12" stop-color="#89f7ff"/><stop offset="0.22" stop-color="#fff4fd"/><stop offset="0.27" stop-color="#ffc3cb"/><stop offset="0.33" stop-color="#ff979e"/><stop offset="0.39" stop-color="#ff747a"/><stop offset="0.47" stop-color="#ff575c"/><stop offset="0.57" stop-color="#ff3d42"/><stop offset="0.68" stop-color="#ff272b"/><stop offset="0.83" stop-color="#ff1317"/><stop offset="1" stop-color="#ff0003"/></linearGradient>
<linearGradient id="c406" gradientUnits="userSpaceOnUse" x1="1416" x2="1741" y1="0" y2="0"><stop offset="0" stop-color="#00f3ff"/><stop offset="0.01" stop-color="#01f3ff"/><stop offset="0.13" stop-color="#86f1ff"/><stop offset="0.23" stop-color="#ffeefe"/><stop offset="0.27" stop-color="#ffbecc"/><stop offset="0.33" stop-color="#ff949f"/><stop offset="0.4" stop-color="#ff717b"/><stop offset="0.48" stop-color="#ff545d"/><stop offset="0.58" stop-color="#ff3b43"/><stop offset="0.69" stop-color="#ff262d"/><stop offset="0.82" stop-color="#ff1319"/><stop offset="1" stop-color="#ff0006"/></linearGradient>
<linearGradient id="c407" gradientUnits="userSpaceOnUse" x1="1415" x2="1736" y1="0" y2="0"><stop offset="0" stop-color="#00eeff"/><stop offset="0.01" stop-color="#00eeff"/><stop offset="0.13" stop-color="#83ebff"/><stop offset="0.23" stop-color="#ffe8fe"/><stop offset="0.28" stop-color="#ffb9cc"/><stop offset="0.34" stop-color="#ff92a2"/><stop offset="0.4" stop-color="#ff6f7e"/><stop offset="0.49" stop-color="#ff535f"/><stop offset="0.58" stop-color="#ff3a45"/><stop offset="0.69" stop-color="#ff252f"/><stop offset="0.83" stop-color="#ff121b"/><stop offset="1" stop-color="#ff0008"/></linearGradient>
<linearGradient id="c408" gradientUnits="userSpaceOnUse" x1="1415" x2="1731" y1="0" y2="0"><stop offset="0" stop-color="#00e9ff"/><stop offset="0.01" stop-color="#03e9ff"/><stop offset="0.14" stop-color="#8ee5ff"/><stop offset="0.24" stop-color="#ffe2ff"/><stop offset="0.28" stop-color="#ffb4cd"/><stop offset="0.34" stop-color="#ff8ea3"/><stop offset="0.41" stop-color="#ff6e80"/><stop offset="0.49" stop-color="#ff5161"/><stop offset="0.59" stop-color="#ff3947"/><stop offset="0.7" stop-color="#ff2431"/><stop offset="0.83" stop-color="#ff121d"/><stop offset="1" stop-color="#ff000b"/></linearGradient>
<linearGradient id="c409" gradientUnits="userSpaceOnUse" x1="1414" x2="1727" y1="0" y2="0"><stop offset="0" stop-color="#00e4ff"/><stop offset="0.01" stop-color="#02e4ff"/><stop offset="0.14" stop-color="#8ce0ff"/><stop offset="0.24" stop-color="#ffdcff"/><stop offset="0.29" stop-color="#ffb0ce"/><stop offset="0.35" stop-color="#ff8aa4"/><stop offset="0.42" stop-color="#ff6b81"/><stop offset="0.5" stop-color="#ff5063"/><stop offset="0.59" stop-color="#ff3849"/><stop offset="0.7" stop-color="#ff2433"/><stop offset="0.84" stop-color="#ff111f"/><stop offset="1" stop-color="#ff000d"/></linearGradient>
<linearGradient id="c410" gradientUnits="userSpaceOnUse" x1="1413" x2="1722" y1="0" y2="0"><stop offset="0" stop-color="#00dfff"/><stop offset="0.01" stop-color="#00dfff"/><stop offset="0.14" stop-color="#89daff"/><stop offset="0.25" stop-color="#fed6ff"/><stop offset="0.3" stop-color="#ffabcf"/><stop offset="0.36" stop-color="#ff86a5"/><stop offset="0.42" stop-color="#ff6882"/><stop offset="0.5" stop-color="#ff4e65"/><stop offset="0.6" stop-color="#ff374c"/><stop offset="0.71" stop-color="#ff2335"/><stop offset="0.84" stop-color="#ff1121"/><stop offset="1" stop-color="#ff000f"/></linearGradient>
<linearGradient id="c411" gradientUnits="userSpaceOnUse" x1="1412" x2="1717" y1="0" y2="0"><stop offset="0" stop-color="#00daff"/><stop offset="0.01" stop-color="#00daff"/><stop offset="0.13" stop-color="#7dd5ff"/><stop offset="0.2" stop-color="#bdd2ff"/><stop offset="0.26" stop-color="#fed0ff"/><stop offset="0.26" stop-color="#ffcdfc"/><stop offset="0.31" stop-color="#ffa4cd"/><stop offset="0.36" stop-color="#ff83a6"/><stop offset="0.43" stop-color="#ff6583"/><stop offset="0.51" stop-color="#ff4c66"/><stop offset="0.6" stop-color="#ff364d"/><stop offset="0.71" stop-color="#ff2237"/><stop offset="0.85" stop-color="#ff1023"/><stop offset="1" stop-color="#ff0012"/></linearGradient>
<linearGradient id="c412" gradientUnits="userSpaceOnUse" x1="1412" x2="1713" y1="0" y2="0"><stop offset="0" stop-color="#00d6ff"/><stop offset="0.01" stop-color="#02d5ff"/><stop offset="0.15" stop-color="#88d0ff"/><stop offset="0.26" stop-color="#ffc8fd"/><stop offset="0.31" stop-color="#ffa0ce"/><stop offset="0.37" stop-color="#ff7fa7"/><stop offset="0.44" stop-color="#ff6386"/><stop offset="0.51" stop-color="#ff4a68"/><stop offset="0.61" stop-color="#ff344f"/><stop offset="0.72" stop-color="#ff2139"/><stop offset="0.85" stop-color="#ff1025"/><stop offset="1" stop-color="#ff0014"/></linearGradient>
<linearGradient id="c413" gradientUnits="userSpaceOnUse" x1="1411" x2="1708" y1="0" y2="0"><stop offset="0" stop-color="#00d1ff"/><stop offset="0.01" stop-color="#01d1ff"/><stop offset="0.15" stop-color="#85caff"/><stop offset="0.27" stop-color="#ffc2fd"/><stop offset="0.32" stop-color="#ff9ed1"/><stop offset="0.37" stop-color="#ff7daa"/><stop offset="0.44" stop-color="#ff6188"/><stop offset="0.52" stop-color="#ff486a"/><stop offset="0.62" stop-color="#ff3351"/><stop offset="0.72" stop-color="#ff203b"/><stop offset="1" stop-color="#ff0016"/></linearGradient>
<linearGradient id="c414" gradientUnits="userSpaceOnUse" x1="1410" x2="1703" y1="0" y2="0"><stop offset="0" stop-color="#00cdff"/><stop offset="0.01" stop-color="#00ccff"/><stop offset="0.15" stop-color="#83c6ff"/><stop offset="0.28" stop-color="#ffbdfe"/><stop offset="0.32" stop-color="#ff99d2"/><stop offset="0.38" stop-color="#ff7aab"/><stop offset="0.45" stop-color="#ff5e89"/><stop offset="0.53" stop-color="#ff476c"/><stop offset="0.62" stop-color="#ff3253"/><stop offset="0.73" stop-color="#ff203e"/><stop offset="1" stop-color="#ff0019"/></linearGradient>
<linearGradient id="c415" gradientUnits="userSpaceOnUse" x1="1410" x2="1699" y1="0" y2="0"><stop offset="0" stop-color="#00c8ff"/><stop offset="0.01" stop-color="#03c8ff"/><stop offset="0.16" stop-color="#8dc0ff"/><stop offset="0.28" stop-color="#ffb8fe"/><stop offset="0.33" stop-color="#ff95d3"/><stop offset="0.39" stop-color="#ff76ac"/><stop offset="0.45" stop-color="#ff5c8b"/><stop offset="0.53" stop-color="#ff456e"/><stop offset="0.62" stop-color="#ff3156"/><stop offset="0.73" stop-color="#ff1f40"/><stop offset="1" stop-color="#ff001b"/></linearGradient>
<linearGradient id="c416" gradientUnits="userSpaceOnUse" x1="1409" x2="1694" y1="0" y2="0"><stop offset="0" stop-color="#00c4ff"/><stop offset="0.01" stop-color="#01c4ff"/><stop offset="0.16" stop-color="#8bbbff"/><stop offset="0.29" stop-color="#ffb3ff"/><stop offset="0.34" stop-color="#ff91d3"/><stop offset="0.4" stop-color="#ff73ad"/><stop offset="0.46" stop-color="#ff5a8c"/><stop offset="0.54" stop-color="#ff4470"/><stop offset="0.63" stop-color="#ff3058"/><stop offset="0.74" stop-color="#ff1e42"/><stop offset="1" stop-color="#ff001e"/></linearGradient>
<linearGradient id="c417" gradientUnits="userSpaceOnUse" x1="1408" x2="1689" y1="0" y2="0"><stop offset="0" stop-color="#00c0ff"/><stop offset="0.01" stop-color="#00bfff"/><stop offset="0.17" stop-color="#8cb6ff"/><stop offset="0.3" stop-color="#ffadff"/><stop offset="0.35" stop-color="#ff8dd4"/><stop offset="0.4" stop-color="#ff71af"/><stop offset="0.47" stop-color="#ff588f"/><stop offset="0.54" stop-color="#ff4374"/><stop offset="0.63" stop-color="#ff305b"/><stop offset="0.74" stop-color="#ff1f46"/><stop offset="1" stop-color="#ff0021"/></linearGradient>
<linearGradient id="c418" gradientUnits="userSpaceOnUse" x1="1407" x2="1685" y1="0" y2="0"><stop offset="0" stop-color="#00bcff"/><stop offset="0.01" stop-color="#00bbff"/><stop offset="0.17" stop-color="#86b2ff"/><stop offset="0.3" stop-color="#ffa8ff"/><stop offset="0.35" stop-color="#ff89d5"/><stop offset="0.41" stop-color="#ff6db0"/><stop offset="0.48" stop-color="#ff5590"/><stop offset="0.55" stop-color="#ff4075"/><stop offset="0.64" stop-color="#ff2e5c"/><stop offset="0.74" stop-color="#ff1d47"/><stop offset="1" stop-color="#ff0023"/></linearGradient>
<linearGradient id="c419" gradientUnits="userSpaceOnUse" x1="1407" x2="1680" y1="0" y2="0"><stop offset="0" stop-color="#00b7ff"/><stop offset="0.01" stop-color="#02b7ff"/><stop offset="0.18" stop-color="#90acff"/><stop offset="0.31" stop-color="#fea3ff"/><stop offset="0.36" stop-color="#ff84d5"/><stop offset="0.42" stop-color="#ff6ab1"/><stop offset="0.48" stop-color="#ff5392"/><stop offset="0.56" stop-color="#ff4078"/><stop offset="0.64" stop-color="#ff2d60"/><stop offset="0.75" stop-color="#ff1d4a"/><stop offset="1" stop-color="#ff0026"/></linearGradient>
<linearGradient id="c420" gradientUnits="userSpaceOnUse" x1="1406" x2="1676" y1="0" y2="0"><stop offset="0" stop-color="#00b4ff"/><stop offset="0.01" stop-color="#01b3ff"/><stop offset="0.17" stop-color="#85a9ff"/><stop offset="0.32" stop-color="#ff9cfd"/><stop offset="0.37" stop-color="#ff80d6"/><stop offset="0.43" stop-color="#ff66b2"/><stop offset="0.49" stop-color="#ff5093"/><stop offset="0.57" stop-color="#ff3d79"/><stop offset="0.65" stop-color="#ff2c61"/><stop offset="0.75" stop-color="#ff1c4c"/><stop offset="1" stop-color="#ff0028"/></linearGradient>
<linearGradient id="c421" gradientUnits="userSpaceOnUse" x1="1405" x2="1671" y1="0" y2="0"><stop offset="0" stop-color="#00b0ff"/><stop offset="0.01" stop-color="#00afff"/><stop offset="0.18" stop-color="#83a5ff"/><stop offset="0.33" stop-color="#ff97fd"/><stop offset="0.38" stop-color="#ff7cd7"/><stop offset="0.43" stop-color="#ff64b5"/><stop offset="0.5" stop-color="#ff4e95"/><stop offset="0.58" stop-color="#ff3b7b"/><stop offset="0.66" stop-color="#ff2a63"/><stop offset="0.76" stop-color="#ff1b4f"/><stop offset="1" stop-color="#ff002b"/></linearGradient>
<linearGradient id="c422" gradientUnits="userSpaceOnUse" x1="1405" x2="1666" y1="0" y2="0"><stop offset="0" stop-color="#00acff"/><stop offset="0.01" stop-color="#02abff"/><stop offset="0.19" stop-color="#8c9fff"/><stop offset="0.33" stop-color="#ff93fe"/><stop offset="0.38" stop-color="#ff78d7"/><stop offset="0.44" stop-color="#ff61b5"/><stop offset="0.51" stop-color="#ff4c98"/><stop offset="0.58" stop-color="#ff3b7e"/><stop offset="0.66" stop-color="#ff2a67"/><stop offset="0.76" stop-color="#ff1b52"/><stop offset="1" stop-color="#ff002e"/></linearGradient>
<linearGradient id="c423" gradientUnits="userSpaceOnUse" x1="1404" x2="1662" y1="0" y2="0"><stop offset="0" stop-color="#00a8ff"/><stop offset="0.01" stop-color="#01a7ff"/><stop offset="0.2" stop-color="#8d9bff"/><stop offset="0.34" stop-color="#ff8efe"/><stop offset="0.39" stop-color="#ff74d8"/><stop offset="0.45" stop-color="#ff5fb8"/><stop offset="0.51" stop-color="#ff4b9a"/><stop offset="0.59" stop-color="#ff3980"/><stop offset="0.67" stop-color="#ff2969"/><stop offset="0.77" stop-color="#ff1a54"/><stop offset="1" stop-color="#ff0031"/></linearGradient>
<linearGradient id="c424" gradientUnits="userSpaceOnUse" x1="1403" x2="1657" y1="0" y2="0"><stop offset="0" stop-color="#00a4ff"/><stop offset="0.01" stop-color="#00a4ff"/><stop offset="0.2" stop-color="#8b97ff"/><stop offset="0.35" stop-color="#ff89ff"/><stop offset="0.4" stop-color="#ff71d9"/><stop offset="0.46" stop-color="#ff5cb9"/><stop offset="0.52" stop-color="#ff499d"/><stop offset="0.59" stop-color="#ff3782"/><stop offset="0.68" stop-color="#ff286b"/><stop offset="0.77" stop-color="#ff1957"/><stop offset="1" stop-color="#ff0034"/></linearGradient>
<linearGradient id="c425" gradientUnits="userSpaceOnUse" x1="1402" x2="1652" y1="0" y2="0"><stop offset="0" stop-color="#00a1ff"/><stop offset="0.01" stop-color="#00a0ff"/><stop offset="0.2" stop-color="#8893ff"/><stop offset="0.36" stop-color="#ff85ff"/><stop offset="0.41" stop-color="#ff6edc"/><stop offset="0.46" stop-color="#ff5abc"/><stop offset="0.53" stop-color="#ff479f"/><stop offset="0.6" stop-color="#ff3686"/><stop offset="0.68" stop-color="#ff276e"/><stop offset="0.78" stop-color="#ff195a"/><stop offset="1" stop-color="#ff0037"/></linearGradient>
<linearGradient id="c426" gradientUnits="userSpaceOnUse" x1="1402" x2="1648" y1="0" y2="0"><stop offset="0" stop-color="#009dff"/><stop offset="0.01" stop-color="#029cff"/><stop offset="0.22" stop-color="#8f8eff"/><stop offset="0.37" stop-color="#ff80ff"/><stop offset="0.41" stop-color="#ff6bdc"/><stop offset="0.47" stop-color="#ff56bd"/><stop offset="0.53" stop-color="#ff45a1"/><stop offset="0.61" stop-color="#ff3488"/><stop offset="0.69" stop-color="#ff2671"/><stop offset="0.78" stop-color="#ff185d"/><stop offset="1" stop-color="#ff003a"/></linearGradient>
<linearGradient id="c427" gradientUnits="userSpaceOnUse" x1="1401" x2="1643" y1="0" y2="0"><stop offset="0" stop-color="#0099ff"/><stop offset="0.01" stop-color="#0199ff"/><stop offset="0.22" stop-color="#8d8aff"/><stop offset="0.38" stop-color="#fe7cff"/><stop offset="0.43" stop-color="#ff65db"/><stop offset="0.48" stop-color="#ff53bd"/><stop offset="0.55" stop-color="#ff42a2"/><stop offset="0.62" stop-color="#ff338a"/><stop offset="0.79" stop-color="#ff1760"/><stop offset="1" stop-color="#ff003e"/></linearGradient>
<linearGradient id="c428" gradientUnits="userSpaceOnUse" x1="1400" x2="1638" y1="0" y2="0"><stop offset="0" stop-color="#0096ff"/><stop offset="0.01" stop-color="#0095ff"/><stop offset="0.22" stop-color="#8b86ff"/><stop offset="0.39" stop-color="#fe77ff"/><stop offset="0.44" stop-color="#ff61db"/><stop offset="0.5" stop-color="#ff50be"/><stop offset="0.56" stop-color="#ff3fa3"/><stop offset="0.63" stop-color="#ff318c"/><stop offset="0.79" stop-color="#ff1763"/><stop offset="1" stop-color="#ff0041"/></linearGradient>
<linearGradient id="c429" gradientUnits="userSpaceOnUse" x1="1400" x2="1634" y1="0" y2="0"><stop offset="0" stop-color="#0092ff"/><stop offset="0.01" stop-color="#0292ff"/><stop offset="0.23" stop-color="#8e82ff"/><stop offset="0.4" stop-color="#ff72fd"/><stop offset="0.44" stop-color="#ff5fde"/><stop offset="0.5" stop-color="#ff4ec1"/><stop offset="0.56" stop-color="#ff3da5"/><stop offset="0.63" stop-color="#ff2f8e"/><stop offset="0.79" stop-color="#ff1666"/><stop offset="1" stop-color="#ff0044"/></linearGradient>
<linearGradient id="c430" gradientUnits="userSpaceOnUse" x1="1399" x2="1629" y1="0" y2="0"><stop offset="0" stop-color="#008fff"/><stop offset="0.01" stop-color="#018eff"/><stop offset="0.23" stop-color="#8c7eff"/><stop offset="0.41" stop-color="#ff6dfe"/><stop offset="0.46" stop-color="#ff5bdf"/><stop offset="0.51" stop-color="#ff4ac1"/><stop offset="0.64" stop-color="#ff2e92"/><stop offset="0.8" stop-color="#ff1569"/><stop offset="1" stop-color="#ff0048"/></linearGradient>
<linearGradient id="c431" gradientUnits="userSpaceOnUse" x1="1398" x2="1624" y1="0" y2="0"><stop offset="0" stop-color="#008cff"/><stop offset="0.01" stop-color="#008bff"/><stop offset="0.24" stop-color="#8a7aff"/><stop offset="0.42" stop-color="#ff69fe"/><stop offset="0.47" stop-color="#ff58df"/><stop offset="0.52" stop-color="#ff48c4"/><stop offset="0.65" stop-color="#ff2c94"/><stop offset="0.81" stop-color="#ff156d"/><stop offset="1" stop-color="#ff004c"/></linearGradient>
<linearGradient id="c432" gradientUnits="userSpaceOnUse" x1="1397" x2="1620" y1="0" y2="0"><stop offset="0" stop-color="#0088ff"/><stop offset="0.01" stop-color="#0088ff"/><stop offset="0.24" stop-color="#8877ff"/><stop offset="0.43" stop-color="#ff65fe"/><stop offset="0.48" stop-color="#ff54e0"/><stop offset="0.53" stop-color="#ff45c5"/><stop offset="0.66" stop-color="#ff2a96"/><stop offset="0.81" stop-color="#ff146f"/><stop offset="1" stop-color="#ff004f"/></linearGradient>
<linearGradient id="c433" gradientUnits="userSpaceOnUse" x1="1397" x2="1615" y1="0" y2="0"><stop offset="0" stop-color="#0085ff"/><stop offset="0.01" stop-color="#0284ff"/><stop offset="0.26" stop-color="#9072ff"/><stop offset="0.44" stop-color="#ff61ff"/><stop offset="0.49" stop-color="#ff52e3"/><stop offset="0.54" stop-color="#ff43c8"/><stop offset="0.67" stop-color="#ff2999"/><stop offset="0.82" stop-color="#ff1373"/><stop offset="1" stop-color="#ff0053"/></linearGradient>
<linearGradient id="c434" gradientUnits="userSpaceOnUse" x1="1396" x2="1610" y1="0" y2="0"><stop offset="0" stop-color="#0082ff"/><stop offset="0.01" stop-color="#0181ff"/><stop offset="0.27" stop-color="#8e6fff"/><stop offset="0.45" stop-color="#ff5dff"/><stop offset="0.55" stop-color="#ff41ca"/><stop offset="0.67" stop-color="#ff289d"/><stop offset="0.82" stop-color="#ff1377"/><stop offset="1" stop-color="#ff0057"/></linearGradient>
<linearGradient id="c435" gradientUnits="userSpaceOnUse" x1="1395" x2="1606" y1="0" y2="0"><stop offset="0" stop-color="#007fff"/><stop offset="0.01" stop-color="#007eff"/><stop offset="0.27" stop-color="#8c6bff"/><stop offset="0.46" stop-color="#fe59ff"/><stop offset="0.56" stop-color="#ff3ecb"/><stop offset="0.68" stop-color="#ff269f"/><stop offset="0.82" stop-color="#ff127b"/><stop offset="1" stop-color="#ff005b"/></linearGradient>
<linearGradient id="c436" gradientUnits="userSpaceOnUse" x1="1395" x2="1601" y1="0" y2="0"><stop offset="0" stop-color="#007cff"/><stop offset="0.01" stop-color="#027bff"/><stop offset="0.29" stop-color="#9267ff"/><stop offset="0.48" stop-color="#fe55ff"/><stop offset="0.58" stop-color="#ff3acb"/><stop offset="0.69" stop-color="#ff24a2"/><stop offset="0.83" stop-color="#ff117e"/><stop offset="1" stop-color="#ff005f"/></linearGradient>
<linearGradient id="c437" gradientUnits="userSpaceOnUse" x1="1394" x2="1596" y1="0" y2="0"><stop offset="0" stop-color="#0079ff"/><stop offset="0.01" stop-color="#0178ff"/><stop offset="0.29" stop-color="#9063ff"/><stop offset="0.49" stop-color="#fe51ff"/><stop offset="0.59" stop-color="#ff38ce"/><stop offset="0.7" stop-color="#ff23a5"/><stop offset="0.84" stop-color="#ff1183"/><stop offset="1" stop-color="#ff0064"/></linearGradient>
<linearGradient id="c438" gradientUnits="userSpaceOnUse" x1="1393" x2="1592" y1="0" y2="0"><stop offset="0" stop-color="#0076ff"/><stop offset="0.01" stop-color="#0075ff"/><stop offset="0.29" stop-color="#8961ff"/><stop offset="0.51" stop-color="#ff4cfe"/><stop offset="0.6" stop-color="#ff35cf"/><stop offset="0.71" stop-color="#ff21a7"/><stop offset="0.84" stop-color="#ff1086"/><stop offset="1" stop-color="#ff0068"/></linearGradient>
<linearGradient id="c439" gradientUnits="userSpaceOnUse" x1="1392" x2="1587" y1="0" y2="0"><stop offset="0" stop-color="#0073ff"/><stop offset="0.01" stop-color="#0072ff"/><stop offset="0.29" stop-color="#875eff"/><stop offset="0.52" stop-color="#ff48fe"/><stop offset="0.62" stop-color="#ff33d1"/><stop offset="0.72" stop-color="#ff20ab"/><stop offset="0.85" stop-color="#ff0f8a"/><stop offset="1" stop-color="#ff006d"/></linearGradient>
<linearGradient id="c440" gradientUnits="userSpaceOnUse" x1="1392" x2="1583" y1="0" y2="0"><stop offset="0" stop-color="#0070ff"/><stop offset="0.01" stop-color="#026fff"/><stop offset="0.31" stop-color="#8f59ff"/><stop offset="0.53" stop-color="#ff44fe"/><stop offset="0.63" stop-color="#ff30d2"/><stop offset="0.73" stop-color="#ff1eae"/><stop offset="0.86" stop-color="#ff0e8d"/><stop offset="1" stop-color="#ff0071"/></linearGradient>
<linearGradient id="c441" gradientUnits="userSpaceOnUse" x1="1391" x2="1578" y1="0" y2="0"><stop offset="0" stop-color="#006dff"/><stop offset="0.01" stop-color="#006cff"/><stop offset="0.32" stop-color="#8d56ff"/><stop offset="0.55" stop-color="#ff40ff"/><stop offset="0.64" stop-color="#ff2dd5"/><stop offset="0.74" stop-color="#ff1db1"/><stop offset="0.86" stop-color="#ff0e92"/><stop offset="1" stop-color="#ff0077"/></linearGradient>
<linearGradient id="c442" gradientUnits="userSpaceOnUse" x1="1390" x2="1573" y1="0" y2="0"><stop offset="0" stop-color="#006aff"/><stop offset="0.01" stop-color="#0069ff"/><stop offset="0.33" stop-color="#8e52ff"/><stop offset="0.57" stop-color="#ff3dff"/><stop offset="0.66" stop-color="#ff2bd7"/><stop offset="0.75" stop-color="#ff1bb5"/><stop offset="0.87" stop-color="#ff0d97"/><stop offset="1" stop-color="#ff007c"/></linearGradient>
<linearGradient id="c443" gradientUnits="userSpaceOnUse" x1="1390" x2="1569" y1="0" y2="0"><stop offset="0" stop-color="#0067ff"/><stop offset="0.01" stop-color="#0266ff"/><stop offset="0.35" stop-color="#934eff"/><stop offset="0.58" stop-color="#ff39ff"/><stop offset="0.67" stop-color="#ff28d8"/><stop offset="0.77" stop-color="#ff19b8"/><stop offset="0.88" stop-color="#ff0b9a"/><stop offset="1" stop-color="#ff0081"/></linearGradient>
<linearGradient id="c444" gradientUnits="userSpaceOnUse" x1="1389" x2="1564" y1="0" y2="0"><stop offset="0" stop-color="#0064ff"/><stop offset="0.01" stop-color="#0163ff"/><stop offset="0.36" stop-color="#914bff"/><stop offset="0.6" stop-color="#fe35ff"/><stop offset="0.69" stop-color="#ff25db"/><stop offset="0.78" stop-color="#ff18bc"/><stop offset="0.88" stop-color="#ff0ba0"/><stop offset="1" stop-color="#ff0087"/></linearGradient>
<linearGradient id="c445" gradientUnits="userSpaceOnUse" x1="1388" x2="1559" y1="0" y2="0"><stop offset="0" stop-color="#0062ff"/><stop offset="0.01" stop-color="#0061ff"/><stop offset="0.36" stop-color="#8d49ff"/><stop offset="0.62" stop-color="#fe31ff"/><stop offset="0.71" stop-color="#ff22db"/><stop offset="0.79" stop-color="#ff17c0"/><stop offset="0.89" stop-color="#ff0aa5"/><stop offset="1" stop-color="#ff008d"/></linearGradient>
<linearGradient id="c446" gradientUnits="userSpaceOnUse" x1="1387" x2="1555" y1="0" y2="0"><stop offset="0" stop-color="#005fff"/><stop offset="0.01" stop-color="#005eff"/><stop offset="0.37" stop-color="#8b46ff"/><stop offset="0.64" stop-color="#fe2eff"/><stop offset="0.73" stop-color="#ff1fdc"/><stop offset="0.8" stop-color="#ff14c2"/><stop offset="1" stop-color="#ff0092"/></linearGradient>
<linearGradient id="c447" gradientUnits="userSpaceOnUse" x1="1387" x2="1550" y1="0" y2="0"><stop offset="0" stop-color="#005cff"/><stop offset="0.01" stop-color="#015bff"/><stop offset="0.39" stop-color="#8e42ff"/><stop offset="0.66" stop-color="#ff29fe"/><stop offset="0.74" stop-color="#ff1ee1"/><stop offset="0.82" stop-color="#ff13c6"/><stop offset="1" stop-color="#ff0099"/></linearGradient>
<linearGradient id="c448" gradientUnits="userSpaceOnUse" x1="1386" x2="1545" y1="0" y2="0"><stop offset="0" stop-color="#0059ff"/><stop offset="0.01" stop-color="#0059ff"/><stop offset="0.4" stop-color="#8f3fff"/><stop offset="0.69" stop-color="#ff26fe"/><stop offset="0.83" stop-color="#ff11cb"/><stop offset="1" stop-color="#ff00a0"/></linearGradient>
<linearGradient id="c449" gradientUnits="userSpaceOnUse" x1="1385" x2="1541" y1="0" y2="0"><stop offset="0" stop-color="#0057ff"/><stop offset="0.01" stop-color="#0056ff"/><stop offset="0.41" stop-color="#8d3cff"/><stop offset="0.71" stop-color="#ff22ff"/><stop offset="0.84" stop-color="#ff10cf"/><stop offset="1" stop-color="#ff00a6"/></linearGradient>
<linearGradient id="c450" gradientUnits="userSpaceOnUse" x1="1385" x2="1536" y1="0" y2="0"><stop offset="0" stop-color="#0054ff"/><stop offset="0.01" stop-color="#0253ff"/><stop offset="0.44" stop-color="#9537ff"/><stop offset="0.73" stop-color="#ff1eff"/><stop offset="0.85" stop-color="#ff0ed3"/><stop offset="1" stop-color="#ff00ae"/></linearGradient>
<linearGradient id="c451" gradientUnits="userSpaceOnUse" x1="1384" x2="1531" y1="0" y2="0"><stop offset="0" stop-color="#0052ff"/><stop offset="0.01" stop-color="#0151ff"/><stop offset="0.45" stop-color="#9035ff"/><stop offset="0.76" stop-color="#ff1bff"/><stop offset="0.87" stop-color="#ff0cd8"/><stop offset="1" stop-color="#ff00b6"/></linearGradient>
<linearGradient id="c452" gradientUnits="userSpaceOnUse" x1="1383" x2="1527" y1="0" y2="0"><stop offset="0" stop-color="#004fff"/><stop offset="0.01" stop-color="#004eff"/><stop offset="0.46" stop-color="#8f32ff"/><stop offset="0.78" stop-color="#fe17ff"/><stop offset="0.89" stop-color="#ff0adb"/><stop offset="1" stop-color="#ff00bd"/></linearGradient>
<linearGradient id="c453" gradientUnits="userSpaceOnUse" x1="1382" x2="1522" y1="0" y2="0"><stop offset="0" stop-color="#004dff"/><stop offset="0.02" stop-color="#024cff"/><stop offset="0.47" stop-color="#8d30ff"/><stop offset="0.81" stop-color="#fe14ff"/><stop offset="0.97" stop-color="#ff00cd"/><stop offset="1" stop-color="#ff00c6"/></linearGradient>
<linearGradient id="c454" gradientUnits="userSpaceOnUse" x1="1382" x2="1517" y1="0" y2="0"><stop offset="0" stop-color="#004aff"/><stop offset="0.01" stop-color="#0149ff"/><stop offset="0.5" stop-color="#922cff"/><stop offset="0.84" stop-color="#fe10ff"/><stop offset="1" stop-color="#ff00d0"/></linearGradient>
<linearGradient id="c455" gradientUnits="userSpaceOnUse" x1="1381" x2="1513" y1="0" y2="0"><stop offset="0" stop-color="#0048ff"/><stop offset="0.02" stop-color="#0047ff"/><stop offset="0.52" stop-color="#9029ff"/><stop offset="0.86" stop-color="#fe0cff"/><stop offset="0.97" stop-color="#ff00e0"/><stop offset="1" stop-color="#ff00d8"/></linearGradient>
<linearGradient id="c456" gradientUnits="userSpaceOnUse" x1="1380" x2="1508" y1="0" y2="0"><stop offset="0" stop-color="#0045ff"/><stop offset="0.02" stop-color="#0045ff"/><stop offset="0.53" stop-color="#8e27ff"/><stop offset="0.9" stop-color="#fd08ff"/><stop offset="1" stop-color="#ff00e3"/></linearGradient>
<linearGradient id="c457" gradientUnits="userSpaceOnUse" x1="1380" x2="1503" y1="0" y2="0"><stop offset="0" stop-color="#0043ff"/><stop offset="0.02" stop-color="#0242ff"/><stop offset="0.57" stop-color="#9322ff"/><stop offset="0.93" stop-color="#fd05ff"/><stop offset="1" stop-color="#ff00ee"/></linearGradient>
<linearGradient id="c458" gradientUnits="userSpaceOnUse" x1="1379" x2="1499" y1="0" y2="0"><stop offset="0" stop-color="#0040ff"/><stop offset="0.02" stop-color="#0140ff"/><stop offset="0.58" stop-color="#9220ff"/><stop offset="0.97" stop-color="#fd00ff"/><stop offset="1" stop-color="#ff00f8"/></linearGradient>
<linearGradient id="c459" gradientUnits="userSpaceOnUse" x1="1378" x2="1494" y1="0" y2="0"><stop offset="0" stop-color="#003eff"/><stop offset="0.02" stop-color="#003dff"/><stop offset="0.59" stop-color="#8e1eff"/><stop offset="1" stop-color="#fa00ff"/></linearGradient>
<linearGradient id="c460" gradientUnits="userSpaceOnUse" x1="1378" x2="1490" y1="0" y2="0"><stop offset="0" stop-color="#003cff"/><stop offset="0.62" stop-color="#8e1bff"/><stop offset="0.96" stop-color="#e600ff"/><stop offset="1" stop-color="#f000ff"/></linearGradient>
<linearGradient id="c461" gradientUnits="userSpaceOnUse" x1="1377" x2="1485" y1="0" y2="0"><stop offset="0" stop-color="#0039ff"/><stop offset="0.02" stop-color="#0139ff"/><stop offset="0.61" stop-color="#861aff"/><stop offset="1" stop-color="#e400ff"/></linearGradient>
<linearGradient id="c462" gradientUnits="userSpaceOnUse" x1="1376" x2="1480" y1="0" y2="0"><stop offset="0" stop-color="#0037ff"/><stop offset="0.02" stop-color="#0036ff"/><stop offset="0.61" stop-color="#7f19ff"/><stop offset="1" stop-color="#d800ff"/></linearGradient>
<linearGradient id="c463" gradientUnits="userSpaceOnUse" x1="1375" x2="1476" y1="0" y2="0"><stop offset="0" stop-color="#0035ff"/><stop offset="0.02" stop-color="#0034ff"/><stop offset="0.51" stop-color="#671dff"/><stop offset="1" stop-color="#cf00ff"/></linearGradient>
<linearGradient id="c464" gradientUnits="userSpaceOnUse" x1="1375" x2="1471" y1="0" y2="0"><stop offset="0" stop-color="#0032ff"/><stop offset="0.5" stop-color="#5f1cff"/><stop offset="1" stop-color="#c400ff"/></linearGradient>
<linearGradient id="c465" gradientUnits="userSpaceOnUse" x1="1374" x2="1466" y1="0" y2="0"><stop offset="0" stop-color="#0030ff"/><stop offset="0.02" stop-color="#0130ff"/><stop offset="0.51" stop-color="#5c1bff"/><stop offset="1" stop-color="#b900ff"/></linearGradient>
<linearGradient id="c466" gradientUnits="userSpaceOnUse" x1="1373" x2="1462" y1="0" y2="0"><stop offset="0" stop-color="#002eff"/><stop offset="0.02" stop-color="#002dff"/><stop offset="1" stop-color="#b100ff"/></linearGradient>
<linearGradient id="c467" gradientUnits="userSpaceOnUse" x1="1373" x2="1457" y1="0" y2="0"><stop offset="0" stop-color="#002cff"/><stop offset="1" stop-color="#a600ff"/></linearGradient>
<linearGradient id="c468" gradientUnits="userSpaceOnUse" x1="1372" x2="1452" y1="0" y2="0"><stop offset="0" stop-color="#002aff"/><stop offset="0.03" stop-color="#0129ff"/><stop offset="1" stop-color="#9c00ff"/></linearGradient>
<linearGradient id="c469" gradientUnits="userSpaceOnUse" x1="1371" x2="1448" y1="0" y2="0"><stop offset="0" stop-color="#0028ff"/><stop offset="0.03" stop-color="#0027ff"/><stop offset="1" stop-color="#9400ff"/></linearGradient>
<linearGradient id="c470" gradientUnits="userSpaceOnUse" x1="1370" x2="1443" y1="0" y2="0"><stop offset="0" stop-color="#0026ff"/><stop offset="0.03" stop-color="#0025ff"/><stop offset="1" stop-color="#8b00ff"/></linearGradient>
<linearGradient id="c471" gradientUnits="userSpaceOnUse" x1="1370" x2="1438" y1="0" y2="0"><stop offset="0" stop-color="#0023ff"/><stop offset="1" stop-color="#8200ff"/></linearGradient>
<linearGradient id="c472" gradientUnits="userSpaceOnUse" x1="1369" x2="1434" y1="0" y2="0"><stop offset="0" stop-color="#0021ff"/><stop offset="0.03" stop-color="#0120ff"/><stop offset="1" stop-color="#7a00ff"/></linearGradient>
<linearGradient id="c473" gradientUnits="userSpaceOnUse" x1="1368" x2="1429" y1="0" y2="0"><stop offset="0" stop-color="#001fff"/><stop offset="0.03" stop-color="#001eff"/><stop offset="1" stop-color="#7100ff"/></linearGradient>
<linearGradient id="c474" gradientUnits="userSpaceOnUse" x1="1368" x2="1424" y1="0" y2="0"><stop offset="0" stop-color="#001dff"/><stop offset="1" stop-color="#6900ff"/></linearGradient>
<linearGradient id="c475" gradientUnits="userSpaceOnUse" x1="1367" x2="1420" y1="0" y2="0"><stop offset="0" stop-color="#001bff"/><stop offset="0.04" stop-color="#011aff"/><stop offset="1" stop-color="#6200ff"/></linearGradient>
<linearGradient id="c476" gradientUnits="userSpaceOnUse" x1="1366" x2="1415" y1="0" y2="0"><stop offset="0" stop-color="#0019ff"/><stop offset="0.04" stop-color="#0018ff"/><stop offset="1" stop-color="#5900ff"/></linearGradient>
<linearGradient id="c477" gradientUnits="userSpaceOnUse" x1="1365" x2="1410" y1="0" y2="0"><stop offset="0" stop-color="#0017ff"/><stop offset="0.04" stop-color="#0016ff"/><stop offset="1" stop-color="#5100ff"/></linearGradient>
<linearGradient id="c478" gradientUnits="userSpaceOnUse" x1="1365" x2="1406" y1="0" y2="0"><stop offset="0" stop-color="#0015ff"/><stop offset="1" stop-color="#4a00ff"/></linearGradient>
<linearGradient id="c479" gradientUnits="userSpaceOnUse" x1="1364" x2="1401" y1="0" y2="0"><stop offset="0" stop-color="#0013ff"/><stop offset="0.05" stop-color="#0112ff"/><stop offset="1" stop-color="#4200ff"/></linearGradient>
<linearGradient id="c480" gradientUnits="userSpaceOnUse" x1="1363" x2="1397" y1="0" y2="0"><stop offset="0" stop-color="#0011ff"/><stop offset="0.06" stop-color="#0010ff"/><stop offset="1" stop-color="#3c00ff"/></linearGradient>
<linearGradient id="c481" gradientUnits="userSpaceOnUse" x1="1363" x2="1392" y1="0" y2="0"><stop offset="0" stop-color="#000eff"/><stop offset="1" stop-color="#3400ff"/></linearGradient>
<linearGradient id="c482" gradientUnits="userSpaceOnUse" x1="1362" x2="1387" y1="0" y2="0"><stop offset="0" stop-color="#000cff"/><stop offset="0.08" stop-color="#010bff"/><stop offset="1" stop-color="#2c00ff"/></linearGradient>
<linearGradient id="c483" gradientUnits="userSpaceOnUse" x1="1361" x2="1383" y1="0" y2="0"><stop offset="0" stop-color="#000aff"/><stop offset="0.09" stop-color="#0009ff"/><stop offset="1" stop-color="#2600ff"/></linearGradient>
<linearGradient id="c484" gradientUnits="userSpaceOnUse" x1="1360" x2="1378" y1="0" y2="0"><stop offset="0" stop-color="#0008ff"/><stop offset="0.11" stop-color="#0007ff"/><stop offset="1" stop-color="#1f00ff"/></linearGradient>
<linearGradient id="c485" gradientUnits="userSpaceOnUse" x1="1360" x2="1373" y1="0" y2="0"><stop offset="0" stop-color="#0006ff"/><stop offset="1" stop-color="#1700ff"/></linearGradient>
<linearGradient id="c486" gradientUnits="userSpaceOnUse" x1="1359" x2="1369" y1="0" y2="0"><stop offset="0" stop-color="#0004ff"/><stop offset="0.2" stop-color="#0003ff"/><stop offset="1" stop-color="#1100ff"/></linearGradient>
<linearGradient id="c487" gradientUnits="userSpaceOnUse" x1="1359" x2="1364" y1="0" y2="0"><stop offset="0" stop-color="#0001ff"/><stop offset="1" stop-color="#0800ff"/></linearGradient>
<clipPath id="cpi"><rect x="1718.4" y="163.4" width="190.19999999999982" height="189.20000000000002"/></clipPath>
<clipPath id="cpj"><path d="M1718.4 182.62 L1908.6 333.66 L1908.6 352.6 L1718.4 352.6Z"/></clipPath>
<linearGradient id="c488" gradientUnits="userSpaceOnUse" x1="1717" x2="1910" y1="0" y2="0"><stop offset="0" stop-color="#6e9900"/><stop offset="0.79" stop-color="#999900"/><stop offset="1" stop-color="#998e00"/></linearGradient>
<linearGradient id="c489" gradientUnits="userSpaceOnUse" x1="1717" x2="1910" y1="0" y2="0"><stop offset="0" stop-color="#6e9900"/><stop offset="0.78" stop-color="#999900"/><stop offset="1" stop-color="#998d00"/></linearGradient>
<linearGradient id="c490" gradientUnits="userSpaceOnUse" x1="1717" x2="1910" y1="0" y2="0"><stop offset="0" stop-color="#6f9900"/><stop offset="0.77" stop-color="#999900"/><stop offset="1" stop-color="#998d00"/></linearGradient>
<linearGradient id="c491" gradientUnits="userSpaceOnUse" x1="1717" x2="1910" y1="0" y2="0"><stop offset="0" stop-color="#6f9900"/><stop offset="0.76" stop-color="#999900"/><stop offset="1" stop-color="#998c00"/></linearGradient>
<linearGradient id="c492" gradientUnits="userSpaceOnUse" x1="1717" x2="1910" y1="0" y2="0"><stop offset="0" stop-color="#709900"/><stop offset="0.75" stop-color="#999900"/><stop offset="1" stop-color="#998c00"/></linearGradient>
<linearGradient id="c493" gradientUnits="userSpaceOnUse" x1="1717" x2="1910" y1="0" y2="0"><stop offset="0" stop-color="#709900"/><stop offset="0.74" stop-color="#999900"/><stop offset="1" stop-color="#998b00"/></linearGradient>
<linearGradient id="c494" gradientUnits="userSpaceOnUse" x1="1717" x2="1910" y1="0" y2="0"><stop offset="0" stop-color="#709900"/><stop offset="0.73" stop-color="#999900"/><stop offset="1" stop-color="#998b00"/></linearGradient>
<linearGradient id="c495" gradientUnits="userSpaceOnUse" x1="1717" x2="1910" y1="0" y2="0"><stop offset="0" stop-color="#719901"/><stop offset="0.73" stop-color="#999900"/><stop offset="1" stop-color="#998a00"/></linearGradient>
<linearGradient id="c496" gradientUnits="userSpaceOnUse" x1="1717" x2="1910" y1="0" y2="0"><stop offset="0" stop-color="#719901"/><stop offset="0.72" stop-color="#999900"/><stop offset="1" stop-color="#998a00"/></linearGradient>
<linearGradient id="c497" gradientUnits="userSpaceOnUse" x1="1717" x2="1910" y1="0" y2="0"><stop offset="0" stop-color="#729901"/><stop offset="0.7" stop-color="#999900"/><stop offset="1" stop-color="#998900"/></linearGradient>
<linearGradient id="c498" gradientUnits="userSpaceOnUse" x1="1717" x2="1910" y1="0" y2="0"><stop offset="0" stop-color="#729902"/><stop offset="0.69" stop-color="#999900"/><stop offset="1" stop-color="#998900"/></linearGradient>
<linearGradient id="c499" gradientUnits="userSpaceOnUse" x1="1717" x2="1910" y1="0" y2="0"><stop offset="0" stop-color="#739902"/><stop offset="0.68" stop-color="#999900"/><stop offset="1" stop-color="#998800"/></linearGradient>
<linearGradient id="c500" gradientUnits="userSpaceOnUse" x1="1717" x2="1910" y1="0" y2="0"><stop offset="0" stop-color="#739903"/><stop offset="0.12" stop-color="#7a9900"/><stop offset="0.68" stop-color="#999900"/><stop offset="1" stop-color="#998800"/></linearGradient>
<linearGradient id="c501" gradientUnits="userSpaceOnUse" x1="1717" x2="1910" y1="0" y2="0"><stop offset="0" stop-color="#739903"/><stop offset="0.15" stop-color="#7b9900"/><stop offset="0.67" stop-color="#999900"/><stop offset="1" stop-color="#998700"/></linearGradient>
<linearGradient id="c502" gradientUnits="userSpaceOnUse" x1="1717" x2="1910" y1="0" y2="0"><stop offset="0" stop-color="#749903"/><stop offset="0.17" stop-color="#7d9900"/><stop offset="0.66" stop-color="#999900"/><stop offset="1" stop-color="#998700"/></linearGradient>
<linearGradient id="c503" gradientUnits="userSpaceOnUse" x1="1717" x2="1910" y1="0" y2="0"><stop offset="0" stop-color="#749904"/><stop offset="0.19" stop-color="#7f9900"/><stop offset="0.65" stop-color="#999900"/><stop offset="1" stop-color="#998600"/></linearGradient>
<linearGradient id="c504" gradientUnits="userSpaceOnUse" x1="1717" x2="1910" y1="0" y2="0"><stop offset="0" stop-color="#759904"/><stop offset="0.2" stop-color="#809900"/><stop offset="0.64" stop-color="#999900"/><stop offset="1" stop-color="#998600"/></linearGradient>
<linearGradient id="c505" gradientUnits="userSpaceOnUse" x1="1717" x2="1910" y1="0" y2="0"><stop offset="0" stop-color="#759904"/><stop offset="0.22" stop-color="#829900"/><stop offset="0.63" stop-color="#999900"/><stop offset="1" stop-color="#998500"/></linearGradient>
<linearGradient id="c506" gradientUnits="userSpaceOnUse" x1="1717" x2="1910" y1="0" y2="0"><stop offset="0" stop-color="#769905"/><stop offset="0.24" stop-color="#839900"/><stop offset="0.62" stop-color="#999900"/><stop offset="1" stop-color="#998500"/></linearGradient>
<linearGradient id="c507" gradientUnits="userSpaceOnUse" x1="1717" x2="1910" y1="0" y2="0"><stop offset="0" stop-color="#769905"/><stop offset="0.26" stop-color="#859900"/><stop offset="0.61" stop-color="#999900"/><stop offset="1" stop-color="#998500"/></linearGradient>
<linearGradient id="c508" gradientUnits="userSpaceOnUse" x1="1717" x2="1910" y1="0" y2="0"><stop offset="0" stop-color="#779906"/><stop offset="0.28" stop-color="#869900"/><stop offset="0.6" stop-color="#999900"/><stop offset="1" stop-color="#998400"/></linearGradient>
<linearGradient id="c509" gradientUnits="userSpaceOnUse" x1="1717" x2="1910" y1="0" y2="0"><stop offset="0" stop-color="#779906"/><stop offset="0.3" stop-color="#889900"/><stop offset="0.59" stop-color="#999900"/><stop offset="1" stop-color="#998400"/></linearGradient>
<linearGradient id="c510" gradientUnits="userSpaceOnUse" x1="1717" x2="1910" y1="0" y2="0"><stop offset="0" stop-color="#789906"/><stop offset="0.32" stop-color="#8a9900"/><stop offset="0.59" stop-color="#999900"/><stop offset="1" stop-color="#998300"/></linearGradient>
<linearGradient id="c511" gradientUnits="userSpaceOnUse" x1="1717" x2="1910" y1="0" y2="0"><stop offset="0" stop-color="#789907"/><stop offset="0.34" stop-color="#8b9900"/><stop offset="0.58" stop-color="#999900"/><stop offset="1" stop-color="#998300"/></linearGradient>
<linearGradient id="c512" gradientUnits="userSpaceOnUse" x1="1717" x2="1910" y1="0" y2="0"><stop offset="0" stop-color="#789907"/><stop offset="0.36" stop-color="#8d9900"/><stop offset="0.56" stop-color="#999900"/><stop offset="1" stop-color="#998200"/></linearGradient>
<linearGradient id="c513" gradientUnits="userSpaceOnUse" x1="1717" x2="1910" y1="0" y2="0"><stop offset="0" stop-color="#799907"/><stop offset="0.38" stop-color="#8f9900"/><stop offset="0.55" stop-color="#999900"/><stop offset="1" stop-color="#998200"/></linearGradient>
<linearGradient id="c514" gradientUnits="userSpaceOnUse" x1="1717" x2="1910" y1="0" y2="0"><stop offset="0" stop-color="#799908"/><stop offset="0.4" stop-color="#909900"/><stop offset="0.54" stop-color="#999900"/><stop offset="1" stop-color="#998100"/></linearGradient>
<linearGradient id="c515" gradientUnits="userSpaceOnUse" x1="1717" x2="1910" y1="0" y2="0"><stop offset="0" stop-color="#7a9908"/><stop offset="0.54" stop-color="#999900"/><stop offset="1" stop-color="#998100"/></linearGradient>
<linearGradient id="c516" gradientUnits="userSpaceOnUse" x1="1717" x2="1910" y1="0" y2="0"><stop offset="0" stop-color="#7a9908"/><stop offset="0.53" stop-color="#999900"/><stop offset="1" stop-color="#998000"/></linearGradient>
<linearGradient id="c517" gradientUnits="userSpaceOnUse" x1="1717" x2="1910" y1="0" y2="0"><stop offset="0" stop-color="#7b9909"/><stop offset="0.52" stop-color="#999900"/><stop offset="1" stop-color="#998000"/></linearGradient>
<linearGradient id="c518" gradientUnits="userSpaceOnUse" x1="1717" x2="1910" y1="0" y2="0"><stop offset="0" stop-color="#7b9909"/><stop offset="0.51" stop-color="#999900"/><stop offset="1" stop-color="#997f00"/></linearGradient>
<linearGradient id="c519" gradientUnits="userSpaceOnUse" x1="1717" x2="1910" y1="0" y2="0"><stop offset="0" stop-color="#7c9909"/><stop offset="0.5" stop-color="#999900"/><stop offset="1" stop-color="#997f00"/></linearGradient>
<linearGradient id="c520" gradientUnits="userSpaceOnUse" x1="1717" x2="1910" y1="0" y2="0"><stop offset="0" stop-color="#7c990a"/><stop offset="0.49" stop-color="#999901"/><stop offset="1" stop-color="#997e00"/></linearGradient>
<linearGradient id="c521" gradientUnits="userSpaceOnUse" x1="1717" x2="1910" y1="0" y2="0"><stop offset="0" stop-color="#7d990a"/><stop offset="0.48" stop-color="#999901"/><stop offset="1" stop-color="#997e00"/></linearGradient>
<linearGradient id="c522" gradientUnits="userSpaceOnUse" x1="1717" x2="1910" y1="0" y2="0"><stop offset="0" stop-color="#7d990b"/><stop offset="0.47" stop-color="#999902"/><stop offset="1" stop-color="#997e00"/></linearGradient>
<linearGradient id="c523" gradientUnits="userSpaceOnUse" x1="1717" x2="1910" y1="0" y2="0"><stop offset="0" stop-color="#7e990b"/><stop offset="0.46" stop-color="#999903"/><stop offset="0.58" stop-color="#999200"/><stop offset="1" stop-color="#997d00"/></linearGradient>
<linearGradient id="c524" gradientUnits="userSpaceOnUse" x1="1717" x2="1910" y1="0" y2="0"><stop offset="0" stop-color="#7e990b"/><stop offset="0.45" stop-color="#999903"/><stop offset="0.6" stop-color="#999100"/><stop offset="1" stop-color="#997d00"/></linearGradient>
<linearGradient id="c525" gradientUnits="userSpaceOnUse" x1="1717" x2="1910" y1="0" y2="0"><stop offset="0" stop-color="#7f990c"/><stop offset="0.44" stop-color="#999904"/><stop offset="0.62" stop-color="#998f00"/><stop offset="1" stop-color="#997c00"/></linearGradient>
<linearGradient id="c526" gradientUnits="userSpaceOnUse" x1="1717" x2="1910" y1="0" y2="0"><stop offset="0" stop-color="#7f990c"/><stop offset="0.44" stop-color="#999904"/><stop offset="0.63" stop-color="#998e00"/><stop offset="1" stop-color="#997c00"/></linearGradient>
<linearGradient id="c527" gradientUnits="userSpaceOnUse" x1="1717" x2="1910" y1="0" y2="0"><stop offset="0" stop-color="#80990c"/><stop offset="0.42" stop-color="#999905"/><stop offset="0.65" stop-color="#998c00"/><stop offset="1" stop-color="#997b00"/></linearGradient>
<linearGradient id="c528" gradientUnits="userSpaceOnUse" x1="1717" x2="1910" y1="0" y2="0"><stop offset="0" stop-color="#80990d"/><stop offset="0.41" stop-color="#999906"/><stop offset="0.67" stop-color="#998a00"/><stop offset="1" stop-color="#997b00"/></linearGradient>
<linearGradient id="c529" gradientUnits="userSpaceOnUse" x1="1717" x2="1910" y1="0" y2="0"><stop offset="0" stop-color="#81990d"/><stop offset="0.4" stop-color="#999906"/><stop offset="0.69" stop-color="#998900"/><stop offset="1" stop-color="#997a00"/></linearGradient>
<linearGradient id="c530" gradientUnits="userSpaceOnUse" x1="1717" x2="1910" y1="0" y2="0"><stop offset="0" stop-color="#81990d"/><stop offset="0.39" stop-color="#999907"/><stop offset="0.71" stop-color="#998700"/><stop offset="1" stop-color="#997a00"/></linearGradient>
<linearGradient id="c531" gradientUnits="userSpaceOnUse" x1="1717" x2="1910" y1="0" y2="0"><stop offset="0" stop-color="#82990e"/><stop offset="0.39" stop-color="#999907"/><stop offset="0.73" stop-color="#998600"/><stop offset="1" stop-color="#997900"/></linearGradient>
<linearGradient id="c532" gradientUnits="userSpaceOnUse" x1="1717" x2="1910" y1="0" y2="0"><stop offset="0" stop-color="#82990e"/><stop offset="0.38" stop-color="#999908"/><stop offset="0.75" stop-color="#998400"/><stop offset="1" stop-color="#997900"/></linearGradient>
<linearGradient id="c533" gradientUnits="userSpaceOnUse" x1="1717" x2="1910" y1="0" y2="0"><stop offset="0" stop-color="#83990e"/><stop offset="0.37" stop-color="#999908"/><stop offset="0.77" stop-color="#998300"/><stop offset="1" stop-color="#997900"/></linearGradient>
<linearGradient id="c534" gradientUnits="userSpaceOnUse" x1="1717" x2="1910" y1="0" y2="0"><stop offset="0" stop-color="#83990f"/><stop offset="0.36" stop-color="#999909"/><stop offset="0.79" stop-color="#998200"/><stop offset="1" stop-color="#997800"/></linearGradient>
<linearGradient id="c535" gradientUnits="userSpaceOnUse" x1="1717" x2="1910" y1="0" y2="0"><stop offset="0" stop-color="#84990f"/><stop offset="0.35" stop-color="#999909"/><stop offset="0.81" stop-color="#998000"/><stop offset="1" stop-color="#997800"/></linearGradient>
<linearGradient id="c536" gradientUnits="userSpaceOnUse" x1="1717" x2="1910" y1="0" y2="0"><stop offset="0" stop-color="#849910"/><stop offset="0.34" stop-color="#99990a"/><stop offset="0.83" stop-color="#997f00"/><stop offset="1" stop-color="#997700"/></linearGradient>
<linearGradient id="c537" gradientUnits="userSpaceOnUse" x1="1717" x2="1910" y1="0" y2="0"><stop offset="0" stop-color="#859910"/><stop offset="0.33" stop-color="#99990b"/><stop offset="0.85" stop-color="#997d00"/><stop offset="1" stop-color="#997700"/></linearGradient>
<linearGradient id="c538" gradientUnits="userSpaceOnUse" x1="1717" x2="1910" y1="0" y2="0"><stop offset="0" stop-color="#859910"/><stop offset="0.32" stop-color="#99990b"/><stop offset="0.87" stop-color="#997c00"/><stop offset="1" stop-color="#997600"/></linearGradient>
<linearGradient id="c539" gradientUnits="userSpaceOnUse" x1="1717" x2="1910" y1="0" y2="0"><stop offset="0" stop-color="#869911"/><stop offset="0.31" stop-color="#99990c"/><stop offset="1" stop-color="#997600"/></linearGradient>
<linearGradient id="c540" gradientUnits="userSpaceOnUse" x1="1717" x2="1910" y1="0" y2="0"><stop offset="0" stop-color="#869911"/><stop offset="0.3" stop-color="#99990c"/><stop offset="1" stop-color="#997500"/></linearGradient>
<linearGradient id="c541" gradientUnits="userSpaceOnUse" x1="1717" x2="1910" y1="0" y2="0"><stop offset="0" stop-color="#879911"/><stop offset="0.3" stop-color="#99990d"/><stop offset="1" stop-color="#997500"/></linearGradient>
<linearGradient id="c542" gradientUnits="userSpaceOnUse" x1="1717" x2="1910" y1="0" y2="0"><stop offset="0" stop-color="#889912"/><stop offset="0.28" stop-color="#99990d"/><stop offset="1" stop-color="#997500"/></linearGradient>
<linearGradient id="c543" gradientUnits="userSpaceOnUse" x1="1717" x2="1910" y1="0" y2="0"><stop offset="0" stop-color="#889912"/><stop offset="0.27" stop-color="#99990e"/><stop offset="0.62" stop-color="#998607"/><stop offset="1" stop-color="#997400"/></linearGradient>
<linearGradient id="c544" gradientUnits="userSpaceOnUse" x1="1717" x2="1910" y1="0" y2="0"><stop offset="0" stop-color="#899913"/><stop offset="0.26" stop-color="#99990e"/><stop offset="0.61" stop-color="#998507"/><stop offset="1" stop-color="#997400"/></linearGradient>
<linearGradient id="c545" gradientUnits="userSpaceOnUse" x1="1717" x2="1910" y1="0" y2="0"><stop offset="0" stop-color="#899913"/><stop offset="0.25" stop-color="#99990f"/><stop offset="0.61" stop-color="#998508"/><stop offset="1" stop-color="#997300"/></linearGradient>
<linearGradient id="c546" gradientUnits="userSpaceOnUse" x1="1717" x2="1910" y1="0" y2="0"><stop offset="0" stop-color="#8a9913"/><stop offset="0.25" stop-color="#99990f"/><stop offset="0.6" stop-color="#998508"/><stop offset="1" stop-color="#997301"/></linearGradient>
<linearGradient id="c547" gradientUnits="userSpaceOnUse" x1="1717" x2="1910" y1="0" y2="0"><stop offset="0" stop-color="#8a9914"/><stop offset="0.24" stop-color="#999910"/><stop offset="0.6" stop-color="#998508"/><stop offset="1" stop-color="#997201"/></linearGradient>
<linearGradient id="c548" gradientUnits="userSpaceOnUse" x1="1717" x2="1910" y1="0" y2="0"><stop offset="0" stop-color="#8b9914"/><stop offset="0.23" stop-color="#999910"/><stop offset="0.59" stop-color="#998409"/><stop offset="1" stop-color="#997201"/></linearGradient>
<linearGradient id="c549" gradientUnits="userSpaceOnUse" x1="1717" x2="1910" y1="0" y2="0"><stop offset="0" stop-color="#8b9914"/><stop offset="0.22" stop-color="#999911"/><stop offset="0.59" stop-color="#998409"/><stop offset="1" stop-color="#997102"/></linearGradient>
<linearGradient id="c550" gradientUnits="userSpaceOnUse" x1="1717" x2="1910" y1="0" y2="0"><stop offset="0" stop-color="#8c9915"/><stop offset="0.21" stop-color="#999912"/><stop offset="0.58" stop-color="#99840a"/><stop offset="1" stop-color="#997102"/></linearGradient>
<linearGradient id="c551" gradientUnits="userSpaceOnUse" x1="1717" x2="1910" y1="0" y2="0"><stop offset="0" stop-color="#8c9915"/><stop offset="0.2" stop-color="#999912"/><stop offset="0.58" stop-color="#99840a"/><stop offset="1" stop-color="#997102"/></linearGradient>
<linearGradient id="c552" gradientUnits="userSpaceOnUse" x1="1717" x2="1910" y1="0" y2="0"><stop offset="0" stop-color="#b7ff00"/><stop offset="0.79" stop-color="#ffff00"/><stop offset="1" stop-color="#ffec00"/></linearGradient>
<linearGradient id="c553" gradientUnits="userSpaceOnUse" x1="1717" x2="1910" y1="0" y2="0"><stop offset="0" stop-color="#b8ff00"/><stop offset="0.78" stop-color="#ffff00"/><stop offset="1" stop-color="#ffeb00"/></linearGradient>
<linearGradient id="c554" gradientUnits="userSpaceOnUse" x1="1717" x2="1910" y1="0" y2="0"><stop offset="0" stop-color="#b9ff00"/><stop offset="0.77" stop-color="#ffff00"/><stop offset="1" stop-color="#ffeb00"/></linearGradient>
<linearGradient id="c555" gradientUnits="userSpaceOnUse" x1="1717" x2="1910" y1="0" y2="0"><stop offset="0" stop-color="#b9ff00"/><stop offset="0.76" stop-color="#ffff00"/><stop offset="1" stop-color="#ffea00"/></linearGradient>
<linearGradient id="c556" gradientUnits="userSpaceOnUse" x1="1717" x2="1910" y1="0" y2="0"><stop offset="0" stop-color="#baff00"/><stop offset="0.75" stop-color="#ffff00"/><stop offset="1" stop-color="#ffe900"/></linearGradient>
<linearGradient id="c557" gradientUnits="userSpaceOnUse" x1="1717" x2="1910" y1="0" y2="0"><stop offset="0" stop-color="#bbff00"/><stop offset="0.74" stop-color="#ffff00"/><stop offset="1" stop-color="#ffe800"/></linearGradient>
<linearGradient id="c558" gradientUnits="userSpaceOnUse" x1="1717" x2="1910" y1="0" y2="0"><stop offset="0" stop-color="#bbff00"/><stop offset="0.73" stop-color="#ffff00"/><stop offset="1" stop-color="#ffe700"/></linearGradient>
<linearGradient id="c559" gradientUnits="userSpaceOnUse" x1="1717" x2="1910" y1="0" y2="0"><stop offset="0" stop-color="#bcff01"/><stop offset="0.73" stop-color="#ffff00"/><stop offset="1" stop-color="#ffe600"/></linearGradient>
<linearGradient id="c560" gradientUnits="userSpaceOnUse" x1="1717" x2="1910" y1="0" y2="0"><stop offset="0" stop-color="#bdff02"/><stop offset="0.72" stop-color="#ffff00"/><stop offset="1" stop-color="#ffe600"/></linearGradient>
<linearGradient id="c561" gradientUnits="userSpaceOnUse" x1="1717" x2="1910" y1="0" y2="0"><stop offset="0" stop-color="#beff02"/><stop offset="0.07" stop-color="#c4ff00"/><stop offset="0.7" stop-color="#ffff00"/><stop offset="1" stop-color="#ffe500"/></linearGradient>
<linearGradient id="c562" gradientUnits="userSpaceOnUse" x1="1717" x2="1910" y1="0" y2="0"><stop offset="0" stop-color="#beff03"/><stop offset="0.09" stop-color="#c6ff00"/><stop offset="0.69" stop-color="#ffff00"/><stop offset="1" stop-color="#ffe400"/></linearGradient>
<linearGradient id="c563" gradientUnits="userSpaceOnUse" x1="1717" x2="1910" y1="0" y2="0"><stop offset="0" stop-color="#bfff04"/><stop offset="0.11" stop-color="#c9ff00"/><stop offset="0.68" stop-color="#ffff00"/><stop offset="1" stop-color="#ffe300"/></linearGradient>
<linearGradient id="c564" gradientUnits="userSpaceOnUse" x1="1717" x2="1910" y1="0" y2="0"><stop offset="0" stop-color="#c0ff04"/><stop offset="0.12" stop-color="#cbff00"/><stop offset="0.68" stop-color="#ffff00"/><stop offset="1" stop-color="#ffe200"/></linearGradient>
<linearGradient id="c565" gradientUnits="userSpaceOnUse" x1="1717" x2="1910" y1="0" y2="0"><stop offset="0" stop-color="#c0ff05"/><stop offset="0.15" stop-color="#ceff00"/><stop offset="0.67" stop-color="#ffff00"/><stop offset="1" stop-color="#ffe200"/></linearGradient>
<linearGradient id="c566" gradientUnits="userSpaceOnUse" x1="1717" x2="1910" y1="0" y2="0"><stop offset="0" stop-color="#c1ff06"/><stop offset="0.17" stop-color="#d0ff00"/><stop offset="0.66" stop-color="#ffff00"/><stop offset="1" stop-color="#ffe100"/></linearGradient>
<linearGradient id="c567" gradientUnits="userSpaceOnUse" x1="1717" x2="1910" y1="0" y2="0"><stop offset="0" stop-color="#c2ff06"/><stop offset="0.19" stop-color="#d3ff00"/><stop offset="0.65" stop-color="#ffff00"/><stop offset="1" stop-color="#ffe000"/></linearGradient>
<linearGradient id="c568" gradientUnits="userSpaceOnUse" x1="1717" x2="1910" y1="0" y2="0"><stop offset="0" stop-color="#c3ff07"/><stop offset="0.2" stop-color="#d5ff00"/><stop offset="0.64" stop-color="#ffff00"/><stop offset="1" stop-color="#ffdf00"/></linearGradient>
<linearGradient id="c569" gradientUnits="userSpaceOnUse" x1="1717" x2="1910" y1="0" y2="0"><stop offset="0" stop-color="#c3ff07"/><stop offset="0.22" stop-color="#d8ff00"/><stop offset="0.63" stop-color="#ffff00"/><stop offset="1" stop-color="#ffde00"/></linearGradient>
<linearGradient id="c570" gradientUnits="userSpaceOnUse" x1="1717" x2="1910" y1="0" y2="0"><stop offset="0" stop-color="#c4ff08"/><stop offset="0.24" stop-color="#dbff00"/><stop offset="0.62" stop-color="#ffff00"/><stop offset="1" stop-color="#ffde00"/></linearGradient>
<linearGradient id="c571" gradientUnits="userSpaceOnUse" x1="1717" x2="1910" y1="0" y2="0"><stop offset="0" stop-color="#c5ff09"/><stop offset="0.26" stop-color="#ddff00"/><stop offset="0.61" stop-color="#ffff00"/><stop offset="1" stop-color="#ffdd00"/></linearGradient>
<linearGradient id="c572" gradientUnits="userSpaceOnUse" x1="1717" x2="1910" y1="0" y2="0"><stop offset="0" stop-color="#c6ff09"/><stop offset="0.28" stop-color="#e0ff00"/><stop offset="0.6" stop-color="#ffff00"/><stop offset="1" stop-color="#ffdc00"/></linearGradient>
<linearGradient id="c573" gradientUnits="userSpaceOnUse" x1="1717" x2="1910" y1="0" y2="0"><stop offset="0" stop-color="#c7ff0a"/><stop offset="0.3" stop-color="#e3ff00"/><stop offset="0.59" stop-color="#ffff00"/><stop offset="1" stop-color="#ffdb00"/></linearGradient>
<linearGradient id="c574" gradientUnits="userSpaceOnUse" x1="1717" x2="1910" y1="0" y2="0"><stop offset="0" stop-color="#c7ff0a"/><stop offset="0.32" stop-color="#e5ff00"/><stop offset="0.59" stop-color="#ffff00"/><stop offset="1" stop-color="#ffda00"/></linearGradient>
<linearGradient id="c575" gradientUnits="userSpaceOnUse" x1="1717" x2="1910" y1="0" y2="0"><stop offset="0" stop-color="#c8ff0b"/><stop offset="0.34" stop-color="#e8ff00"/><stop offset="0.58" stop-color="#ffff00"/><stop offset="1" stop-color="#ffda00"/></linearGradient>
<linearGradient id="c576" gradientUnits="userSpaceOnUse" x1="1717" x2="1910" y1="0" y2="0"><stop offset="0" stop-color="#c9ff0c"/><stop offset="0.36" stop-color="#ebff00"/><stop offset="0.56" stop-color="#ffff00"/><stop offset="1" stop-color="#ffd900"/></linearGradient>
<linearGradient id="c577" gradientUnits="userSpaceOnUse" x1="1717" x2="1910" y1="0" y2="0"><stop offset="0" stop-color="#caff0c"/><stop offset="0.38" stop-color="#eeff00"/><stop offset="0.55" stop-color="#ffff00"/><stop offset="1" stop-color="#ffd800"/></linearGradient>
<linearGradient id="c578" gradientUnits="userSpaceOnUse" x1="1717" x2="1910" y1="0" y2="0"><stop offset="0" stop-color="#caff0d"/><stop offset="0.4" stop-color="#f0ff00"/><stop offset="0.54" stop-color="#ffff00"/><stop offset="1" stop-color="#ffd700"/></linearGradient>
<linearGradient id="c579" gradientUnits="userSpaceOnUse" x1="1717" x2="1910" y1="0" y2="0"><stop offset="0" stop-color="#cbff0d"/><stop offset="0.42" stop-color="#f3ff00"/><stop offset="0.54" stop-color="#ffff00"/><stop offset="1" stop-color="#ffd700"/></linearGradient>
<linearGradient id="c580" gradientUnits="userSpaceOnUse" x1="1717" x2="1910" y1="0" y2="0"><stop offset="0" stop-color="#ccff0e"/><stop offset="0.44" stop-color="#f6ff00"/><stop offset="0.53" stop-color="#ffff00"/><stop offset="1" stop-color="#ffd600"/></linearGradient>
<linearGradient id="c581" gradientUnits="userSpaceOnUse" x1="1717" x2="1910" y1="0" y2="0"><stop offset="0" stop-color="#cdff0f"/><stop offset="0.52" stop-color="#ffff00"/><stop offset="1" stop-color="#ffd500"/></linearGradient>
<linearGradient id="c582" gradientUnits="userSpaceOnUse" x1="1717" x2="1910" y1="0" y2="0"><stop offset="0" stop-color="#ceff0f"/><stop offset="0.51" stop-color="#ffff00"/><stop offset="1" stop-color="#ffd400"/></linearGradient>
<linearGradient id="c583" gradientUnits="userSpaceOnUse" x1="1717" x2="1910" y1="0" y2="0"><stop offset="0" stop-color="#ceff10"/><stop offset="0.5" stop-color="#ffff00"/><stop offset="1" stop-color="#ffd400"/></linearGradient>
<linearGradient id="c584" gradientUnits="userSpaceOnUse" x1="1717" x2="1910" y1="0" y2="0"><stop offset="0" stop-color="#cfff10"/><stop offset="0.49" stop-color="#ffff01"/><stop offset="1" stop-color="#ffd300"/></linearGradient>
<linearGradient id="c585" gradientUnits="userSpaceOnUse" x1="1717" x2="1910" y1="0" y2="0"><stop offset="0" stop-color="#d0ff11"/><stop offset="0.48" stop-color="#ffff02"/><stop offset="1" stop-color="#ffd200"/></linearGradient>
<linearGradient id="c586" gradientUnits="userSpaceOnUse" x1="1717" x2="1910" y1="0" y2="0"><stop offset="0" stop-color="#d1ff12"/><stop offset="0.47" stop-color="#ffff03"/><stop offset="0.55" stop-color="#fff700"/><stop offset="1" stop-color="#ffd100"/></linearGradient>
<linearGradient id="c587" gradientUnits="userSpaceOnUse" x1="1717" x2="1910" y1="0" y2="0"><stop offset="0" stop-color="#d2ff12"/><stop offset="0.46" stop-color="#ffff04"/><stop offset="0.58" stop-color="#fff400"/><stop offset="1" stop-color="#ffd000"/></linearGradient>
<linearGradient id="c588" gradientUnits="userSpaceOnUse" x1="1717" x2="1910" y1="0" y2="0"><stop offset="0" stop-color="#d2ff13"/><stop offset="0.45" stop-color="#ffff05"/><stop offset="0.6" stop-color="#fff100"/><stop offset="1" stop-color="#ffd000"/></linearGradient>
<linearGradient id="c589" gradientUnits="userSpaceOnUse" x1="1717" x2="1910" y1="0" y2="0"><stop offset="0" stop-color="#d3ff13"/><stop offset="0.44" stop-color="#ffff06"/><stop offset="0.62" stop-color="#ffee00"/><stop offset="1" stop-color="#ffcf00"/></linearGradient>
<linearGradient id="c590" gradientUnits="userSpaceOnUse" x1="1717" x2="1910" y1="0" y2="0"><stop offset="0" stop-color="#d4ff14"/><stop offset="0.44" stop-color="#ffff07"/><stop offset="0.63" stop-color="#ffec00"/><stop offset="1" stop-color="#ffce00"/></linearGradient>
<linearGradient id="c591" gradientUnits="userSpaceOnUse" x1="1717" x2="1910" y1="0" y2="0"><stop offset="0" stop-color="#d5ff14"/><stop offset="0.42" stop-color="#ffff08"/><stop offset="0.65" stop-color="#ffe900"/><stop offset="1" stop-color="#ffcd00"/></linearGradient>
<linearGradient id="c592" gradientUnits="userSpaceOnUse" x1="1717" x2="1910" y1="0" y2="0"><stop offset="0" stop-color="#d6ff15"/><stop offset="0.41" stop-color="#ffff09"/><stop offset="0.67" stop-color="#ffe700"/><stop offset="1" stop-color="#ffcd00"/></linearGradient>
<linearGradient id="c593" gradientUnits="userSpaceOnUse" x1="1717" x2="1910" y1="0" y2="0"><stop offset="0" stop-color="#d7ff16"/><stop offset="0.4" stop-color="#ffff0a"/><stop offset="0.69" stop-color="#ffe400"/><stop offset="1" stop-color="#ffcc00"/></linearGradient>
<linearGradient id="c594" gradientUnits="userSpaceOnUse" x1="1717" x2="1910" y1="0" y2="0"><stop offset="0" stop-color="#d7ff16"/><stop offset="0.39" stop-color="#ffff0b"/><stop offset="0.71" stop-color="#ffe200"/><stop offset="1" stop-color="#ffcb00"/></linearGradient>
<linearGradient id="c595" gradientUnits="userSpaceOnUse" x1="1717" x2="1910" y1="0" y2="0"><stop offset="0" stop-color="#d8ff17"/><stop offset="0.39" stop-color="#ffff0c"/><stop offset="0.73" stop-color="#ffdf00"/><stop offset="1" stop-color="#ffca00"/></linearGradient>
<linearGradient id="c596" gradientUnits="userSpaceOnUse" x1="1717" x2="1910" y1="0" y2="0"><stop offset="0" stop-color="#d9ff17"/><stop offset="0.38" stop-color="#ffff0d"/><stop offset="0.75" stop-color="#ffdd00"/><stop offset="1" stop-color="#ffca00"/></linearGradient>
<linearGradient id="c597" gradientUnits="userSpaceOnUse" x1="1717" x2="1910" y1="0" y2="0"><stop offset="0" stop-color="#daff18"/><stop offset="0.37" stop-color="#ffff0e"/><stop offset="0.77" stop-color="#ffda00"/><stop offset="1" stop-color="#ffc900"/></linearGradient>
<linearGradient id="c598" gradientUnits="userSpaceOnUse" x1="1717" x2="1910" y1="0" y2="0"><stop offset="0" stop-color="#dbff19"/><stop offset="0.36" stop-color="#ffff0f"/><stop offset="0.79" stop-color="#ffd800"/><stop offset="1" stop-color="#ffc800"/></linearGradient>
<linearGradient id="c599" gradientUnits="userSpaceOnUse" x1="1717" x2="1910" y1="0" y2="0"><stop offset="0" stop-color="#dcff19"/><stop offset="0.35" stop-color="#ffff10"/><stop offset="0.81" stop-color="#ffd600"/><stop offset="1" stop-color="#ffc700"/></linearGradient>
<linearGradient id="c600" gradientUnits="userSpaceOnUse" x1="1717" x2="1910" y1="0" y2="0"><stop offset="0" stop-color="#ddff1a"/><stop offset="0.34" stop-color="#ffff11"/><stop offset="0.83" stop-color="#ffd300"/><stop offset="1" stop-color="#ffc700"/></linearGradient>
<linearGradient id="c601" gradientUnits="userSpaceOnUse" x1="1717" x2="1910" y1="0" y2="0"><stop offset="0" stop-color="#ddff1b"/><stop offset="0.33" stop-color="#ffff12"/><stop offset="0.85" stop-color="#ffd100"/><stop offset="1" stop-color="#ffc600"/></linearGradient>
<linearGradient id="c602" gradientUnits="userSpaceOnUse" x1="1717" x2="1910" y1="0" y2="0"><stop offset="0" stop-color="#deff1b"/><stop offset="0.32" stop-color="#ffff12"/><stop offset="0.87" stop-color="#ffcf00"/><stop offset="1" stop-color="#ffc500"/></linearGradient>
<linearGradient id="c603" gradientUnits="userSpaceOnUse" x1="1717" x2="1910" y1="0" y2="0"><stop offset="0" stop-color="#dfff1c"/><stop offset="0.31" stop-color="#ffff13"/><stop offset="0.59" stop-color="#ffe50a"/><stop offset="0.89" stop-color="#ffcd00"/><stop offset="1" stop-color="#ffc400"/></linearGradient>
<linearGradient id="c604" gradientUnits="userSpaceOnUse" x1="1717" x2="1910" y1="0" y2="0"><stop offset="0" stop-color="#e0ff1c"/><stop offset="0.3" stop-color="#ffff14"/><stop offset="0.63" stop-color="#ffe009"/><stop offset="0.91" stop-color="#ffca00"/><stop offset="1" stop-color="#ffc400"/></linearGradient>
<linearGradient id="c605" gradientUnits="userSpaceOnUse" x1="1717" x2="1910" y1="0" y2="0"><stop offset="0" stop-color="#e1ff1d"/><stop offset="0.3" stop-color="#ffff15"/><stop offset="0.63" stop-color="#ffdf0a"/><stop offset="1" stop-color="#ffc300"/></linearGradient>
<linearGradient id="c606" gradientUnits="userSpaceOnUse" x1="1717" x2="1910" y1="0" y2="0"><stop offset="0" stop-color="#e2ff1e"/><stop offset="0.28" stop-color="#ffff16"/><stop offset="0.62" stop-color="#ffdf0b"/><stop offset="1" stop-color="#ffc200"/></linearGradient>
<linearGradient id="c607" gradientUnits="userSpaceOnUse" x1="1717" x2="1910" y1="0" y2="0"><stop offset="0" stop-color="#e3ff1e"/><stop offset="0.27" stop-color="#ffff17"/><stop offset="0.62" stop-color="#ffdf0b"/><stop offset="1" stop-color="#ffc200"/></linearGradient>
<linearGradient id="c608" gradientUnits="userSpaceOnUse" x1="1717" x2="1910" y1="0" y2="0"><stop offset="0" stop-color="#e4ff1f"/><stop offset="0.26" stop-color="#ffff18"/><stop offset="0.61" stop-color="#ffde0c"/><stop offset="1" stop-color="#ffc100"/></linearGradient>
<linearGradient id="c609" gradientUnits="userSpaceOnUse" x1="1717" x2="1910" y1="0" y2="0"><stop offset="0" stop-color="#e5ff1f"/><stop offset="0.25" stop-color="#ffff19"/><stop offset="0.61" stop-color="#ffde0d"/><stop offset="1" stop-color="#ffc000"/></linearGradient>
<linearGradient id="c610" gradientUnits="userSpaceOnUse" x1="1717" x2="1910" y1="0" y2="0"><stop offset="0" stop-color="#e6ff20"/><stop offset="0.25" stop-color="#ffff1a"/><stop offset="0.6" stop-color="#ffdd0d"/><stop offset="1" stop-color="#ffbf01"/></linearGradient>
<linearGradient id="c611" gradientUnits="userSpaceOnUse" x1="1717" x2="1910" y1="0" y2="0"><stop offset="0" stop-color="#e6ff21"/><stop offset="0.24" stop-color="#ffff1a"/><stop offset="0.6" stop-color="#ffdd0e"/><stop offset="1" stop-color="#ffbf02"/></linearGradient>
<linearGradient id="c612" gradientUnits="userSpaceOnUse" x1="1717" x2="1910" y1="0" y2="0"><stop offset="0" stop-color="#e7ff21"/><stop offset="0.23" stop-color="#ffff1b"/><stop offset="0.59" stop-color="#ffdd0f"/><stop offset="1" stop-color="#ffbe02"/></linearGradient>
<linearGradient id="c613" gradientUnits="userSpaceOnUse" x1="1717" x2="1910" y1="0" y2="0"><stop offset="0" stop-color="#e8ff22"/><stop offset="0.22" stop-color="#ffff1c"/><stop offset="0.59" stop-color="#ffdc0f"/><stop offset="1" stop-color="#ffbd03"/></linearGradient>
<linearGradient id="c614" gradientUnits="userSpaceOnUse" x1="1717" x2="1910" y1="0" y2="0"><stop offset="0" stop-color="#e9ff23"/><stop offset="0.21" stop-color="#ffff1d"/><stop offset="0.58" stop-color="#ffdc10"/><stop offset="1" stop-color="#ffbc03"/></linearGradient>
<linearGradient id="c615" gradientUnits="userSpaceOnUse" x1="1717" x2="1910" y1="0" y2="0"><stop offset="0" stop-color="#eaff23"/><stop offset="0.2" stop-color="#ffff1e"/><stop offset="0.58" stop-color="#ffdc11"/><stop offset="1" stop-color="#ffbc04"/></linearGradient>
<linearGradient id="l616" x1="0" y1="0" x2="0" y2="1"><stop offset="0" stop-color="#4a4a4a"/><stop offset="0.15" stop-color="#444"/><stop offset="0.6" stop-color="#333"/><stop offset="1" stop-color="#262626"/></linearGradient>
<linearGradient id="l617" x1="0" y1="0" x2="1" y2="0"><stop offset="0" stop-color="rgba(30,30,30,0.55)"/><stop offset="1" stop-color="rgba(30,30,30,0)"/></linearGradient>
<linearGradient id="l618" x1="0" y1="0" x2="1" y2="0"><stop offset="0" stop-color="rgba(30,30,30,0)"/><stop offset="1" stop-color="rgba(30,30,30,0.5)"/></linearGradient>
<linearGradient id="l619" x1="0" y1="0" x2="0" y2="1"><stop offset="0" stop-color="#a6a6a6"/><stop offset="0.1" stop-color="#969696"/><stop offset="0.6" stop-color="#707070"/><stop offset="1" stop-color="#5a5a5a"/></linearGradient>
<radialGradient id="r620" cx="0.5" cy="0.5" r="0.5"><stop offset="0" stop-color="#6c6c6c"/><stop offset="0.8" stop-color="#7a7a7a"/><stop offset="1" stop-color="#8e8e8e"/></radialGradient>
<linearGradient id="l621" x1="0" y1="0" x2="0" y2="1"><stop offset="0" stop-color="#a8a8a8"/><stop offset="0.5" stop-color="#868686"/><stop offset="1" stop-color="#606060"/></linearGradient>
<linearGradient id="l622" x1="0" y1="0" x2="0" y2="1"><stop offset="0" stop-color="#b2b2b2"/><stop offset="0.5" stop-color="#949494"/><stop offset="1" stop-color="#787878"/></linearGradient>
<linearGradient id="l623" x1="0" y1="0" x2="0" y2="1"><stop offset="0" stop-color="#6e6e6e"/><stop offset="1" stop-color="#8c8c8c"/></linearGradient>
<linearGradient id="l624" x1="0" y1="0" x2="0" y2="1"><stop offset="0" stop-color="#222"/><stop offset="0.5" stop-color="#111"/><stop offset="0.5" stop-color="#000"/><stop offset="1" stop-color="#000"/></linearGradient>
<linearGradient id="l625" x1="0" y1="0" x2="0" y2="1"><stop offset="0" stop-color="#ffffff"/><stop offset="0.5" stop-color="#e0e0e0"/><stop offset="1" stop-color="#a8a8a8"/></linearGradient>
<linearGradient id="l626" x1="0" y1="0" x2="0" y2="1"><stop offset="0" stop-color="#404040"/><stop offset="1" stop-color="#2c2c2c"/></linearGradient>
<linearGradient id="l627" x1="0" y1="0" x2="0" y2="1"><stop offset="0" stop-color="#6e6e6e"/><stop offset="0.5" stop-color="#868686"/><stop offset="1" stop-color="#a8a8a8"/></linearGradient>
<linearGradient id="l628" x1="0" y1="0" x2="0" y2="1"><stop offset="0" stop-color="#c4c4c4"/><stop offset="0.5" stop-color="#e2e2e2"/><stop offset="1" stop-color="#ffffff"/></linearGradient>
<linearGradient id="l629" x1="0" y1="0" x2="0" y2="1"><stop offset="0" stop-color="#6e6e6e"/><stop offset="0.5" stop-color="#868686"/><stop offset="1" stop-color="#a8a8a8"/></linearGradient>
<linearGradient id="l630" x1="0" y1="0" x2="0" y2="1"><stop offset="0" stop-color="#6e6e6e"/><stop offset="0.5" stop-color="#868686"/><stop offset="1" stop-color="#a8a8a8"/></linearGradient>
<radialGradient id="r631" cx="0.5" cy="0.5" r="0.5"><stop offset="0" stop-color="#3c3c3c"/><stop offset="1" stop-color="#343434"/></radialGradient>
<linearGradient id="l632" x1="0" y1="0" x2="0" y2="1"><stop offset="0" stop-color="#6e6e6e"/><stop offset="0.5" stop-color="#868686"/><stop offset="1" stop-color="#a8a8a8"/></linearGradient>
<linearGradient id="l633" x1="0" y1="0" x2="0" y2="1"><stop offset="0" stop-color="#868686"/><stop offset="0.5" stop-color="#a0a0a0"/><stop offset="1" stop-color="#bcbcbc"/></linearGradient>
<linearGradient id="l634" x1="0" y1="0" x2="0" y2="1"><stop offset="0" stop-color="#868686"/><stop offset="0.5" stop-color="#a0a0a0"/><stop offset="1" stop-color="#bcbcbc"/></linearGradient>
</defs>
<rect x="0" y="0" width="1912" height="1050" fill="#333333" />
<rect x="0" y="0" width="1912" height="23" fill="#ffffff" />
<rect x="0" y="23" width="1912" height="35" fill="#222222" />
<rect x="200" y="58" width="1712" height="31" fill="#222222" />
<g transform="translate(9.9 10.8) rotate(45)"><rect x="-5.7" y="-5.7" width="5.7" height="5.7" rx="1.2" fill="#f0c82e"/><rect x="0" y="-5.7" width="5.7" height="5.7" rx="1.2" fill="#24b824"/><rect x="-5.7" y="0" width="5.7" height="5.7" rx="1.2" fill="#3cabee"/><rect x="0" y="0" width="5.7" height="5.7" rx="1.2" fill="#e62868"/></g>
<text x="23.6" y="16" font-size="12.2" fill="#000" textLength="383.6" lengthAdjust="spacingAndGlyphs" >Calman 2025 Calman Ultimate for Business 95 Days Remaining  - Untitled</text>
<line x1="1799" y1="10.5" x2="1809" y2="10.5" stroke="#000" stroke-width="1" />
<path d="M1844.5 7.5h7v7h-7z M1846.5 7.5v-2h7v7h-2" fill="none" stroke="#000" stroke-width="1"/>
<path d="M1890 5.4l9.6 9.6 M1899.6 5.4l-9.6 9.6" fill="none" stroke="#000" stroke-width="1.1"/>
<path d="M0 23H183V48.5a4 4 0 0 1-4 4H4a4 4 0 0 1-4-4z" fill="url(#l1)"/>
<path d="M0.5 48.5a3.5 3.5 0 0 0 3.5 3.5H179a3.5 3.5 0 0 0 3.5-3.5V23.5" fill="none" stroke="#f5a8a0" stroke-width="1" opacity="0.85"/>
<g transform="translate(34.3 37.3) rotate(45)"><rect x="-8.7" y="-8.7" width="17.4" height="17.4" rx="2.4" fill="#fff"/><g fill="none" stroke="#d22a2a" stroke-width="1.1"><rect x="-5.4" y="-5.4" width="10.8" height="10.8"/><path d="M0 -5.4V5.4 M-5.4 0H5.4"/></g><g stroke="#e23a3a" stroke-width="0.8"><path d="M-8.3 -2.6h3 M-8.3 2.6h3 M8.3 -2.6h-3 M8.3 2.6h-3 M-2.6 -8.3v3 M2.6 -8.3v3 M-2.6 8.3v-3 M2.6 8.3v-3" opacity="0.0"/></g></g>
<g fill="none" stroke="#fff" stroke-width="2.7"><path d="M60.5 34.1A5.25 5.25 0 1 0 60.5 41.4"/><circle cx="68.5" cy="37.75" r="5.25"/><path d="M73.6 31.2V44.3"/><path d="M79.3 24.9V44.3"/><path d="M85.15 44.3V31.2 M85.15 37.3A4.8 4.8 0 0 1 94.75 37.3V44.3 M94.75 37.3A4.52 4.52 0 0 1 103.8 37.3V44.3"/><circle cx="113.55" cy="37.75" r="5.25"/><path d="M118.7 31.2V44.3"/><path d="M124.9 44.3V31.2 M124.9 36.8A4.3 4.3 0 0 1 133.5 36.8V44.3"/></g>
<circle cx="166" cy="38" r="10" fill="url(#l2)"/>
<path d="M161.5 36h9l-4.5 4.8z" fill="#fff"/>
<rect x="190" y="35.2" width="1722" height="5" fill="url(#l3)" />
<rect x="0" y="58" width="200" height="992" fill="#555555" />
<rect x="0" y="58" width="200" height="30" fill="url(#l5)" />
<rect x="199.9" y="88" width="1.3" height="962" fill="#1f1f1f" />
<rect x="201.2" y="89" width="3" height="961" fill="url(#l6)" />
<rect x="200" y="88.1" width="1712" height="1.1" fill="#202020" />
<circle cx="18.3" cy="72.5" r="9.5" fill="url(#l7)"/>
<circle cx="18" cy="71" r="3.6" fill="url(#r8)"/>
<circle cx="181" cy="72" r="10" fill="url(#l9)"/>
<path d="M183.5 66.5v10l-6-5z" fill="#fff"/>
<text x="9" y="101" font-size="12.6" fill="#ececec" textLength="141" lengthAdjust="spacingAndGlyphs" >Quick Analysis NBC sRGB</text>
<rect x="9" y="105.5" width="182" height="146" fill="url(#l10)" />
<rect x="9" y="105.5" width="14" height="146" fill="url(#l11)" opacity="0.0"/>
<rect x="9" y="105.5" width="12" height="146" fill="url(#l12)" />
<line x1="191.5" y1="105.5" x2="191.5" y2="251.5" stroke="#686868" stroke-width="1" />
<line x1="9" y1="251.8" x2="192" y2="251.8" stroke="#686868" stroke-width="0.8" />
<rect x="179" y="105.5" width="12" height="146" fill="url(#l13)" />
<path d="M22.5 118.5v3.5h-3.5z" fill="#555"/>
<text x="30" y="124" font-size="11" fill="#fff" font-weight="bold" textLength="72" lengthAdjust="spacingAndGlyphs" >Quick Analysis</text>
<rect x="41" y="172" width="94" height="14" fill="#dcdcdc" />
<text x="43" y="140" font-size="10.8" fill="#fff" textLength="60" lengthAdjust="spacingAndGlyphs" >Introduction</text>
<text x="43" y="153.6" font-size="10.8" fill="#fff" textLength="46" lengthAdjust="spacingAndGlyphs" >Grayscale</text>
<text x="43" y="169" font-size="10.8" fill="#fff" textLength="78" lengthAdjust="spacingAndGlyphs" >CMS Calibration</text>
<text x="43" y="182.8" font-size="10.8" fill="#333" textLength="90" lengthAdjust="spacingAndGlyphs" >Saturation Sweeps</text>
<text x="43" y="198" font-size="10.8" fill="#fff" textLength="92" lengthAdjust="spacingAndGlyphs" >Luminance Sweeps</text>
<text x="43" y="213" font-size="10.8" fill="#fff" textLength="65" lengthAdjust="spacingAndGlyphs" >ColorChecker</text>
<text x="43" y="227" font-size="10.8" fill="#fff" textLength="88" lengthAdjust="spacingAndGlyphs" >Screen Uniformity</text>
<text x="43" y="242" font-size="10.8" fill="#fff" textLength="97" lengthAdjust="spacingAndGlyphs" >Spectral Power Dist.</text>
<path d="M200.5 88.5V61.5a3 3 0 0 1 3-3H288.5a3 3 0 0 1 3 3V88.5z" fill="url(#l14)"/>
<rect x="259" y="59" width="32" height="29.5" fill="#3e3e3e" />
<path d="M200.5 88.5V61.5a3 3 0 0 1 3-3H288.5a3 3 0 0 1 3 3V88.5" fill="none" stroke="#8a8a8a" stroke-width="1"/>
<line x1="203" y1="58.6" x2="289" y2="58.6" stroke="#b0b0b0" stroke-width="1" />
<line x1="258.5" y1="59" x2="258.5" y2="88.5" stroke="#8a8a8a" stroke-width="1" />
<text x="207" y="78.2" font-size="11.6" fill="#e6e6e6" textLength="46" lengthAdjust="spacingAndGlyphs" >History 1</text>
<circle cx="274.2" cy="75" r="9" fill="url(#l15)"/>
<path d="M271.2 75.5h6 M274.2 72.5v6" stroke="#9a9a9a" stroke-width="1" fill="none"/>
<path d="M1349 88.5V61a3 3 0 0 1 3-3H1490a3 3 0 0 1 3 3V88.5z" fill="url(#l16)"/>
<path d="M1349 88.5V61a3 3 0 0 1 3-3H1355V88.5z" fill="#1edc1e"/>
<text x="1358.3" y="70" font-size="10.6" fill="#fff" textLength="66" lengthAdjust="spacingAndGlyphs" >X-Rite i1Pro 3</text>
<text x="1358.3" y="84" font-size="10.6" fill="#fff" textLength="56" lengthAdjust="spacingAndGlyphs" >Direct View</text>
<circle cx="1437" cy="73.5" r="9.5" fill="url(#l17)"/>
<path d="M1432.5 71.5h9l-4.5 5z" fill="#fff"/>
<line x1="1456.5" y1="62" x2="1456.5" y2="88" stroke="#444" stroke-width="1" />
<circle cx="1477" cy="73" r="12.4" fill="#0000ee" stroke="#f0f0ff" stroke-width="1.3"/>
<text x="1477.2" y="76.6" font-size="9.8" fill="#fff" text-anchor="middle" textLength="15.5" lengthAdjust="spacingAndGlyphs" >713</text>
<path d="M1498 88.5V61a3 3 0 0 1 3-3H1704a3 3 0 0 1 3 3V88.5z" fill="url(#l18)"/>
<path d="M1498 88.5V61a3 3 0 0 1 3-3H1504V88.5z" fill="#1edc1e"/>
<text x="1507.3" y="70" font-size="10.6" fill="#fff" textLength="170" lengthAdjust="spacingAndGlyphs" >CalMAN Client 3 Pattern Generator</text>
<circle cx="1690" cy="73.5" r="9.5" fill="url(#l19)"/>
<path d="M1685.5 71.5h9l-4.5 5z" fill="#fff"/>
<path d="M1713 88.5V61a3 3 0 0 1 3-3H1853a3 3 0 0 1 3 3V88.5z" fill="url(#l20)"/>
<path d="M1713 88.5V61a3 3 0 0 1 3-3H1719V88.5z" fill="#e8e020"/>
<text x="1722.3" y="70" font-size="10.6" fill="#fff" textLength="105" lengthAdjust="spacingAndGlyphs" >Direct Display Control</text>
<circle cx="1839" cy="73.5" r="9.5" fill="url(#l21)"/>
<path d="M1834.5 71.5h9l-4.5 5z" fill="#fff"/>
<rect x="1859.5" y="58.5" width="33" height="27" rx="4" fill="url(#l22)" stroke="#9a9a9a" stroke-width="1"/>
<circle cx="1876" cy="72" r="10" fill="url(#l23)"/>
<g transform="translate(1876 72.3)" fill="none" stroke="#c4c4c4"><circle r="4.2" stroke-width="1.9"/><circle r="6" stroke-width="2" stroke-dasharray="2.2 2.51"/></g>
<rect x="1893.5" y="58.5" width="24" height="27" rx="4" fill="url(#l22)" stroke="#9a9a9a" stroke-width="1"/>
<circle cx="1906" cy="72" r="10" fill="url(#l24)"/>
<path d="M1908.5 66.5v10l-6-5z" fill="#fff"/>
<text x="225" y="176.8" font-size="39.2" fill="#f4f4f4" textLength="185" lengthAdjust="spacingAndGlyphs" stroke="#f4f4f4" stroke-width="0.35">Saturation</text>
<text x="425" y="176.8" font-size="39.2" fill="#f4f4f4" textLength="135.3" lengthAdjust="spacingAndGlyphs" stroke="#f4f4f4" stroke-width="0.35">Sweeps</text>
<rect x="252.5" y="249" width="258" height="459.5" fill="#262626" />
<line x1="252" y1="708.1" x2="511" y2="708.1" stroke="#9a9a9a" stroke-width="1.3" />
<line x1="246" y1="708.1" x2="252" y2="708.1" stroke="#dcdcdc" stroke-width="1.4" />
<text x="245.5" y="713.7" font-size="14.6" fill="#dcdcdc" text-anchor="end" >80</text>
<line x1="252" y1="652.4" x2="511" y2="652.4" stroke="#8c8c8c" stroke-width="1.3" />
<line x1="246" y1="652.4" x2="252" y2="652.4" stroke="#dcdcdc" stroke-width="1.4" />
<text x="245.5" y="658" font-size="14.6" fill="#dcdcdc" text-anchor="end" >85</text>
<line x1="252" y1="595" x2="511" y2="595" stroke="#8c8c8c" stroke-width="1.3" />
<line x1="246" y1="595" x2="252" y2="595" stroke="#dcdcdc" stroke-width="1.4" />
<text x="245.5" y="600.6" font-size="14.6" fill="#dcdcdc" text-anchor="end" >90</text>
<line x1="252" y1="537.6" x2="511" y2="537.6" stroke="#8c8c8c" stroke-width="1.3" />
<line x1="246" y1="537.6" x2="252" y2="537.6" stroke="#dcdcdc" stroke-width="1.4" />
<text x="245.5" y="543.2" font-size="14.6" fill="#dcdcdc" text-anchor="end" >95</text>
<line x1="252" y1="480.2" x2="511" y2="480.2" stroke="#8c8c8c" stroke-width="1.3" />
<line x1="246" y1="480.2" x2="252" y2="480.2" stroke="#dcdcdc" stroke-width="1.4" />
<text x="245.5" y="485.8" font-size="14.6" fill="#dcdcdc" text-anchor="end" >100</text>
<line x1="252" y1="422.2" x2="511" y2="422.2" stroke="#8c8c8c" stroke-width="1.3" />
<line x1="246" y1="422.2" x2="252" y2="422.2" stroke="#dcdcdc" stroke-width="1.4" />
<text x="245.5" y="427.8" font-size="14.6" fill="#dcdcdc" text-anchor="end" >105</text>
<line x1="252" y1="364.8" x2="511" y2="364.8" stroke="#8c8c8c" stroke-width="1.3" />
<line x1="246" y1="364.8" x2="252" y2="364.8" stroke="#dcdcdc" stroke-width="1.4" />
<text x="245.5" y="370.4" font-size="14.6" fill="#dcdcdc" text-anchor="end" >110</text>
<line x1="252" y1="307.3" x2="511" y2="307.3" stroke="#8c8c8c" stroke-width="1.3" />
<line x1="246" y1="307.3" x2="252" y2="307.3" stroke="#dcdcdc" stroke-width="1.4" />
<text x="245.5" y="312.9" font-size="14.6" fill="#dcdcdc" text-anchor="end" >115</text>
<line x1="252" y1="249.4" x2="511" y2="249.4" stroke="#9a9a9a" stroke-width="1.3" />
<line x1="246" y1="249.4" x2="252" y2="249.4" stroke="#dcdcdc" stroke-width="1.4" />
<text x="245.5" y="255" font-size="14.6" fill="#dcdcdc" text-anchor="end" >120</text>
<line x1="252.6" y1="248.7" x2="252.6" y2="715" stroke="#9a9a9a" stroke-width="1.3" />
<line x1="510.3" y1="248.7" x2="510.3" y2="715" stroke="#9a9a9a" stroke-width="1.3" />
<text x="365" y="243" font-size="14.6" fill="#dcdcdc" text-anchor="middle" textLength="86" lengthAdjust="spacingAndGlyphs" >RGB Balance</text>
<text x="381.5" y="724.5" font-size="14.6" fill="#dcdcdc" text-anchor="middle" textLength="37" lengthAdjust="spacingAndGlyphs" >100%</text>
<rect x="277.5" y="485.2" width="67.5" height="222.8" fill="#000" />
<rect x="278.8" y="486.5" width="64.9" height="221.5" fill="url(#l25)" />
<rect x="346" y="472.1" width="68.5" height="235.9" fill="#000" />
<rect x="347.3" y="473.4" width="65.9" height="234.6" fill="url(#l26)" />
<rect x="414.8" y="601.8" width="68.2" height="106.2" fill="#000" />
<rect x="416.1" y="603.1" width="65.6" height="104.9" fill="url(#l27)" />
<rect x="613.2" y="165" width="142.4" height="276" fill="#262626" />
<line x1="613.2" y1="166" x2="755.6" y2="166" stroke="#9a9a9a" stroke-width="1.3" />
<line x1="607.2" y1="166" x2="613.2" y2="166" stroke="#dcdcdc" stroke-width="1.3" />
<text x="606.7" y="170.75" font-size="14.6" fill="#dcdcdc" text-anchor="end" >15</text>
<line x1="613.2" y1="212.03" x2="755.6" y2="212.03" stroke="#8c8c8c" stroke-width="1.3" />
<line x1="607.2" y1="212.03" x2="613.2" y2="212.03" stroke="#dcdcdc" stroke-width="1.3" />
<text x="606.7" y="217.05" font-size="14.6" fill="#dcdcdc" text-anchor="end" >10</text>
<line x1="613.2" y1="258.06" x2="755.6" y2="258.06" stroke="#8c8c8c" stroke-width="1.3" />
<line x1="607.2" y1="258.06" x2="613.2" y2="258.06" stroke="#dcdcdc" stroke-width="1.3" />
<text x="606.7" y="263.35" font-size="14.6" fill="#dcdcdc" text-anchor="end" >5</text>
<line x1="613.2" y1="304.1" x2="755.6" y2="304.1" stroke="#8c8c8c" stroke-width="1.3" />
<line x1="607.2" y1="304.1" x2="613.2" y2="304.1" stroke="#dcdcdc" stroke-width="1.3" />
<text x="606.7" y="309.65" font-size="14.6" fill="#dcdcdc" text-anchor="end" >0</text>
<line x1="613.2" y1="350.14" x2="755.6" y2="350.14" stroke="#8c8c8c" stroke-width="1.3" />
<line x1="607.2" y1="350.14" x2="613.2" y2="350.14" stroke="#dcdcdc" stroke-width="1.3" />
<text x="606.7" y="355.95" font-size="14.6" fill="#dcdcdc" text-anchor="end" >-5</text>
<line x1="613.2" y1="396.17" x2="755.6" y2="396.17" stroke="#8c8c8c" stroke-width="1.3" />
<line x1="607.2" y1="396.17" x2="613.2" y2="396.17" stroke="#dcdcdc" stroke-width="1.3" />
<text x="606.7" y="402.25" font-size="14.6" fill="#dcdcdc" text-anchor="end" >-10</text>
<line x1="613.2" y1="442.21" x2="755.6" y2="442.21" stroke="#9a9a9a" stroke-width="1.3" />
<line x1="607.2" y1="442.21" x2="613.2" y2="442.21" stroke="#dcdcdc" stroke-width="1.3" />
<text x="606.7" y="448.55" font-size="14.6" fill="#dcdcdc" text-anchor="end" >-15</text>
<line x1="613.2" y1="293.57" x2="755.6" y2="293.57" stroke="#156e15" stroke-width="2" />
<line x1="613.2" y1="311.93" x2="755.6" y2="311.93" stroke="#156e15" stroke-width="2" />
<line x1="613.2" y1="275.21" x2="755.6" y2="275.21" stroke="#f4f41a" stroke-width="1.4" />
<line x1="613.2" y1="330.29" x2="755.6" y2="330.29" stroke="#f4f41a" stroke-width="1.4" />
<line x1="613.2" y1="210.95" x2="755.6" y2="210.95" stroke="#c41c26" stroke-width="2.4" />
<line x1="613.2" y1="394.55" x2="755.6" y2="394.55" stroke="#c41c26" stroke-width="2.4" />
<line x1="613.7" y1="164.5" x2="613.7" y2="447" stroke="#9a9a9a" stroke-width="1.3" />
<line x1="755.1" y1="164.5" x2="755.1" y2="447" stroke="#9a9a9a" stroke-width="1.3" />
<text x="670.9" y="159" font-size="14.6" fill="#dcdcdc" text-anchor="middle" textLength="47" lengthAdjust="spacingAndGlyphs" >Delta L</text>
<text x="685.6" y="457.3" font-size="14.6" fill="#dcdcdc" text-anchor="middle" textLength="37" lengthAdjust="spacingAndGlyphs" >100%</text>
<rect x="809.4" y="165" width="143.4" height="276" fill="#262626" />
<line x1="809.4" y1="166" x2="952.8" y2="166" stroke="#9a9a9a" stroke-width="1.3" />
<line x1="803.4" y1="166" x2="809.4" y2="166" stroke="#dcdcdc" stroke-width="1.3" />
<text x="802.9" y="170.75" font-size="14.6" fill="#dcdcdc" text-anchor="end" >15</text>
<line x1="809.4" y1="212.03" x2="952.8" y2="212.03" stroke="#8c8c8c" stroke-width="1.3" />
<line x1="803.4" y1="212.03" x2="809.4" y2="212.03" stroke="#dcdcdc" stroke-width="1.3" />
<text x="802.9" y="217.05" font-size="14.6" fill="#dcdcdc" text-anchor="end" >10</text>
<line x1="809.4" y1="258.06" x2="952.8" y2="258.06" stroke="#8c8c8c" stroke-width="1.3" />
<line x1="803.4" y1="258.06" x2="809.4" y2="258.06" stroke="#dcdcdc" stroke-width="1.3" />
<text x="802.9" y="263.35" font-size="14.6" fill="#dcdcdc" text-anchor="end" >5</text>
<line x1="809.4" y1="304.1" x2="952.8" y2="304.1" stroke="#8c8c8c" stroke-width="1.3" />
<line x1="803.4" y1="304.1" x2="809.4" y2="304.1" stroke="#dcdcdc" stroke-width="1.3" />
<text x="802.9" y="309.65" font-size="14.6" fill="#dcdcdc" text-anchor="end" >0</text>
<line x1="809.4" y1="350.14" x2="952.8" y2="350.14" stroke="#8c8c8c" stroke-width="1.3" />
<line x1="803.4" y1="350.14" x2="809.4" y2="350.14" stroke="#dcdcdc" stroke-width="1.3" />
<text x="802.9" y="355.95" font-size="14.6" fill="#dcdcdc" text-anchor="end" >-5</text>
<line x1="809.4" y1="396.17" x2="952.8" y2="396.17" stroke="#8c8c8c" stroke-width="1.3" />
<line x1="803.4" y1="396.17" x2="809.4" y2="396.17" stroke="#dcdcdc" stroke-width="1.3" />
<text x="802.9" y="402.25" font-size="14.6" fill="#dcdcdc" text-anchor="end" >-10</text>
<line x1="809.4" y1="442.21" x2="952.8" y2="442.21" stroke="#9a9a9a" stroke-width="1.3" />
<line x1="803.4" y1="442.21" x2="809.4" y2="442.21" stroke="#dcdcdc" stroke-width="1.3" />
<text x="802.9" y="448.55" font-size="14.6" fill="#dcdcdc" text-anchor="end" >-15</text>
<line x1="809.4" y1="293.57" x2="952.8" y2="293.57" stroke="#156e15" stroke-width="2" />
<line x1="809.4" y1="311.93" x2="952.8" y2="311.93" stroke="#156e15" stroke-width="2" />
<line x1="809.4" y1="275.21" x2="952.8" y2="275.21" stroke="#f4f41a" stroke-width="1.4" />
<line x1="809.4" y1="330.29" x2="952.8" y2="330.29" stroke="#f4f41a" stroke-width="1.4" />
<line x1="809.4" y1="210.95" x2="952.8" y2="210.95" stroke="#c41c26" stroke-width="2.4" />
<line x1="809.4" y1="394.55" x2="952.8" y2="394.55" stroke="#c41c26" stroke-width="2.4" />
<line x1="809.9" y1="164.5" x2="809.9" y2="447" stroke="#9a9a9a" stroke-width="1.3" />
<line x1="952.3" y1="164.5" x2="952.3" y2="447" stroke="#9a9a9a" stroke-width="1.3" />
<text x="867.6" y="159" font-size="14.6" fill="#dcdcdc" text-anchor="middle" textLength="49" lengthAdjust="spacingAndGlyphs" >Delta C</text>
<text x="882.3" y="457.3" font-size="14.6" fill="#dcdcdc" text-anchor="middle" textLength="37" lengthAdjust="spacingAndGlyphs" >100%</text>
<rect x="1006.1" y="165" width="142.6" height="276" fill="#262626" />
<line x1="1006.1" y1="166" x2="1148.7" y2="166" stroke="#9a9a9a" stroke-width="1.3" />
<line x1="1000.1" y1="166" x2="1006.1" y2="166" stroke="#dcdcdc" stroke-width="1.3" />
<text x="999.6" y="170.75" font-size="14.6" fill="#dcdcdc" text-anchor="end" >15</text>
<line x1="1006.1" y1="212.03" x2="1148.7" y2="212.03" stroke="#8c8c8c" stroke-width="1.3" />
<line x1="1000.1" y1="212.03" x2="1006.1" y2="212.03" stroke="#dcdcdc" stroke-width="1.3" />
<text x="999.6" y="217.05" font-size="14.6" fill="#dcdcdc" text-anchor="end" >10</text>
<line x1="1006.1" y1="258.06" x2="1148.7" y2="258.06" stroke="#8c8c8c" stroke-width="1.3" />
<line x1="1000.1" y1="258.06" x2="1006.1" y2="258.06" stroke="#dcdcdc" stroke-width="1.3" />
<text x="999.6" y="263.35" font-size="14.6" fill="#dcdcdc" text-anchor="end" >5</text>
<line x1="1006.1" y1="304.1" x2="1148.7" y2="304.1" stroke="#8c8c8c" stroke-width="1.3" />
<line x1="1000.1" y1="304.1" x2="1006.1" y2="304.1" stroke="#dcdcdc" stroke-width="1.3" />
<text x="999.6" y="309.65" font-size="14.6" fill="#dcdcdc" text-anchor="end" >0</text>
<line x1="1006.1" y1="350.14" x2="1148.7" y2="350.14" stroke="#8c8c8c" stroke-width="1.3" />
<line x1="1000.1" y1="350.14" x2="1006.1" y2="350.14" stroke="#dcdcdc" stroke-width="1.3" />
<text x="999.6" y="355.95" font-size="14.6" fill="#dcdcdc" text-anchor="end" >-5</text>
<line x1="1006.1" y1="396.17" x2="1148.7" y2="396.17" stroke="#8c8c8c" stroke-width="1.3" />
<line x1="1000.1" y1="396.17" x2="1006.1" y2="396.17" stroke="#dcdcdc" stroke-width="1.3" />
<text x="999.6" y="402.25" font-size="14.6" fill="#dcdcdc" text-anchor="end" >-10</text>
<line x1="1006.1" y1="442.21" x2="1148.7" y2="442.21" stroke="#9a9a9a" stroke-width="1.3" />
<line x1="1000.1" y1="442.21" x2="1006.1" y2="442.21" stroke="#dcdcdc" stroke-width="1.3" />
<text x="999.6" y="448.55" font-size="14.6" fill="#dcdcdc" text-anchor="end" >-15</text>
<line x1="1006.1" y1="293.57" x2="1148.7" y2="293.57" stroke="#156e15" stroke-width="2" />
<line x1="1006.1" y1="311.93" x2="1148.7" y2="311.93" stroke="#156e15" stroke-width="2" />
<line x1="1006.1" y1="275.21" x2="1148.7" y2="275.21" stroke="#f4f41a" stroke-width="1.4" />
<line x1="1006.1" y1="330.29" x2="1148.7" y2="330.29" stroke="#f4f41a" stroke-width="1.4" />
<line x1="1006.1" y1="210.95" x2="1148.7" y2="210.95" stroke="#c41c26" stroke-width="2.4" />
<line x1="1006.1" y1="394.55" x2="1148.7" y2="394.55" stroke="#c41c26" stroke-width="2.4" />
<line x1="1006.6" y1="164.5" x2="1006.6" y2="447" stroke="#9a9a9a" stroke-width="1.3" />
<line x1="1148.2" y1="164.5" x2="1148.2" y2="447" stroke="#9a9a9a" stroke-width="1.3" />
<text x="1063.9" y="159" font-size="14.6" fill="#dcdcdc" text-anchor="middle" textLength="50" lengthAdjust="spacingAndGlyphs" >Delta H</text>
<text x="1078.6" y="457.3" font-size="14.6" fill="#dcdcdc" text-anchor="middle" textLength="37" lengthAdjust="spacingAndGlyphs" >100%</text>
<rect x="626.5" y="300.8" width="114.5" height="3" fill="#000" />
<rect x="823" y="259.8" width="114" height="44.4" fill="#000" />
<rect x="824.6" y="261.4" width="110.8" height="41.2" fill="url(#l28)" />
<line x1="824.6" y1="275.21" x2="935.4" y2="275.21" stroke="#f8f820" stroke-width="1.3" />
<line x1="824.6" y1="293.57" x2="935.4" y2="293.57" stroke="#4a8c10" stroke-width="2" />
<rect x="1019.5" y="297.2" width="114" height="6.4" fill="#000" />
<rect x="1021" y="298.6" width="111" height="3.4" fill="url(#l29)" />
<rect x="545" y="475.5" width="637.5" height="168.5" fill="#000" />
<rect x="566.5" y="483.7" width="107" height="58.5" fill="#bfbfa5" stroke="#fff" stroke-width="1.2"/>
<rect x="566.5" y="559.4" width="107" height="59.5" fill="#bfbfa5" stroke="#fff" stroke-width="1.2"/>
<text x="620.2" y="635" font-size="12.2" fill="#fff" text-anchor="middle" textLength="24" lengthAdjust="spacingAndGlyphs" >20%</text>
<rect x="691.45" y="483.7" width="107" height="58.5" fill="#c1c188" stroke="#fff" stroke-width="1.2"/>
<rect x="691.45" y="559.4" width="107" height="59.5" fill="#c1c188" stroke="#fff" stroke-width="1.2"/>
<text x="745.15" y="635" font-size="12.2" fill="#fff" text-anchor="middle" textLength="24" lengthAdjust="spacingAndGlyphs" >40%</text>
<rect x="816.4" y="483.7" width="107" height="58.5" fill="#c1c16a" stroke="#fff" stroke-width="1.2"/>
<rect x="816.4" y="559.4" width="107" height="59.5" fill="#c1c16a" stroke="#fff" stroke-width="1.2"/>
<text x="870.1" y="635" font-size="12.2" fill="#fff" text-anchor="middle" textLength="24" lengthAdjust="spacingAndGlyphs" >60%</text>
<rect x="941.35" y="483.7" width="107" height="58.5" fill="#c1c148" stroke="#fff" stroke-width="1.2"/>
<rect x="941.35" y="559.4" width="107" height="59.5" fill="#c1c148" stroke="#fff" stroke-width="1.2"/>
<text x="995.05" y="635" font-size="12.2" fill="#fff" text-anchor="middle" textLength="24" lengthAdjust="spacingAndGlyphs" >80%</text>
<rect x="1066.3" y="483.7" width="107" height="58.5" fill="#c4c200" stroke="#fff" stroke-width="1.2"/>
<rect x="1066.3" y="559.4" width="107" height="59.5" fill="#c4c01e" stroke="#fff" stroke-width="1.2"/>
<text x="1120" y="635" font-size="12.2" fill="#fff" text-anchor="middle" textLength="31" lengthAdjust="spacingAndGlyphs" >100%</text>
<text transform="translate(558 513) rotate(-90)" font-size="12.8" fill="#fff" text-anchor="middle" textLength="34.5" lengthAdjust="spacingAndGlyphs">Actual</text>
<text transform="translate(558 589.6) rotate(-90)" font-size="12.8" fill="#fff" text-anchor="middle" textLength="35" lengthAdjust="spacingAndGlyphs">Target</text>
<rect x="559.5" y="677" width="624" height="255.5" fill="#262626" />
<line x1="559.5" y1="677.1" x2="1183.5" y2="677.1" stroke="#9a9a9a" stroke-width="1.3" />
<line x1="559.5" y1="762.6" x2="1183.5" y2="762.6" stroke="#8c8c8c" stroke-width="1.3" />
<line x1="559.5" y1="848" x2="1183.5" y2="848" stroke="#8c8c8c" stroke-width="1.3" />
<line x1="553" y1="677.1" x2="559.5" y2="677.1" stroke="#dcdcdc" stroke-width="1.3" />
<text x="552.5" y="682.7" font-size="14.6" fill="#dcdcdc" text-anchor="end" >15</text>
<line x1="553" y1="762.6" x2="559.5" y2="762.6" stroke="#dcdcdc" stroke-width="1.3" />
<text x="552.5" y="768.2" font-size="14.6" fill="#dcdcdc" text-anchor="end" >10</text>
<line x1="553" y1="848" x2="559.5" y2="848" stroke="#dcdcdc" stroke-width="1.3" />
<text x="552.5" y="853.6" font-size="14.6" fill="#dcdcdc" text-anchor="end" >5</text>
<line x1="553" y1="932" x2="559.5" y2="932" stroke="#dcdcdc" stroke-width="1.3" />
<text x="552.5" y="937.6" font-size="14.6" fill="#dcdcdc" text-anchor="end" >0</text>
<line x1="559.5" y1="676.4" x2="559.5" y2="939" stroke="#9a9a9a" stroke-width="1.3" />
<line x1="1183.4" y1="676.4" x2="1183.4" y2="939" stroke="#9a9a9a" stroke-width="1.3" />
<line x1="559.5" y1="932.5" x2="1183.5" y2="932.5" stroke="#9a9a9a" stroke-width="1.8" />
<line x1="663.55" y1="932" x2="663.55" y2="939" stroke="#dcdcdc" stroke-width="1.5" />
<line x1="767.5" y1="932" x2="767.5" y2="939" stroke="#dcdcdc" stroke-width="1.5" />
<line x1="871.45" y1="932" x2="871.45" y2="939" stroke="#dcdcdc" stroke-width="1.5" />
<line x1="975.4" y1="932" x2="975.4" y2="939" stroke="#dcdcdc" stroke-width="1.5" />
<line x1="1079.35" y1="932" x2="1079.35" y2="939" stroke="#dcdcdc" stroke-width="1.5" />
<text x="860.5" y="670.5" font-size="14.6" fill="#dcdcdc" text-anchor="middle" textLength="82" lengthAdjust="spacingAndGlyphs" >DeltaE 2000</text>
<text x="611.5" y="949" font-size="14.6" fill="#dcdcdc" text-anchor="middle" >100</text>
<text x="715.6" y="949" font-size="14.6" fill="#dcdcdc" text-anchor="middle" >20%</text>
<text x="819.7" y="949" font-size="14.6" fill="#dcdcdc" text-anchor="middle" >40%</text>
<text x="923.8" y="949" font-size="14.6" fill="#dcdcdc" text-anchor="middle" >60%</text>
<text x="1027.9" y="949" font-size="14.6" fill="#dcdcdc" text-anchor="middle" >80%</text>
<text x="1132" y="949" font-size="14.6" fill="#dcdcdc" text-anchor="middle" >100%</text>
<rect x="636.7" y="924.66" width="10.2" height="7.34" fill="#000" />
<rect x="637.9" y="925.86" width="7.8" height="6.14" fill="url(#l30)" />
<rect x="674.7" y="926.54" width="10.2" height="5.46" fill="#000" />
<rect x="675.9" y="927.74" width="7.8" height="4.26" fill="url(#l31)" />
<rect x="685.84" y="927.39" width="10.2" height="4.61" fill="#000" />
<rect x="687.04" y="928.59" width="7.8" height="3.41" fill="url(#l32)" />
<rect x="696.98" y="917.33" width="10.2" height="14.67" fill="#000" />
<rect x="698.18" y="918.53" width="7.8" height="13.47" fill="url(#l33)" />
<rect x="708.12" y="923.64" width="10.2" height="8.36" fill="#000" />
<rect x="709.32" y="924.84" width="7.8" height="7.16" fill="url(#l34)" />
<rect x="719.26" y="922.45" width="10.2" height="9.55" fill="#000" />
<rect x="720.46" y="923.65" width="7.8" height="8.35" fill="url(#l35)" />
<rect x="730.4" y="923.64" width="10.2" height="8.36" fill="#000" />
<rect x="731.6" y="924.84" width="7.8" height="7.16" fill="url(#l36)" />
<rect x="778.35" y="926.54" width="10.2" height="5.46" fill="#000" />
<rect x="779.55" y="927.74" width="7.8" height="4.26" fill="url(#l37)" />
<rect x="789.49" y="922.79" width="10.2" height="9.21" fill="#000" />
<rect x="790.69" y="923.99" width="7.8" height="8.01" fill="url(#l38)" />
<rect x="800.63" y="916.82" width="10.2" height="15.18" fill="#000" />
<rect x="801.83" y="918.02" width="7.8" height="13.98" fill="url(#l39)" />
<rect x="811.77" y="922.79" width="10.2" height="9.21" fill="#000" />
<rect x="812.97" y="923.99" width="7.8" height="8.01" fill="url(#l40)" />
<rect x="822.91" y="920.74" width="10.2" height="11.26" fill="#000" />
<rect x="824.11" y="921.94" width="7.8" height="10.06" fill="url(#l41)" />
<rect x="834.05" y="922.79" width="10.2" height="9.21" fill="#000" />
<rect x="835.25" y="923.99" width="7.8" height="8.01" fill="url(#l42)" />
<rect x="882" y="924.32" width="10.2" height="7.68" fill="#000" />
<rect x="883.2" y="925.52" width="7.8" height="6.48" fill="url(#l43)" />
<rect x="893.14" y="919.38" width="10.2" height="12.62" fill="#000" />
<rect x="894.34" y="920.58" width="7.8" height="11.42" fill="url(#l44)" />
<rect x="904.28" y="907.61" width="10.2" height="24.39" fill="#000" />
<rect x="905.48" y="908.81" width="7.8" height="23.19" fill="url(#l45)" />
<rect x="915.42" y="922.45" width="10.2" height="9.55" fill="#000" />
<rect x="916.62" y="923.65" width="7.8" height="8.35" fill="url(#l46)" />
<rect x="926.56" y="919.38" width="10.2" height="12.62" fill="#000" />
<rect x="927.76" y="920.58" width="7.8" height="11.42" fill="url(#l47)" />
<rect x="937.7" y="919.38" width="10.2" height="12.62" fill="#000" />
<rect x="938.9" y="920.58" width="7.8" height="11.42" fill="url(#l48)" />
<rect x="985.65" y="923.13" width="10.2" height="8.87" fill="#000" />
<rect x="986.85" y="924.33" width="7.8" height="7.67" fill="url(#l49)" />
<rect x="996.79" y="913.75" width="10.2" height="18.25" fill="#000" />
<rect x="997.99" y="914.95" width="7.8" height="17.05" fill="url(#l50)" />
<rect x="1007.93" y="898.92" width="10.2" height="33.08" fill="#000" />
<rect x="1009.13" y="900.12" width="7.8" height="31.88" fill="url(#l51)" />
<rect x="1019.07" y="922.45" width="10.2" height="9.55" fill="#000" />
<rect x="1020.27" y="923.65" width="7.8" height="8.35" fill="url(#l52)" />
<rect x="1030.21" y="916.48" width="10.2" height="15.52" fill="#000" />
<rect x="1031.41" y="917.68" width="7.8" height="14.32" fill="url(#l53)" />
<rect x="1041.35" y="915.63" width="10.2" height="16.37" fill="#000" />
<rect x="1042.55" y="916.83" width="7.8" height="15.17" fill="url(#l54)" />
<rect x="1089.3" y="921.93" width="10.2" height="10.07" fill="#000" />
<rect x="1090.5" y="923.13" width="7.8" height="8.87" fill="url(#l55)" />
<rect x="1100.44" y="909.49" width="10.2" height="22.51" fill="#000" />
<rect x="1101.64" y="910.69" width="7.8" height="21.31" fill="url(#l56)" />
<rect x="1111.58" y="890.56" width="10.2" height="41.44" fill="#000" />
<rect x="1112.78" y="891.76" width="7.8" height="40.24" fill="url(#l57)" />
<rect x="1122.72" y="920.74" width="10.2" height="11.26" fill="#000" />
<rect x="1123.92" y="921.94" width="7.8" height="10.06" fill="url(#l58)" />
<rect x="1133.86" y="916.48" width="10.2" height="15.52" fill="#000" />
<rect x="1135.06" y="917.68" width="7.8" height="14.32" fill="url(#l59)" />
<rect x="1145" y="913.75" width="10.2" height="18.25" fill="#000" />
<rect x="1146.2" y="914.95" width="7.8" height="17.05" fill="url(#l60)" />
<line x1="560" y1="915.7" x2="1183.5" y2="915.7" stroke="#156e15" stroke-width="2" />
<line x1="560" y1="881.4" x2="1183.5" y2="881.4" stroke="#f4f41a" stroke-width="1.5" />
<line x1="560" y1="760.9" x2="1183.5" y2="760.9" stroke="#c41c26" stroke-width="2.4" />
<text x="215.5" y="768" font-size="29.6" fill="#f4f4f4" textLength="104.5" lengthAdjust="spacingAndGlyphs" stroke="#f4f4f4" stroke-width="0.35">Current</text>
<text x="331" y="768" font-size="29.6" fill="#f4f4f4" textLength="109.6" lengthAdjust="spacingAndGlyphs" stroke="#f4f4f4" stroke-width="0.35">Reading</text>
<text x="215.5" y="810.5" font-size="25" fill="#f4f4f4" textLength="105.5" lengthAdjust="spacingAndGlyphs" >x: 0,4209</text>
<text x="215.5" y="852.5" font-size="25" fill="#f4f4f4" textLength="105.5" lengthAdjust="spacingAndGlyphs" >y: 0,5141</text>
<text x="215.5" y="894.5" font-size="25" fill="#f4f4f4" textLength="114.5" lengthAdjust="spacingAndGlyphs" >fL: 49,371</text>
<text x="215.5" y="936.5" font-size="25" fill="#f4f4f4" textLength="76.3" lengthAdjust="spacingAndGlyphs" >cd/m²:</text>
<text x="302" y="936.5" font-size="25" fill="#f4f4f4" textLength="92" lengthAdjust="spacingAndGlyphs" >169,157</text>
<rect x="1204.2" y="728.3" width="619.5" height="209.7" fill="#0a0a0a" />
<rect x="1205.5" y="729.5" width="617" height="31.3" fill="url(#l61)" />
<text x="1447.7" y="751.8" font-size="17.2" fill="#f0f0f0" text-anchor="middle" textLength="41" lengthAdjust="spacingAndGlyphs" >20%</text>
<text x="1530.7" y="751.8" font-size="17.2" fill="#f0f0f0" text-anchor="middle" textLength="41" lengthAdjust="spacingAndGlyphs" >40%</text>
<text x="1613.8" y="751.8" font-size="17.2" fill="#f0f0f0" text-anchor="middle" textLength="41" lengthAdjust="spacingAndGlyphs" >60%</text>
<text x="1697.2" y="751.8" font-size="17.2" fill="#f0f0f0" text-anchor="middle" textLength="41" lengthAdjust="spacingAndGlyphs" >80%</text>
<text x="1781" y="751.8" font-size="17.2" fill="#f0f0f0" text-anchor="middle" textLength="53" lengthAdjust="spacingAndGlyphs" >100%</text>
<rect x="1205.5" y="760.7" width="617" height="29.4" fill="#404040" />
<text x="1224" y="782.6" font-size="18" fill="#ececec" font-weight="bold" textLength="89" lengthAdjust="spacingAndGlyphs" >x: CIE31</text>
<text x="1413" y="782.6" font-size="18" fill="#ececec" textLength="43" lengthAdjust="spacingAndGlyphs" >0,33</text>
<text x="1496.2" y="782.6" font-size="18" fill="#ececec" textLength="43" lengthAdjust="spacingAndGlyphs" >0,36</text>
<text x="1579.4" y="782.6" font-size="18" fill="#ececec" textLength="43" lengthAdjust="spacingAndGlyphs" >0,38</text>
<text x="1662.6" y="782.6" font-size="18" fill="#ececec" textLength="43" lengthAdjust="spacingAndGlyphs" >0,40</text>
<text x="1745.8" y="782.6" font-size="18" fill="#ececec" textLength="43" lengthAdjust="spacingAndGlyphs" >0,42</text>
<rect x="1205.5" y="790.05" width="617" height="29.4" fill="#808080" />
<text x="1224" y="811.95" font-size="18" fill="#ececec" font-weight="bold" textLength="89" lengthAdjust="spacingAndGlyphs" >y: CIE31</text>
<text x="1413" y="811.95" font-size="18" fill="#ececec" textLength="43" lengthAdjust="spacingAndGlyphs" >0,37</text>
<text x="1496.2" y="811.95" font-size="18" fill="#ececec" textLength="43" lengthAdjust="spacingAndGlyphs" >0,40</text>
<text x="1579.4" y="811.95" font-size="18" fill="#ececec" textLength="43" lengthAdjust="spacingAndGlyphs" >0,44</text>
<text x="1662.6" y="811.95" font-size="18" fill="#ececec" textLength="43" lengthAdjust="spacingAndGlyphs" >0,48</text>
<text x="1745.8" y="811.95" font-size="18" fill="#ececec" textLength="43" lengthAdjust="spacingAndGlyphs" >0,51</text>
<rect x="1205.5" y="819.4" width="617" height="29.4" fill="#404040" />
<text x="1224" y="841.3" font-size="18" fill="#ececec" font-weight="bold" textLength="13.5" lengthAdjust="spacingAndGlyphs" >Y</text>
<text x="1413" y="841.3" font-size="18" fill="#ececec" textLength="69" lengthAdjust="spacingAndGlyphs" >177,23</text>
<text x="1496.2" y="841.3" font-size="18" fill="#ececec" textLength="69" lengthAdjust="spacingAndGlyphs" >174,49</text>
<text x="1579.4" y="841.3" font-size="18" fill="#ececec" textLength="69" lengthAdjust="spacingAndGlyphs" >172,41</text>
<text x="1662.6" y="841.3" font-size="18" fill="#ececec" textLength="69" lengthAdjust="spacingAndGlyphs" >170,68</text>
<text x="1745.8" y="841.3" font-size="18" fill="#ececec" textLength="69" lengthAdjust="spacingAndGlyphs" >169,16</text>
<rect x="1205.5" y="848.75" width="617" height="29.4" fill="#808080" />
<text x="1224" y="870.65" font-size="18" fill="#ececec" font-weight="bold" textLength="161" lengthAdjust="spacingAndGlyphs" >Target x:CIE31</text>
<text x="1413" y="870.65" font-size="18" fill="#ececec" textLength="43" lengthAdjust="spacingAndGlyphs" >0,33</text>
<text x="1496.2" y="870.65" font-size="18" fill="#ececec" textLength="43" lengthAdjust="spacingAndGlyphs" >0,36</text>
<text x="1579.4" y="870.65" font-size="18" fill="#ececec" textLength="43" lengthAdjust="spacingAndGlyphs" >0,38</text>
<text x="1662.6" y="870.65" font-size="18" fill="#ececec" textLength="43" lengthAdjust="spacingAndGlyphs" >0,40</text>
<text x="1745.8" y="870.65" font-size="18" fill="#ececec" textLength="43" lengthAdjust="spacingAndGlyphs" >0,42</text>
<rect x="1205.5" y="878.1" width="617" height="29.4" fill="#404040" />
<text x="1224" y="900" font-size="18" fill="#ececec" font-weight="bold" textLength="161" lengthAdjust="spacingAndGlyphs" >Target y:CIE31</text>
<text x="1413" y="900" font-size="18" fill="#ececec" textLength="43" lengthAdjust="spacingAndGlyphs" >0,36</text>
<text x="1496.2" y="900" font-size="18" fill="#ececec" textLength="43" lengthAdjust="spacingAndGlyphs" >0,40</text>
<text x="1579.4" y="900" font-size="18" fill="#ececec" textLength="43" lengthAdjust="spacingAndGlyphs" >0,44</text>
<text x="1662.6" y="900" font-size="18" fill="#ececec" textLength="43" lengthAdjust="spacingAndGlyphs" >0,47</text>
<text x="1745.8" y="900" font-size="18" fill="#ececec" textLength="43" lengthAdjust="spacingAndGlyphs" >0,51</text>
<rect x="1205.5" y="907.45" width="617" height="29.4" fill="#808080" />
<text x="1224" y="929.35" font-size="18" fill="#ececec" font-weight="bold" textLength="93" lengthAdjust="spacingAndGlyphs" >Target Y</text>
<text x="1413" y="929.35" font-size="18" fill="#ececec" textLength="69" lengthAdjust="spacingAndGlyphs" >177,18</text>
<text x="1496.2" y="929.35" font-size="18" fill="#ececec" textLength="69" lengthAdjust="spacingAndGlyphs" >174,07</text>
<text x="1579.4" y="929.35" font-size="18" fill="#ececec" textLength="69" lengthAdjust="spacingAndGlyphs" >171,68</text>
<text x="1662.6" y="929.35" font-size="18" fill="#ececec" textLength="69" lengthAdjust="spacingAndGlyphs" >169,81</text>
<text x="1745.8" y="929.35" font-size="18" fill="#ececec" textLength="69" lengthAdjust="spacingAndGlyphs" >167,99</text>
<rect x="1204" y="132" width="720" height="589" fill="#c8c400" />
<rect x="1211.3" y="139.3" width="720" height="574.6" fill="#333333" />
<rect x="1240.5" y="162.8" width="668" height="521.6" fill="#262626" />
<text x="1561.5" y="157.6" font-size="14.8" fill="#dcdcdc" text-anchor="middle" textLength="78" lengthAdjust="spacingAndGlyphs" >CIE 1931 xy</text>
<g clip-path="url(#cpl)"><rect x="1295" y="166" width="22" height="2" fill="url(#c62)"/><rect x="1287" y="168" width="39" height="2" fill="url(#c63)"/><rect x="1282" y="170" width="51" height="2" fill="url(#c64)"/><rect x="1279" y="172" width="61" height="2" fill="url(#c65)"/><rect x="1276" y="174" width="69" height="2" fill="url(#c66)"/><rect x="1274" y="176" width="76" height="2" fill="url(#c67)"/><rect x="1271" y="178" width="84" height="2" fill="url(#c68)"/><rect x="1269" y="180" width="91" height="2" fill="url(#c69)"/><rect x="1268" y="182" width="96" height="2" fill="url(#c70)"/><rect x="1266" y="184" width="103" height="2" fill="url(#c71)"/><rect x="1265" y="186" width="108" height="2" fill="url(#c72)"/><rect x="1263" y="188" width="114" height="2" fill="url(#c73)"/><rect x="1262" y="190" width="119" height="2" fill="url(#c74)"/><rect x="1261" y="192" width="124" height="2" fill="url(#c75)"/><rect x="1260" y="194" width="129" height="2" fill="url(#c76)"/><rect x="1259" y="196" width="134" height="2" fill="url(#c77)"/><rect x="1258" y="198" width="138" height="2" fill="url(#c78)"/><rect x="1257" y="200" width="143" height="2" fill="url(#c79)"/><rect x="1256" y="202" width="148" height="2" fill="url(#c80)"/><rect x="1255" y="204" width="152" height="2" fill="url(#c81)"/><rect x="1254" y="206" width="157" height="2" fill="url(#c82)"/><rect x="1254" y="208" width="160" height="2" fill="url(#c83)"/><rect x="1253" y="210" width="164" height="2" fill="url(#c84)"/><rect x="1252" y="212" width="169" height="2" fill="url(#c85)"/><rect x="1252" y="214" width="172" height="2" fill="url(#c86)"/><rect x="1251" y="216" width="176" height="2" fill="url(#c87)"/><rect x="1250" y="218" width="180" height="2" fill="url(#c88)"/><rect x="1250" y="220" width="184" height="2" fill="url(#c89)"/><rect x="1249" y="222" width="188" height="2" fill="url(#c90)"/><rect x="1249" y="224" width="191" height="2" fill="url(#c91)"/><rect x="1248" y="226" width="195" height="2" fill="url(#c92)"/><rect x="1248" y="228" width="198" height="2" fill="url(#c93)"/><rect x="1247" y="230" width="202" height="2" fill="url(#c94)"/><rect x="1247" y="232" width="205" height="2" fill="url(#c95)"/><rect x="1247" y="234" width="208" height="2" fill="url(#c96)"/><rect x="1246" y="236" width="212" height="2" fill="url(#c97)"/><rect x="1246" y="238" width="215" height="2" fill="url(#c98)"/><rect x="1246" y="240" width="218" height="2" fill="url(#c99)"/><rect x="1246" y="242" width="221" height="2" fill="url(#c100)"/><rect x="1245" y="244" width="224" height="2" fill="url(#c101)"/><rect x="1245" y="246" width="227" height="2" fill="url(#c102)"/><rect x="1245" y="248" width="230" height="2" fill="url(#c103)"/><rect x="1245" y="250" width="233" height="2" fill="url(#c104)"/><rect x="1244" y="252" width="237" height="2" fill="url(#c105)"/><rect x="1244" y="254" width="239" height="2" fill="url(#c106)"/><rect x="1244" y="256" width="242" height="2" fill="url(#c107)"/><rect x="1244" y="258" width="245" height="2" fill="url(#c108)"/><rect x="1244" y="260" width="248" height="2" fill="url(#c109)"/><rect x="1243" y="262" width="252" height="2" fill="url(#c110)"/><rect x="1243" y="264" width="254" height="2" fill="url(#c111)"/><rect x="1243" y="266" width="257" height="2" fill="url(#c112)"/><rect x="1243" y="268" width="260" height="2" fill="url(#c113)"/><rect x="1243" y="270" width="262" height="2" fill="url(#c114)"/><rect x="1243" y="272" width="265" height="2" fill="url(#c115)"/><rect x="1243" y="274" width="268" height="2" fill="url(#c116)"/><rect x="1243" y="276" width="271" height="2" fill="url(#c117)"/><rect x="1243" y="278" width="273" height="2" fill="url(#c118)"/><rect x="1243" y="280" width="276" height="2" fill="url(#c119)"/><rect x="1243" y="282" width="279" height="2" fill="url(#c120)"/><rect x="1243" y="284" width="281" height="2" fill="url(#c121)"/><rect x="1243" y="286" width="284" height="2" fill="url(#c122)"/><rect x="1242" y="288" width="288" height="2" fill="url(#c123)"/><rect x="1242" y="290" width="290" height="2" fill="url(#c124)"/><rect x="1242" y="292" width="293" height="2" fill="url(#c125)"/><rect x="1242" y="294" width="296" height="2" fill="url(#c126)"/><rect x="1242" y="296" width="298" height="2" fill="url(#c127)"/><rect x="1243" y="298" width="300" height="2" fill="url(#c128)"/><rect x="1243" y="300" width="302" height="2" fill="url(#c129)"/><rect x="1243" y="302" width="305" height="2" fill="url(#c130)"/><rect x="1243" y="304" width="308" height="2" fill="url(#c131)"/><rect x="1243" y="306" width="310" height="2" fill="url(#c132)"/><rect x="1243" y="308" width="313" height="2" fill="url(#c133)"/><rect x="1243" y="310" width="315" height="2" fill="url(#c134)"/><rect x="1243" y="312" width="318" height="2" fill="url(#c135)"/><rect x="1243" y="314" width="321" height="2" fill="url(#c136)"/><rect x="1243" y="316" width="323" height="2" fill="url(#c137)"/><rect x="1243" y="318" width="326" height="2" fill="url(#c138)"/><rect x="1244" y="320" width="327" height="2" fill="url(#c139)"/><rect x="1244" y="322" width="330" height="2" fill="url(#c140)"/><rect x="1244" y="324" width="333" height="2" fill="url(#c141)"/><rect x="1244" y="326" width="335" height="2" fill="url(#c142)"/><rect x="1244" y="328" width="338" height="2" fill="url(#c143)"/><rect x="1244" y="330" width="341" height="2" fill="url(#c144)"/><rect x="1244" y="332" width="343" height="2" fill="url(#c145)"/><rect x="1244" y="334" width="346" height="2" fill="url(#c146)"/><rect x="1245" y="336" width="347" height="2" fill="url(#c147)"/><rect x="1245" y="338" width="350" height="2" fill="url(#c148)"/><rect x="1245" y="340" width="352" height="2" fill="url(#c149)"/><rect x="1245" y="342" width="355" height="2" fill="url(#c150)"/><rect x="1245" y="344" width="358" height="2" fill="url(#c151)"/><rect x="1246" y="346" width="359" height="2" fill="url(#c152)"/><rect x="1246" y="348" width="362" height="2" fill="url(#c153)"/><rect x="1246" y="350" width="364" height="2" fill="url(#c154)"/><rect x="1246" y="352" width="367" height="2" fill="url(#c155)"/><rect x="1246" y="354" width="370" height="2" fill="url(#c156)"/><rect x="1247" y="356" width="371" height="2" fill="url(#c157)"/><rect x="1247" y="358" width="374" height="2" fill="url(#c158)"/><rect x="1247" y="360" width="376" height="2" fill="url(#c159)"/><rect x="1247" y="362" width="379" height="2" fill="url(#c160)"/><rect x="1248" y="364" width="380" height="2" fill="url(#c161)"/><rect x="1248" y="366" width="383" height="2" fill="url(#c162)"/><rect x="1248" y="368" width="386" height="2" fill="url(#c163)"/><rect x="1248" y="370" width="388" height="2" fill="url(#c164)"/><rect x="1249" y="372" width="390" height="2" fill="url(#c165)"/><rect x="1249" y="374" width="392" height="2" fill="url(#c166)"/><rect x="1249" y="376" width="395" height="2" fill="url(#c167)"/><rect x="1250" y="378" width="396" height="2" fill="url(#c168)"/><rect x="1250" y="380" width="399" height="2" fill="url(#c169)"/><rect x="1250" y="382" width="401" height="2" fill="url(#c170)"/><rect x="1250" y="384" width="404" height="2" fill="url(#c171)"/><rect x="1251" y="386" width="406" height="2" fill="url(#c172)"/><rect x="1251" y="388" width="408" height="2" fill="url(#c173)"/><rect x="1251" y="390" width="411" height="2" fill="url(#c174)"/><rect x="1252" y="392" width="412" height="2" fill="url(#c175)"/><rect x="1252" y="394" width="415" height="2" fill="url(#c176)"/><rect x="1252" y="396" width="417" height="2" fill="url(#c177)"/><rect x="1253" y="398" width="419" height="2" fill="url(#c178)"/><rect x="1253" y="400" width="422" height="2" fill="url(#c179)"/><rect x="1253" y="402" width="424" height="2" fill="url(#c180)"/><rect x="1254" y="404" width="426" height="2" fill="url(#c181)"/><rect x="1254" y="406" width="428" height="2" fill="url(#c182)"/><rect x="1254" y="408" width="431" height="2" fill="url(#c183)"/><rect x="1255" y="410" width="433" height="2" fill="url(#c184)"/><rect x="1255" y="412" width="435" height="2" fill="url(#c185)"/><rect x="1255" y="414" width="438" height="2" fill="url(#c186)"/><rect x="1256" y="416" width="439" height="2" fill="url(#c187)"/><rect x="1256" y="418" width="442" height="2" fill="url(#c188)"/><rect x="1257" y="420" width="443" height="2" fill="url(#c189)"/><rect x="1257" y="422" width="446" height="2" fill="url(#c190)"/><rect x="1257" y="424" width="449" height="2" fill="url(#c191)"/><rect x="1258" y="426" width="450" height="2" fill="url(#c192)"/><rect x="1258" y="428" width="453" height="2" fill="url(#c193)"/><rect x="1259" y="430" width="454" height="2" fill="url(#c194)"/><rect x="1259" y="432" width="457" height="2" fill="url(#c195)"/><rect x="1259" y="434" width="459" height="2" fill="url(#c196)"/><rect x="1260" y="436" width="461" height="2" fill="url(#c197)"/><rect x="1260" y="438" width="463" height="2" fill="url(#c198)"/><rect x="1261" y="440" width="465" height="2" fill="url(#c199)"/><rect x="1261" y="442" width="468" height="2" fill="url(#c200)"/><rect x="1261" y="444" width="470" height="2" fill="url(#c201)"/><rect x="1262" y="446" width="472" height="2" fill="url(#c202)"/><rect x="1262" y="448" width="474" height="2" fill="url(#c203)"/><rect x="1263" y="450" width="476" height="2" fill="url(#c204)"/><rect x="1263" y="452" width="478" height="2" fill="url(#c205)"/><rect x="1264" y="454" width="480" height="2" fill="url(#c206)"/><rect x="1264" y="456" width="483" height="2" fill="url(#c207)"/><rect x="1265" y="458" width="484" height="2" fill="url(#c208)"/><rect x="1265" y="460" width="487" height="2" fill="url(#c209)"/><rect x="1266" y="462" width="488" height="2" fill="url(#c210)"/><rect x="1266" y="464" width="491" height="2" fill="url(#c211)"/><rect x="1266" y="466" width="494" height="2" fill="url(#c212)"/><rect x="1267" y="468" width="495" height="2" fill="url(#c213)"/><rect x="1267" y="470" width="498" height="2" fill="url(#c214)"/><rect x="1268" y="472" width="499" height="2" fill="url(#c215)"/><rect x="1268" y="474" width="502" height="2" fill="url(#c216)"/><rect x="1269" y="476" width="503" height="2" fill="url(#c217)"/><rect x="1269" y="478" width="506" height="2" fill="url(#c218)"/><rect x="1270" y="480" width="508" height="2" fill="url(#c219)"/><rect x="1270" y="482" width="510" height="2" fill="url(#c220)"/><rect x="1271" y="484" width="512" height="2" fill="url(#c221)"/><rect x="1271" y="486" width="514" height="2" fill="url(#c222)"/><rect x="1272" y="488" width="516" height="2" fill="url(#c223)"/><rect x="1273" y="490" width="517" height="2" fill="url(#c224)"/><rect x="1273" y="492" width="520" height="2" fill="url(#c225)"/><rect x="1274" y="494" width="522" height="2" fill="url(#c226)"/><rect x="1274" y="496" width="524" height="2" fill="url(#c227)"/><rect x="1275" y="498" width="526" height="2" fill="url(#c228)"/><rect x="1275" y="500" width="528" height="2" fill="url(#c229)"/><rect x="1276" y="502" width="530" height="2" fill="url(#c230)"/><rect x="1276" y="504" width="532" height="2" fill="url(#c231)"/><rect x="1277" y="506" width="534" height="2" fill="url(#c232)"/><rect x="1277" y="508" width="537" height="2" fill="url(#c233)"/><rect x="1278" y="510" width="538" height="2" fill="url(#c234)"/><rect x="1279" y="512" width="540" height="2" fill="url(#c235)"/><rect x="1279" y="514" width="542" height="2" fill="url(#c236)"/><rect x="1280" y="516" width="544" height="2" fill="url(#c237)"/><rect x="1280" y="518" width="546" height="2" fill="url(#c238)"/><rect x="1281" y="520" width="544" height="2" fill="url(#c239)"/><rect x="1282" y="522" width="538" height="2" fill="url(#c240)"/><rect x="1282" y="524" width="532" height="2" fill="url(#c241)"/><rect x="1283" y="526" width="526" height="2" fill="url(#c242)"/><rect x="1283" y="528" width="520" height="2" fill="url(#c243)"/><rect x="1284" y="530" width="514" height="2" fill="url(#c244)"/><rect x="1285" y="532" width="507" height="2" fill="url(#c245)"/><rect x="1285" y="534" width="502" height="2" fill="url(#c246)"/><rect x="1286" y="536" width="495" height="2" fill="url(#c247)"/><rect x="1287" y="538" width="489" height="2" fill="url(#c248)"/><rect x="1287" y="540" width="483" height="2" fill="url(#c249)"/><rect x="1288" y="542" width="477" height="2" fill="url(#c250)"/><rect x="1289" y="544" width="470" height="2" fill="url(#c251)"/><rect x="1289" y="546" width="465" height="2" fill="url(#c252)"/><rect x="1290" y="548" width="458" height="2" fill="url(#c253)"/><rect x="1291" y="550" width="452" height="2" fill="url(#c254)"/><rect x="1291" y="552" width="446" height="2" fill="url(#c255)"/><rect x="1292" y="554" width="439" height="2" fill="url(#c256)"/><rect x="1293" y="556" width="433" height="2" fill="url(#c257)"/><rect x="1293" y="558" width="427" height="2" fill="url(#c258)"/><rect x="1294" y="560" width="421" height="2" fill="url(#c259)"/><rect x="1295" y="562" width="414" height="2" fill="url(#c260)"/><rect x="1296" y="564" width="408" height="2" fill="url(#c261)"/><rect x="1296" y="566" width="402" height="2" fill="url(#c262)"/><rect x="1297" y="568" width="396" height="2" fill="url(#c263)"/><rect x="1298" y="570" width="389" height="2" fill="url(#c264)"/><rect x="1299" y="572" width="383" height="2" fill="url(#c265)"/><rect x="1300" y="574" width="376" height="2" fill="url(#c266)"/><rect x="1300" y="576" width="371" height="2" fill="url(#c267)"/><rect x="1301" y="578" width="364" height="2" fill="url(#c268)"/><rect x="1302" y="580" width="358" height="2" fill="url(#c269)"/><rect x="1303" y="582" width="351" height="2" fill="url(#c270)"/><rect x="1304" y="584" width="345" height="2" fill="url(#c271)"/><rect x="1305" y="586" width="338" height="2" fill="url(#c272)"/><rect x="1306" y="588" width="332" height="2" fill="url(#c273)"/><rect x="1307" y="590" width="325" height="2" fill="url(#c274)"/><rect x="1307" y="592" width="320" height="2" fill="url(#c275)"/><rect x="1308" y="594" width="313" height="2" fill="url(#c276)"/><rect x="1309" y="596" width="307" height="2" fill="url(#c277)"/><rect x="1310" y="598" width="300" height="2" fill="url(#c278)"/><rect x="1311" y="600" width="294" height="2" fill="url(#c279)"/><rect x="1312" y="602" width="287" height="2" fill="url(#c280)"/><rect x="1313" y="604" width="281" height="2" fill="url(#c281)"/><rect x="1314" y="606" width="274" height="2" fill="url(#c282)"/><rect x="1315" y="608" width="267" height="2" fill="url(#c283)"/><rect x="1316" y="610" width="261" height="2" fill="url(#c284)"/><rect x="1317" y="612" width="254" height="2" fill="url(#c285)"/><rect x="1318" y="614" width="248" height="2" fill="url(#c286)"/><rect x="1319" y="616" width="241" height="2" fill="url(#c287)"/><rect x="1320" y="618" width="235" height="2" fill="url(#c288)"/><rect x="1321" y="620" width="228" height="2" fill="url(#c289)"/><rect x="1322" y="622" width="222" height="2" fill="url(#c290)"/><rect x="1323" y="624" width="215" height="2" fill="url(#c291)"/><rect x="1324" y="626" width="209" height="2" fill="url(#c292)"/><rect x="1325" y="628" width="202" height="2" fill="url(#c293)"/><rect x="1326" y="630" width="196" height="2" fill="url(#c294)"/><rect x="1327" y="632" width="189" height="2" fill="url(#c295)"/><rect x="1329" y="634" width="182" height="2" fill="url(#c296)"/><rect x="1330" y="636" width="175" height="2" fill="url(#c297)"/><rect x="1331" y="638" width="169" height="2" fill="url(#c298)"/><rect x="1332" y="640" width="162" height="2" fill="url(#c299)"/><rect x="1334" y="642" width="155" height="2" fill="url(#c300)"/><rect x="1335" y="644" width="148" height="2" fill="url(#c301)"/><rect x="1336" y="646" width="142" height="2" fill="url(#c302)"/><rect x="1338" y="648" width="134" height="2" fill="url(#c303)"/><rect x="1339" y="650" width="128" height="2" fill="url(#c304)"/><rect x="1341" y="652" width="120" height="2" fill="url(#c305)"/><rect x="1342" y="654" width="114" height="2" fill="url(#c306)"/><rect x="1344" y="656" width="106" height="2" fill="url(#c307)"/><rect x="1346" y="658" width="99" height="2" fill="url(#c308)"/><rect x="1348" y="660" width="91" height="2" fill="url(#c309)"/><rect x="1350" y="662" width="83" height="2" fill="url(#c310)"/><rect x="1352" y="664" width="76" height="2" fill="url(#c311)"/><rect x="1354" y="666" width="68" height="2" fill="url(#c312)"/><rect x="1357" y="668" width="60" height="2" fill="url(#c313)"/><rect x="1359" y="670" width="52" height="2" fill="url(#c314)"/><rect x="1362" y="672" width="44" height="2" fill="url(#c315)"/><rect x="1365" y="674" width="35" height="2" fill="url(#c316)"/><rect x="1368" y="676" width="27" height="2" fill="url(#c317)"/><rect x="1371" y="678" width="18" height="2" fill="url(#c318)"/><rect x="1374" y="680" width="10" height="2" fill="url(#c319)"/></g>
<g clip-path="url(#cpt)"><rect x="1477" y="312" width="7" height="2" fill="url(#c320)"/><rect x="1476" y="314" width="11" height="2" fill="url(#c321)"/><rect x="1476" y="316" width="14" height="2" fill="url(#c322)"/><rect x="1475" y="318" width="18" height="2" fill="url(#c323)"/><rect x="1474" y="320" width="23" height="2" fill="url(#c324)"/><rect x="1474" y="322" width="26" height="2" fill="url(#c325)"/><rect x="1473" y="324" width="30" height="2" fill="url(#c326)"/><rect x="1472" y="326" width="34" height="2" fill="url(#c327)"/><rect x="1471" y="328" width="39" height="2" fill="url(#c328)"/><rect x="1471" y="330" width="42" height="2" fill="url(#c329)"/><rect x="1470" y="332" width="46" height="2" fill="url(#c330)"/><rect x="1469" y="334" width="50" height="2" fill="url(#c331)"/><rect x="1469" y="336" width="53" height="2" fill="url(#c332)"/><rect x="1468" y="338" width="58" height="2" fill="url(#c333)"/><rect x="1467" y="340" width="62" height="2" fill="url(#c334)"/><rect x="1466" y="342" width="66" height="2" fill="url(#c335)"/><rect x="1466" y="344" width="69" height="2" fill="url(#c336)"/><rect x="1465" y="346" width="74" height="2" fill="url(#c337)"/><rect x="1464" y="348" width="78" height="2" fill="url(#c338)"/><rect x="1464" y="350" width="81" height="2" fill="url(#c339)"/><rect x="1463" y="352" width="85" height="2" fill="url(#c340)"/><rect x="1462" y="354" width="89" height="2" fill="url(#c341)"/><rect x="1461" y="356" width="94" height="2" fill="url(#c342)"/><rect x="1461" y="358" width="97" height="2" fill="url(#c343)"/><rect x="1460" y="360" width="101" height="2" fill="url(#c344)"/><rect x="1459" y="362" width="105" height="2" fill="url(#c345)"/><rect x="1459" y="364" width="109" height="2" fill="url(#c346)"/><rect x="1458" y="366" width="113" height="2" fill="url(#c347)"/><rect x="1457" y="368" width="117" height="2" fill="url(#c348)"/><rect x="1457" y="370" width="120" height="2" fill="url(#c349)"/><rect x="1456" y="372" width="124" height="2" fill="url(#c350)"/><rect x="1455" y="374" width="129" height="2" fill="url(#c351)"/><rect x="1454" y="376" width="133" height="2" fill="url(#c352)"/><rect x="1454" y="378" width="136" height="2" fill="url(#c353)"/><rect x="1453" y="380" width="140" height="2" fill="url(#c354)"/><rect x="1452" y="382" width="145" height="2" fill="url(#c355)"/><rect x="1452" y="384" width="148" height="2" fill="url(#c356)"/><rect x="1451" y="386" width="152" height="2" fill="url(#c357)"/><rect x="1450" y="388" width="156" height="2" fill="url(#c358)"/><rect x="1449" y="390" width="161" height="2" fill="url(#c359)"/><rect x="1449" y="392" width="164" height="2" fill="url(#c360)"/><rect x="1448" y="394" width="168" height="2" fill="url(#c361)"/><rect x="1447" y="396" width="172" height="2" fill="url(#c362)"/><rect x="1447" y="398" width="175" height="2" fill="url(#c363)"/><rect x="1446" y="400" width="180" height="2" fill="url(#c364)"/><rect x="1445" y="402" width="184" height="2" fill="url(#c365)"/><rect x="1444" y="404" width="188" height="2" fill="url(#c366)"/><rect x="1444" y="406" width="191" height="2" fill="url(#c367)"/><rect x="1443" y="408" width="196" height="2" fill="url(#c368)"/><rect x="1442" y="410" width="200" height="2" fill="url(#c369)"/><rect x="1442" y="412" width="203" height="2" fill="url(#c370)"/><rect x="1441" y="414" width="207" height="2" fill="url(#c371)"/><rect x="1440" y="416" width="211" height="2" fill="url(#c372)"/><rect x="1439" y="418" width="216" height="2" fill="url(#c373)"/><rect x="1439" y="420" width="219" height="2" fill="url(#c374)"/><rect x="1438" y="422" width="223" height="2" fill="url(#c375)"/><rect x="1437" y="424" width="227" height="2" fill="url(#c376)"/><rect x="1437" y="426" width="231" height="2" fill="url(#c377)"/><rect x="1436" y="428" width="235" height="2" fill="url(#c378)"/><rect x="1435" y="430" width="239" height="2" fill="url(#c379)"/><rect x="1434" y="432" width="243" height="2" fill="url(#c380)"/><rect x="1434" y="434" width="247" height="2" fill="url(#c381)"/><rect x="1433" y="436" width="251" height="2" fill="url(#c382)"/><rect x="1432" y="438" width="255" height="2" fill="url(#c383)"/><rect x="1432" y="440" width="258" height="2" fill="url(#c384)"/><rect x="1431" y="442" width="262" height="2" fill="url(#c385)"/><rect x="1430" y="444" width="267" height="2" fill="url(#c386)"/><rect x="1429" y="446" width="271" height="2" fill="url(#c387)"/><rect x="1429" y="448" width="274" height="2" fill="url(#c388)"/><rect x="1428" y="450" width="278" height="2" fill="url(#c389)"/><rect x="1427" y="452" width="283" height="2" fill="url(#c390)"/><rect x="1427" y="454" width="286" height="2" fill="url(#c391)"/><rect x="1426" y="456" width="290" height="2" fill="url(#c392)"/><rect x="1425" y="458" width="294" height="2" fill="url(#c393)"/><rect x="1424" y="460" width="298" height="2" fill="url(#c394)"/><rect x="1424" y="462" width="302" height="2" fill="url(#c395)"/><rect x="1423" y="464" width="306" height="2" fill="url(#c396)"/><rect x="1422" y="466" width="310" height="2" fill="url(#c397)"/><rect x="1422" y="468" width="313" height="2" fill="url(#c398)"/><rect x="1421" y="470" width="318" height="2" fill="url(#c399)"/><rect x="1420" y="472" width="322" height="2" fill="url(#c400)"/><rect x="1419" y="474" width="326" height="2" fill="url(#c401)"/><rect x="1419" y="476" width="329" height="2" fill="url(#c402)"/><rect x="1418" y="478" width="333" height="2" fill="url(#c403)"/><rect x="1417" y="480" width="333" height="2" fill="url(#c404)"/><rect x="1417" y="482" width="328" height="2" fill="url(#c405)"/><rect x="1416" y="484" width="325" height="2" fill="url(#c406)"/><rect x="1415" y="486" width="321" height="2" fill="url(#c407)"/><rect x="1415" y="488" width="316" height="2" fill="url(#c408)"/><rect x="1414" y="490" width="313" height="2" fill="url(#c409)"/><rect x="1413" y="492" width="309" height="2" fill="url(#c410)"/><rect x="1412" y="494" width="305" height="2" fill="url(#c411)"/><rect x="1412" y="496" width="301" height="2" fill="url(#c412)"/><rect x="1411" y="498" width="297" height="2" fill="url(#c413)"/><rect x="1410" y="500" width="293" height="2" fill="url(#c414)"/><rect x="1410" y="502" width="289" height="2" fill="url(#c415)"/><rect x="1409" y="504" width="285" height="2" fill="url(#c416)"/><rect x="1408" y="506" width="281" height="2" fill="url(#c417)"/><rect x="1407" y="508" width="278" height="2" fill="url(#c418)"/><rect x="1407" y="510" width="273" height="2" fill="url(#c419)"/><rect x="1406" y="512" width="270" height="2" fill="url(#c420)"/><rect x="1405" y="514" width="266" height="2" fill="url(#c421)"/><rect x="1405" y="516" width="261" height="2" fill="url(#c422)"/><rect x="1404" y="518" width="258" height="2" fill="url(#c423)"/><rect x="1403" y="520" width="254" height="2" fill="url(#c424)"/><rect x="1402" y="522" width="250" height="2" fill="url(#c425)"/><rect x="1402" y="524" width="246" height="2" fill="url(#c426)"/><rect x="1401" y="526" width="242" height="2" fill="url(#c427)"/><rect x="1400" y="528" width="238" height="2" fill="url(#c428)"/><rect x="1400" y="530" width="234" height="2" fill="url(#c429)"/><rect x="1399" y="532" width="230" height="2" fill="url(#c430)"/><rect x="1398" y="534" width="226" height="2" fill="url(#c431)"/><rect x="1397" y="536" width="223" height="2" fill="url(#c432)"/><rect x="1397" y="538" width="218" height="2" fill="url(#c433)"/><rect x="1396" y="540" width="214" height="2" fill="url(#c434)"/><rect x="1395" y="542" width="211" height="2" fill="url(#c435)"/><rect x="1395" y="544" width="206" height="2" fill="url(#c436)"/><rect x="1394" y="546" width="202" height="2" fill="url(#c437)"/><rect x="1393" y="548" width="199" height="2" fill="url(#c438)"/><rect x="1392" y="550" width="195" height="2" fill="url(#c439)"/><rect x="1392" y="552" width="191" height="2" fill="url(#c440)"/><rect x="1391" y="554" width="187" height="2" fill="url(#c441)"/><rect x="1390" y="556" width="183" height="2" fill="url(#c442)"/><rect x="1390" y="558" width="179" height="2" fill="url(#c443)"/><rect x="1389" y="560" width="175" height="2" fill="url(#c444)"/><rect x="1388" y="562" width="171" height="2" fill="url(#c445)"/><rect x="1387" y="564" width="168" height="2" fill="url(#c446)"/><rect x="1387" y="566" width="163" height="2" fill="url(#c447)"/><rect x="1386" y="568" width="159" height="2" fill="url(#c448)"/><rect x="1385" y="570" width="156" height="2" fill="url(#c449)"/><rect x="1385" y="572" width="151" height="2" fill="url(#c450)"/><rect x="1384" y="574" width="147" height="2" fill="url(#c451)"/><rect x="1383" y="576" width="144" height="2" fill="url(#c452)"/><rect x="1382" y="578" width="140" height="2" fill="url(#c453)"/><rect x="1382" y="580" width="135" height="2" fill="url(#c454)"/><rect x="1381" y="582" width="132" height="2" fill="url(#c455)"/><rect x="1380" y="584" width="128" height="2" fill="url(#c456)"/><rect x="1380" y="586" width="123" height="2" fill="url(#c457)"/><rect x="1379" y="588" width="120" height="2" fill="url(#c458)"/><rect x="1378" y="590" width="116" height="2" fill="url(#c459)"/><rect x="1378" y="592" width="112" height="2" fill="url(#c460)"/><rect x="1377" y="594" width="108" height="2" fill="url(#c461)"/><rect x="1376" y="596" width="104" height="2" fill="url(#c462)"/><rect x="1375" y="598" width="101" height="2" fill="url(#c463)"/><rect x="1375" y="600" width="96" height="2" fill="url(#c464)"/><rect x="1374" y="602" width="92" height="2" fill="url(#c465)"/><rect x="1373" y="604" width="89" height="2" fill="url(#c466)"/><rect x="1373" y="606" width="84" height="2" fill="url(#c467)"/><rect x="1372" y="608" width="80" height="2" fill="url(#c468)"/><rect x="1371" y="610" width="77" height="2" fill="url(#c469)"/><rect x="1370" y="612" width="73" height="2" fill="url(#c470)"/><rect x="1370" y="614" width="68" height="2" fill="url(#c471)"/><rect x="1369" y="616" width="65" height="2" fill="url(#c472)"/><rect x="1368" y="618" width="61" height="2" fill="url(#c473)"/><rect x="1368" y="620" width="56" height="2" fill="url(#c474)"/><rect x="1367" y="622" width="53" height="2" fill="url(#c475)"/><rect x="1366" y="624" width="49" height="2" fill="url(#c476)"/><rect x="1365" y="626" width="45" height="2" fill="url(#c477)"/><rect x="1365" y="628" width="41" height="2" fill="url(#c478)"/><rect x="1364" y="630" width="37" height="2" fill="url(#c479)"/><rect x="1363" y="632" width="34" height="2" fill="url(#c480)"/><rect x="1363" y="634" width="29" height="2" fill="url(#c481)"/><rect x="1362" y="636" width="25" height="2" fill="url(#c482)"/><rect x="1361" y="638" width="22" height="2" fill="url(#c483)"/><rect x="1360" y="640" width="18" height="2" fill="url(#c484)"/><rect x="1360" y="642" width="13" height="2" fill="url(#c485)"/><rect x="1359" y="644" width="10" height="2" fill="url(#c486)"/><rect x="1359" y="646" width="5" height="2" fill="url(#c487)"/></g>
<line x1="1240.7" y1="162" x2="1240.7" y2="690" stroke="#9a9a9a" stroke-width="1.5" />
<line x1="1240" y1="162.8" x2="1717.5" y2="162.8" stroke="#9a9a9a" stroke-width="1.5" />
<line x1="1908.2" y1="352" x2="1908.2" y2="685" stroke="#9a9a9a" stroke-width="1.5" />
<line x1="1240" y1="684.4" x2="1909" y2="684.4" stroke="#9a9a9a" stroke-width="1.5" />
<line x1="1241" y1="684" x2="1241" y2="690" stroke="#e8e8e8" stroke-width="1.4" />
<text x="1241" y="706" font-size="15" fill="#dcdcdc" text-anchor="middle" >0</text>
<line x1="1235" y1="684.2" x2="1241" y2="684.2" stroke="#e8e8e8" stroke-width="1.4" />
<text x="1234" y="689.6" font-size="15" fill="#dcdcdc" text-anchor="end" >0</text>
<line x1="1320.43" y1="684" x2="1320.43" y2="690" stroke="#e8e8e8" stroke-width="1.4" />
<text x="1320.43" y="706" font-size="15" fill="#dcdcdc" text-anchor="middle" >0,1</text>
<line x1="1235" y1="622.2" x2="1241" y2="622.2" stroke="#e8e8e8" stroke-width="1.4" />
<text x="1234" y="627.6" font-size="15" fill="#dcdcdc" text-anchor="end" >0,1</text>
<line x1="1399.86" y1="684" x2="1399.86" y2="690" stroke="#e8e8e8" stroke-width="1.4" />
<text x="1399.86" y="706" font-size="15" fill="#dcdcdc" text-anchor="middle" >0,2</text>
<line x1="1235" y1="560.2" x2="1241" y2="560.2" stroke="#e8e8e8" stroke-width="1.4" />
<text x="1234" y="565.6" font-size="15" fill="#dcdcdc" text-anchor="end" >0,2</text>
<line x1="1479.29" y1="684" x2="1479.29" y2="690" stroke="#e8e8e8" stroke-width="1.4" />
<text x="1479.29" y="706" font-size="15" fill="#dcdcdc" text-anchor="middle" >0,3</text>
<line x1="1235" y1="498.2" x2="1241" y2="498.2" stroke="#e8e8e8" stroke-width="1.4" />
<text x="1234" y="503.6" font-size="15" fill="#dcdcdc" text-anchor="end" >0,3</text>
<line x1="1558.72" y1="684" x2="1558.72" y2="690" stroke="#e8e8e8" stroke-width="1.4" />
<text x="1558.72" y="706" font-size="15" fill="#dcdcdc" text-anchor="middle" >0,4</text>
<line x1="1235" y1="436.2" x2="1241" y2="436.2" stroke="#e8e8e8" stroke-width="1.4" />
<text x="1234" y="441.6" font-size="15" fill="#dcdcdc" text-anchor="end" >0,4</text>
<line x1="1638.15" y1="684" x2="1638.15" y2="690" stroke="#e8e8e8" stroke-width="1.4" />
<text x="1638.15" y="706" font-size="15" fill="#dcdcdc" text-anchor="middle" >0,5</text>
<line x1="1235" y1="374.2" x2="1241" y2="374.2" stroke="#e8e8e8" stroke-width="1.4" />
<text x="1234" y="379.6" font-size="15" fill="#dcdcdc" text-anchor="end" >0,5</text>
<line x1="1717.58" y1="684" x2="1717.58" y2="690" stroke="#e8e8e8" stroke-width="1.4" />
<text x="1717.58" y="706" font-size="15" fill="#dcdcdc" text-anchor="middle" >0,6</text>
<line x1="1235" y1="312.2" x2="1241" y2="312.2" stroke="#e8e8e8" stroke-width="1.4" />
<text x="1234" y="317.6" font-size="15" fill="#dcdcdc" text-anchor="end" >0,6</text>
<line x1="1797.01" y1="684" x2="1797.01" y2="690" stroke="#e8e8e8" stroke-width="1.4" />
<text x="1797.01" y="706" font-size="15" fill="#dcdcdc" text-anchor="middle" >0,7</text>
<line x1="1235" y1="250.2" x2="1241" y2="250.2" stroke="#e8e8e8" stroke-width="1.4" />
<text x="1234" y="255.6" font-size="15" fill="#dcdcdc" text-anchor="end" >0,7</text>
<line x1="1876.44" y1="684" x2="1876.44" y2="690" stroke="#e8e8e8" stroke-width="1.4" />
<text x="1876.44" y="706" font-size="15" fill="#dcdcdc" text-anchor="middle" >0,8</text>
<line x1="1235" y1="188.2" x2="1241" y2="188.2" stroke="#e8e8e8" stroke-width="1.4" />
<text x="1234" y="193.6" font-size="15" fill="#dcdcdc" text-anchor="end" >0,8</text>
<rect x="1467.3" y="473" width="14" height="14" fill="#fff" fill-opacity="0.3" stroke="#fff" stroke-opacity="0.85" stroke-width="1.5"/>
<rect x="1453.9" y="473" width="14" height="14" fill="#fff" fill-opacity="0.3" stroke="#fff" stroke-opacity="0.85" stroke-width="1.5"/>
<rect x="1440.1" y="473" width="14" height="14" fill="#fff" fill-opacity="0.3" stroke="#fff" stroke-opacity="0.85" stroke-width="1.5"/>
<rect x="1426.2" y="473" width="14" height="14" fill="#fff" fill-opacity="0.3" stroke="#fff" stroke-opacity="0.85" stroke-width="1.5"/>
<rect x="1412.1" y="473" width="14" height="14" fill="#fff" fill-opacity="0.3" stroke="#fff" stroke-opacity="0.85" stroke-width="1.5"/>
<rect x="1479.5" y="438.8" width="14" height="14" fill="#fff" fill-opacity="0.12" stroke="#fff" stroke-opacity="0.85" stroke-width="1.5"/>
<rect x="1477.9" y="405.3" width="14" height="14" fill="#fff" fill-opacity="0.12" stroke="#fff" stroke-opacity="0.85" stroke-width="1.5"/>
<rect x="1475.4" y="373.5" width="14" height="14" fill="#fff" fill-opacity="0.12" stroke="#fff" stroke-opacity="0.85" stroke-width="1.5"/>
<rect x="1473.9" y="340.9" width="14" height="14" fill="#fff" fill-opacity="0.12" stroke="#fff" stroke-opacity="0.85" stroke-width="1.5"/>
<rect x="1471" y="304.3" width="14" height="14" fill="#fff" fill-opacity="0.12" stroke="#fff" stroke-opacity="0.85" stroke-width="1.5"/>
<rect x="1499.4" y="449.5" width="14" height="14" fill="#fff" fill-opacity="0.12" stroke="#fff" stroke-opacity="0.85" stroke-width="1.5"/>
<rect x="1515.9" y="427.8" width="14" height="14" fill="#fff" fill-opacity="0.12" stroke="#fff" stroke-opacity="0.85" stroke-width="1.5"/>
<rect x="1532.9" y="404.9" width="14" height="14" fill="#fff" fill-opacity="0.12" stroke="#fff" stroke-opacity="0.85" stroke-width="1.5"/>
<rect x="1548.5" y="385.6" width="14" height="14" fill="#fff" fill-opacity="0.12" stroke="#fff" stroke-opacity="0.85" stroke-width="1.5"/>
<rect x="1566.4" y="363" width="14" height="14" fill="#fff" fill-opacity="0.12" stroke="#fff" stroke-opacity="0.85" stroke-width="1.5"/>
<rect x="1533" y="472.9" width="14" height="14" fill="#fff" fill-opacity="0.12" stroke="#fff" stroke-opacity="0.85" stroke-width="1.5"/>
<rect x="1585.6" y="471.8" width="14" height="14" fill="#fff" fill-opacity="0.12" stroke="#fff" stroke-opacity="0.85" stroke-width="1.5"/>
<rect x="1633.6" y="471.5" width="14" height="14" fill="#fff" fill-opacity="0.12" stroke="#fff" stroke-opacity="0.85" stroke-width="1.5"/>
<rect x="1683.9" y="471.1" width="14" height="14" fill="#fff" fill-opacity="0.12" stroke="#fff" stroke-opacity="0.85" stroke-width="1.5"/>
<rect x="1742" y="471.5" width="14" height="14" fill="#fff" fill-opacity="0.12" stroke="#fff" stroke-opacity="0.85" stroke-width="1.5"/>
<rect x="1483.4" y="493.9" width="14" height="14" fill="#fff" fill-opacity="0.12" stroke="#fff" stroke-opacity="0.85" stroke-width="1.5"/>
<rect x="1485" y="516.5" width="14" height="14" fill="#fff" fill-opacity="0.12" stroke="#fff" stroke-opacity="0.85" stroke-width="1.5"/>
<rect x="1485" y="535.9" width="14" height="14" fill="#fff" fill-opacity="0.12" stroke="#fff" stroke-opacity="0.85" stroke-width="1.5"/>
<rect x="1486.5" y="558.7" width="14" height="14" fill="#fff" fill-opacity="0.12" stroke="#fff" stroke-opacity="0.85" stroke-width="1.5"/>
<rect x="1487.9" y="580.9" width="14" height="14" fill="#fff" fill-opacity="0.12" stroke="#fff" stroke-opacity="0.85" stroke-width="1.5"/>
<rect x="1455.5" y="506.3" width="14" height="14" fill="#fff" fill-opacity="0.12" stroke="#fff" stroke-opacity="0.85" stroke-width="1.5"/>
<rect x="1430.4" y="538.6" width="14" height="14" fill="#fff" fill-opacity="0.12" stroke="#fff" stroke-opacity="0.85" stroke-width="1.5"/>
<rect x="1405.4" y="570.8" width="14" height="14" fill="#fff" fill-opacity="0.12" stroke="#fff" stroke-opacity="0.85" stroke-width="1.5"/>
<rect x="1380.1" y="603.4" width="14" height="14" fill="#fff" fill-opacity="0.12" stroke="#fff" stroke-opacity="0.85" stroke-width="1.5"/>
<rect x="1351.8" y="639.8" width="14" height="14" fill="#fff" fill-opacity="0.12" stroke="#fff" stroke-opacity="0.85" stroke-width="1.5"/>
<circle cx="1473.9" cy="479.9" r="4.6" fill="#aab0aa" stroke="#0a0a0a" stroke-width="1.3"/>
<circle cx="1460.9" cy="479.9" r="4.6" fill="#96afaa" stroke="#0a0a0a" stroke-width="1.3"/>
<circle cx="1446.8" cy="479.9" r="4.6" fill="#76aeaa" stroke="#0a0a0a" stroke-width="1.3"/>
<circle cx="1432.9" cy="480.6" r="4.6" fill="#4aacaa" stroke="#0a0a0a" stroke-width="1.3"/>
<circle cx="1419.1" cy="480.4" r="4.6" fill="#10aaaa" stroke="#0a0a0a" stroke-width="1.3"/>
<circle cx="1486.5" cy="445" r="4.6" fill="#aaafa4" stroke="#0a0a0a" stroke-width="1.3"/>
<circle cx="1486.5" cy="410" r="4.6" fill="#96ac91" stroke="#0a0a0a" stroke-width="1.3"/>
<circle cx="1484.9" cy="376" r="4.6" fill="#76a773" stroke="#0a0a0a" stroke-width="1.3"/>
<circle cx="1484" cy="341" r="4.6" fill="#4a9f47" stroke="#0a0a0a" stroke-width="1.3"/>
<circle cx="1482" cy="302.8" r="4.6" fill="#109610" stroke="#0a0a0a" stroke-width="1.3"/>
<circle cx="1506" cy="456" r="4.6" fill="#b1b1a2" stroke="#0a0a0a" stroke-width="1.3"/>
<circle cx="1522.9" cy="432" r="4.6" fill="#b5b38e" stroke="#0a0a0a" stroke-width="1.3"/>
<circle cx="1540.8" cy="410" r="4.6" fill="#bab670" stroke="#0a0a0a" stroke-width="1.3"/>
<circle cx="1556.9" cy="389" r="4.6" fill="#c0b948" stroke="#0a0a0a" stroke-width="1.3"/>
<circle cx="1575" cy="364.9" r="4.6" fill="#c8be18" stroke="#0a0a0a" stroke-width="1.3"/>
<circle cx="1538.6" cy="479.9" r="4.6" fill="#b68a85" stroke="#0a0a0a" stroke-width="1.3"/>
<circle cx="1591.8" cy="478.1" r="4.6" fill="#bb6966" stroke="#0a0a0a" stroke-width="1.3"/>
<circle cx="1639.9" cy="478.1" r="4.6" fill="#bf4a47" stroke="#0a0a0a" stroke-width="1.3"/>
<circle cx="1690.1" cy="477.4" r="4.6" fill="#c42b2a" stroke="#0a0a0a" stroke-width="1.3"/>
<circle cx="1743" cy="477" r="4.6" fill="#c80e0e" stroke="#0a0a0a" stroke-width="1.3"/>
<circle cx="1489" cy="502" r="4.6" fill="#b0a8ab" stroke="#0a0a0a" stroke-width="1.3"/>
<circle cx="1489" cy="525.8" r="4.6" fill="#b296ad" stroke="#0a0a0a" stroke-width="1.3"/>
<circle cx="1490.8" cy="545.9" r="4.6" fill="#b47ab0" stroke="#0a0a0a" stroke-width="1.3"/>
<circle cx="1490.8" cy="568" r="4.6" fill="#b655b4" stroke="#0a0a0a" stroke-width="1.3"/>
<circle cx="1492" cy="591.7" r="4.6" fill="#b928b9" stroke="#0a0a0a" stroke-width="1.3"/>
<circle cx="1462.9" cy="514.8" r="4.6" fill="#a6a6ab" stroke="#0a0a0a" stroke-width="1.3"/>
<circle cx="1435.9" cy="548.6" r="4.6" fill="#9191ac" stroke="#0a0a0a" stroke-width="1.3"/>
<circle cx="1411" cy="581.8" r="4.6" fill="#7474ae" stroke="#0a0a0a" stroke-width="1.3"/>
<circle cx="1387.4" cy="615.8" r="4.6" fill="#5151b1" stroke="#0a0a0a" stroke-width="1.3"/>
<circle cx="1359.6" cy="650.6" r="4.6" fill="#2828b4" stroke="#0a0a0a" stroke-width="1.3"/>
<rect x="1482.6" y="473.3" width="13.4" height="13.4" fill="#fff" fill-opacity="0.5" stroke="#000" stroke-width="1.6"/>
<circle cx="1488.2" cy="480" r="4.4" fill="#fff" stroke="#0a0a0a" stroke-width="1.3"/>
<g clip-path="url(#cpi)"><rect x="1717" y="163" width="193" height="3" fill="url(#c488)"/><rect x="1717" y="166" width="193" height="3" fill="url(#c489)"/><rect x="1717" y="169" width="193" height="3" fill="url(#c490)"/><rect x="1717" y="172" width="193" height="3" fill="url(#c491)"/><rect x="1717" y="175" width="193" height="3" fill="url(#c492)"/><rect x="1717" y="178" width="193" height="3" fill="url(#c493)"/><rect x="1717" y="181" width="193" height="3" fill="url(#c494)"/><rect x="1717" y="184" width="193" height="3" fill="url(#c495)"/><rect x="1717" y="187" width="193" height="3" fill="url(#c496)"/><rect x="1717" y="190" width="193" height="3" fill="url(#c497)"/><rect x="1717" y="193" width="193" height="3" fill="url(#c498)"/><rect x="1717" y="196" width="193" height="3" fill="url(#c499)"/><rect x="1717" y="199" width="193" height="3" fill="url(#c500)"/><rect x="1717" y="202" width="193" height="3" fill="url(#c501)"/><rect x="1717" y="205" width="193" height="3" fill="url(#c502)"/><rect x="1717" y="208" width="193" height="3" fill="url(#c503)"/><rect x="1717" y="211" width="193" height="3" fill="url(#c504)"/><rect x="1717" y="214" width="193" height="3" fill="url(#c505)"/><rect x="1717" y="217" width="193" height="3" fill="url(#c506)"/><rect x="1717" y="220" width="193" height="3" fill="url(#c507)"/><rect x="1717" y="223" width="193" height="3" fill="url(#c508)"/><rect x="1717" y="226" width="193" height="3" fill="url(#c509)"/><rect x="1717" y="229" width="193" height="3" fill="url(#c510)"/><rect x="1717" y="232" width="193" height="3" fill="url(#c511)"/><rect x="1717" y="235" width="193" height="3" fill="url(#c512)"/><rect x="1717" y="238" width="193" height="3" fill="url(#c513)"/><rect x="1717" y="241" width="193" height="3" fill="url(#c514)"/><rect x="1717" y="244" width="193" height="3" fill="url(#c515)"/><rect x="1717" y="247" width="193" height="3" fill="url(#c516)"/><rect x="1717" y="250" width="193" height="3" fill="url(#c517)"/><rect x="1717" y="253" width="193" height="3" fill="url(#c518)"/><rect x="1717" y="256" width="193" height="3" fill="url(#c519)"/><rect x="1717" y="259" width="193" height="3" fill="url(#c520)"/><rect x="1717" y="262" width="193" height="3" fill="url(#c521)"/><rect x="1717" y="265" width="193" height="3" fill="url(#c522)"/><rect x="1717" y="268" width="193" height="3" fill="url(#c523)"/><rect x="1717" y="271" width="193" height="3" fill="url(#c524)"/><rect x="1717" y="274" width="193" height="3" fill="url(#c525)"/><rect x="1717" y="277" width="193" height="3" fill="url(#c526)"/><rect x="1717" y="280" width="193" height="3" fill="url(#c527)"/><rect x="1717" y="283" width="193" height="3" fill="url(#c528)"/><rect x="1717" y="286" width="193" height="3" fill="url(#c529)"/><rect x="1717" y="289" width="193" height="3" fill="url(#c530)"/><rect x="1717" y="292" width="193" height="3" fill="url(#c531)"/><rect x="1717" y="295" width="193" height="3" fill="url(#c532)"/><rect x="1717" y="298" width="193" height="3" fill="url(#c533)"/><rect x="1717" y="301" width="193" height="3" fill="url(#c534)"/><rect x="1717" y="304" width="193" height="3" fill="url(#c535)"/><rect x="1717" y="307" width="193" height="3" fill="url(#c536)"/><rect x="1717" y="310" width="193" height="3" fill="url(#c537)"/><rect x="1717" y="313" width="193" height="3" fill="url(#c538)"/><rect x="1717" y="316" width="193" height="3" fill="url(#c539)"/><rect x="1717" y="319" width="193" height="3" fill="url(#c540)"/><rect x="1717" y="322" width="193" height="3" fill="url(#c541)"/><rect x="1717" y="325" width="193" height="3" fill="url(#c542)"/><rect x="1717" y="328" width="193" height="3" fill="url(#c543)"/><rect x="1717" y="331" width="193" height="3" fill="url(#c544)"/><rect x="1717" y="334" width="193" height="3" fill="url(#c545)"/><rect x="1717" y="337" width="193" height="3" fill="url(#c546)"/><rect x="1717" y="340" width="193" height="3" fill="url(#c547)"/><rect x="1717" y="343" width="193" height="3" fill="url(#c548)"/><rect x="1717" y="346" width="193" height="3" fill="url(#c549)"/><rect x="1717" y="349" width="193" height="3" fill="url(#c550)"/><rect x="1717" y="352" width="193" height="1" fill="url(#c551)"/></g>
<g clip-path="url(#cpi)">
<g clip-path="url(#cpj)"><rect x="1717" y="163" width="193" height="3" fill="url(#c552)"/><rect x="1717" y="166" width="193" height="3" fill="url(#c553)"/><rect x="1717" y="169" width="193" height="3" fill="url(#c554)"/><rect x="1717" y="172" width="193" height="3" fill="url(#c555)"/><rect x="1717" y="175" width="193" height="3" fill="url(#c556)"/><rect x="1717" y="178" width="193" height="3" fill="url(#c557)"/><rect x="1717" y="181" width="193" height="3" fill="url(#c558)"/><rect x="1717" y="184" width="193" height="3" fill="url(#c559)"/><rect x="1717" y="187" width="193" height="3" fill="url(#c560)"/><rect x="1717" y="190" width="193" height="3" fill="url(#c561)"/><rect x="1717" y="193" width="193" height="3" fill="url(#c562)"/><rect x="1717" y="196" width="193" height="3" fill="url(#c563)"/><rect x="1717" y="199" width="193" height="3" fill="url(#c564)"/><rect x="1717" y="202" width="193" height="3" fill="url(#c565)"/><rect x="1717" y="205" width="193" height="3" fill="url(#c566)"/><rect x="1717" y="208" width="193" height="3" fill="url(#c567)"/><rect x="1717" y="211" width="193" height="3" fill="url(#c568)"/><rect x="1717" y="214" width="193" height="3" fill="url(#c569)"/><rect x="1717" y="217" width="193" height="3" fill="url(#c570)"/><rect x="1717" y="220" width="193" height="3" fill="url(#c571)"/><rect x="1717" y="223" width="193" height="3" fill="url(#c572)"/><rect x="1717" y="226" width="193" height="3" fill="url(#c573)"/><rect x="1717" y="229" width="193" height="3" fill="url(#c574)"/><rect x="1717" y="232" width="193" height="3" fill="url(#c575)"/><rect x="1717" y="235" width="193" height="3" fill="url(#c576)"/><rect x="1717" y="238" width="193" height="3" fill="url(#c577)"/><rect x="1717" y="241" width="193" height="3" fill="url(#c578)"/><rect x="1717" y="244" width="193" height="3" fill="url(#c579)"/><rect x="1717" y="247" width="193" height="3" fill="url(#c580)"/><rect x="1717" y="250" width="193" height="3" fill="url(#c581)"/><rect x="1717" y="253" width="193" height="3" fill="url(#c582)"/><rect x="1717" y="256" width="193" height="3" fill="url(#c583)"/><rect x="1717" y="259" width="193" height="3" fill="url(#c584)"/><rect x="1717" y="262" width="193" height="3" fill="url(#c585)"/><rect x="1717" y="265" width="193" height="3" fill="url(#c586)"/><rect x="1717" y="268" width="193" height="3" fill="url(#c587)"/><rect x="1717" y="271" width="193" height="3" fill="url(#c588)"/><rect x="1717" y="274" width="193" height="3" fill="url(#c589)"/><rect x="1717" y="277" width="193" height="3" fill="url(#c590)"/><rect x="1717" y="280" width="193" height="3" fill="url(#c591)"/><rect x="1717" y="283" width="193" height="3" fill="url(#c592)"/><rect x="1717" y="286" width="193" height="3" fill="url(#c593)"/><rect x="1717" y="289" width="193" height="3" fill="url(#c594)"/><rect x="1717" y="292" width="193" height="3" fill="url(#c595)"/><rect x="1717" y="295" width="193" height="3" fill="url(#c596)"/><rect x="1717" y="298" width="193" height="3" fill="url(#c597)"/><rect x="1717" y="301" width="193" height="3" fill="url(#c598)"/><rect x="1717" y="304" width="193" height="3" fill="url(#c599)"/><rect x="1717" y="307" width="193" height="3" fill="url(#c600)"/><rect x="1717" y="310" width="193" height="3" fill="url(#c601)"/><rect x="1717" y="313" width="193" height="3" fill="url(#c602)"/><rect x="1717" y="316" width="193" height="3" fill="url(#c603)"/><rect x="1717" y="319" width="193" height="3" fill="url(#c604)"/><rect x="1717" y="322" width="193" height="3" fill="url(#c605)"/><rect x="1717" y="325" width="193" height="3" fill="url(#c606)"/><rect x="1717" y="328" width="193" height="3" fill="url(#c607)"/><rect x="1717" y="331" width="193" height="3" fill="url(#c608)"/><rect x="1717" y="334" width="193" height="3" fill="url(#c609)"/><rect x="1717" y="337" width="193" height="3" fill="url(#c610)"/><rect x="1717" y="340" width="193" height="3" fill="url(#c611)"/><rect x="1717" y="343" width="193" height="3" fill="url(#c612)"/><rect x="1717" y="346" width="193" height="3" fill="url(#c613)"/><rect x="1717" y="349" width="193" height="3" fill="url(#c614)"/><rect x="1717" y="352" width="193" height="1" fill="url(#c615)"/></g>
</g>
<rect x="1718.4" y="163.4" width="190.2" height="189.2" fill="none" stroke="#8a8a8a" stroke-width="1.3"/>
<rect x="1805.8" y="250.4" width="14.4" height="14.4" fill="none" stroke="#fff" stroke-width="1.5"/>
<circle cx="1819" cy="224" r="4.4" fill="#b8b020" stroke="#0a0a0a" stroke-width="1.3"/>
<rect x="200" y="988" width="1712" height="62" fill="#2a2a2a" />
<rect x="1010" y="988" width="587" height="62" fill="url(#l616)" />
<rect x="1010" y="988" width="180" height="62" fill="url(#l617)" />
<rect x="1420" y="988" width="177" height="62" fill="url(#l618)" />
<path d="M201.2 1050V992.5a4 4 0 0 1 4-4H242.2a4 4 0 0 1 4 4V1050z" fill="url(#l619)"/>
<circle cx="223.6" cy="996" r="7.5" fill="url(#r620)"/>
<path d="M219.2 998.2l4.4-4.4 4.4 4.4z" fill="#2a2a2a"/>
<rect x="206.5" y="1014.4" width="34.8" height="29.5" fill="#ffff00" rx="2.5"/>
<path d="M252 1050V992.5a4 4 0 0 1 4-4H397.4a4 4 0 0 1 4 4V1050z" fill="url(#l619)"/>
<rect x="257.7" y="993.4" width="138.8" height="35.2" fill="#bfbfa5" rx="2.5"/>
<rect x="257.7" y="993.4" width="138.8" height="35.2" fill="none" rx="2.5" stroke="#a6a690" stroke-width="1" stroke-opacity="0.6"/>
<text x="326.7" y="1044" font-size="10.8" fill="#2c2c2c" text-anchor="middle" font-weight="bold" textLength="20.8" lengthAdjust="spacingAndGlyphs" >20%</text>
<path d="M404 1050V992.5a4 4 0 0 1 4-4H549.5a4 4 0 0 1 4 4V1050z" fill="url(#l619)"/>
<rect x="409.7" y="993.4" width="138.9" height="35.2" fill="#c1c188" rx="2.5"/>
<rect x="409.7" y="993.4" width="138.9" height="35.2" fill="none" rx="2.5" stroke="#a6a690" stroke-width="1" stroke-opacity="0.6"/>
<text x="478.75" y="1044" font-size="10.8" fill="#2c2c2c" text-anchor="middle" font-weight="bold" textLength="20.8" lengthAdjust="spacingAndGlyphs" >40%</text>
<path d="M556.6 1050V992.5a4 4 0 0 1 4-4H701.5a4 4 0 0 1 4 4V1050z" fill="url(#l619)"/>
<rect x="562.3" y="993.4" width="138.3" height="35.2" fill="#c1c16a" rx="2.5"/>
<rect x="562.3" y="993.4" width="138.3" height="35.2" fill="none" rx="2.5" stroke="#a6a690" stroke-width="1" stroke-opacity="0.6"/>
<text x="631.05" y="1044" font-size="10.8" fill="#2c2c2c" text-anchor="middle" font-weight="bold" textLength="20.8" lengthAdjust="spacingAndGlyphs" >60%</text>
<path d="M708.2 1050V992.5a4 4 0 0 1 4-4H853.5a4 4 0 0 1 4 4V1050z" fill="url(#l619)"/>
<rect x="713.9" y="993.4" width="138.7" height="35.2" fill="#c1c148" rx="2.5"/>
<rect x="713.9" y="993.4" width="138.7" height="35.2" fill="none" rx="2.5" stroke="#a6a690" stroke-width="1" stroke-opacity="0.6"/>
<text x="782.85" y="1044" font-size="10.8" fill="#2c2c2c" text-anchor="middle" font-weight="bold" textLength="20.8" lengthAdjust="spacingAndGlyphs" >80%</text>
<path d="M860.3 1050V992.5a4 4 0 0 1 4-4H1005.6a4 4 0 0 1 4 4V1050z" fill="#222222"/>
<rect x="866" y="993.4" width="138.7" height="35.2" fill="#c4c200" rx="2.5"/>
<text x="934.95" y="1044" font-size="10.8" fill="#fff" text-anchor="middle" font-weight="bold" textLength="27" lengthAdjust="spacingAndGlyphs" >100%</text>
<path d="M1597 1050V992.5a4 4 0 0 1 4-4H1641a4 4 0 0 1 4 4V1050z" fill="url(#l621)"/>
<line x1="1597" y1="1006.5" x2="1645" y2="1006.5" stroke="#4a4a4a" stroke-width="1.2" />
<circle cx="1621" cy="996.3" r="7.3" fill="url(#l623)"/>
<path d="M1616.3 998.6l4.7-4.6 4.7 4.6z" fill="#2c2c2c"/>
<rect x="1606.3" y="1013" width="29" height="29" rx="3.5" fill="#c8c8c8" stroke="#262626" stroke-width="2"/>
<rect x="1606.3" y="1028" width="29" height="14" fill="#a0a0a0" rx="3" opacity="0.55"/>
<rect x="1606.3" y="1013" width="29" height="29" rx="3.5" fill="none" stroke="#262626" stroke-width="2"/>
<rect x="1614.3" y="1021.2" width="13.8" height="13.2" fill="url(#l624)" />
<path d="M1646.2 1018.3V992.5a4 4 0 0 1 4-4H1692.2V1018.3z" fill="url(#l621)"/>
<circle cx="1669.2" cy="1003" r="10" fill="url(#l627)"/>
<rect x="1692.2" y="988.5" width="45.1" height="29.8" fill="url(#l625)" />
<line x1="1692.2" y1="988.5" x2="1692.2" y2="1018.3" stroke="#444" stroke-width="1" />
<circle cx="1714.75" cy="1003" r="10" fill="url(#l628)"/>
<rect x="1737.3" y="988.5" width="45.2" height="29.8" fill="url(#l621)" />
<line x1="1737.3" y1="988.5" x2="1737.3" y2="1018.3" stroke="#444" stroke-width="1" />
<circle cx="1759.9" cy="1003" r="10" fill="url(#l629)"/>
<rect x="1782.5" y="988.5" width="44.7" height="29.8" fill="url(#l621)" />
<line x1="1782.5" y1="988.5" x2="1782.5" y2="1018.3" stroke="#444" stroke-width="1" />
<circle cx="1804.85" cy="1003" r="10" fill="url(#l630)"/>
<rect x="1827.2" y="988.5" width="45.2" height="29.8" fill="url(#l626)" />
<line x1="1827.2" y1="988.5" x2="1827.2" y2="1018.3" stroke="#444" stroke-width="1" />
<circle cx="1849.8" cy="1003" r="10" fill="url(#r631)"/>
<rect x="1872.4" y="988.5" width="43.6" height="29.8" fill="url(#l621)" />
<line x1="1872.4" y1="988.5" x2="1872.4" y2="1018.3" stroke="#444" stroke-width="1" />
<circle cx="1894.2" cy="1003" r="10" fill="url(#l632)"/>
<line x1="1646" y1="1018.6" x2="1912" y2="1018.6" stroke="#3a3a3a" stroke-width="1.2" />
<rect x="1665" y="999" width="8.4" height="8" fill="#333" />
<path d="M1711.5 997.3v12l10-6z" fill="#333"/>
<g fill="none" stroke="#2e2e2e" stroke-width="2.2"><path d="M1757.8 997.6h-3.2v11.2h3.2 M1762.2 997.6h3.2v11.2h-3.2"/></g>
<path d="M1757.4 1003.2h1.8 M1760.8 1003.2h1.8" stroke="#2e2e2e" stroke-width="1.8"/>
<text x="1805" y="1008.8" font-size="18" fill="#2e2e2e" text-anchor="middle" font-weight="bold" >∞</text>
<g fill="none" stroke="#262626" stroke-width="2"><path d="M1845.2 1001.5a5 5 0 0 1 8.6-2.2 M1854.4 1004.5a5 5 0 0 1-8.6 2.2"/></g>
<path d="M1855 996v4.6h-4.6z M1844.6 1010v-4.6h4.6z" fill="#262626"/>
<rect x="1646.2" y="1019.3" width="136.3" height="31" fill="url(#l622)"/>
<rect x="1782.5" y="1019.3" width="131" height="31" fill="url(#l622)"/>
<line x1="1782.5" y1="1019.3" x2="1782.5" y2="1050" stroke="#444" stroke-width="1.2" />
<circle cx="1677" cy="1034.5" r="10" fill="url(#l633)"/>
<circle cx="1889.5" cy="1034.5" r="10" fill="url(#l634)"/>
<path d="M1676.5 1030l-4 4.5 4 4.5 M1681.5 1030l-4 4.5 4 4.5" fill="none" stroke="#303030" stroke-width="1.9"/>
<path d="M1885.5 1030l4 4.5-4 4.5 M1890.5 1030l4 4.5-4 4.5" fill="none" stroke="#303030" stroke-width="1.9"/>
<text x="1703.5" y="1041.5" font-size="21.4" fill="#2c2c2c" textLength="50.5" lengthAdjust="spacingAndGlyphs" stroke="#2c2c2c" stroke-width="0.55">Back</text>
<text x="1810.3" y="1041.5" font-size="21.4" fill="#2c2c2c" textLength="51.8" lengthAdjust="spacingAndGlyphs" stroke="#2c2c2c" stroke-width="0.55">Next</text>
</svg>
</body></html>
